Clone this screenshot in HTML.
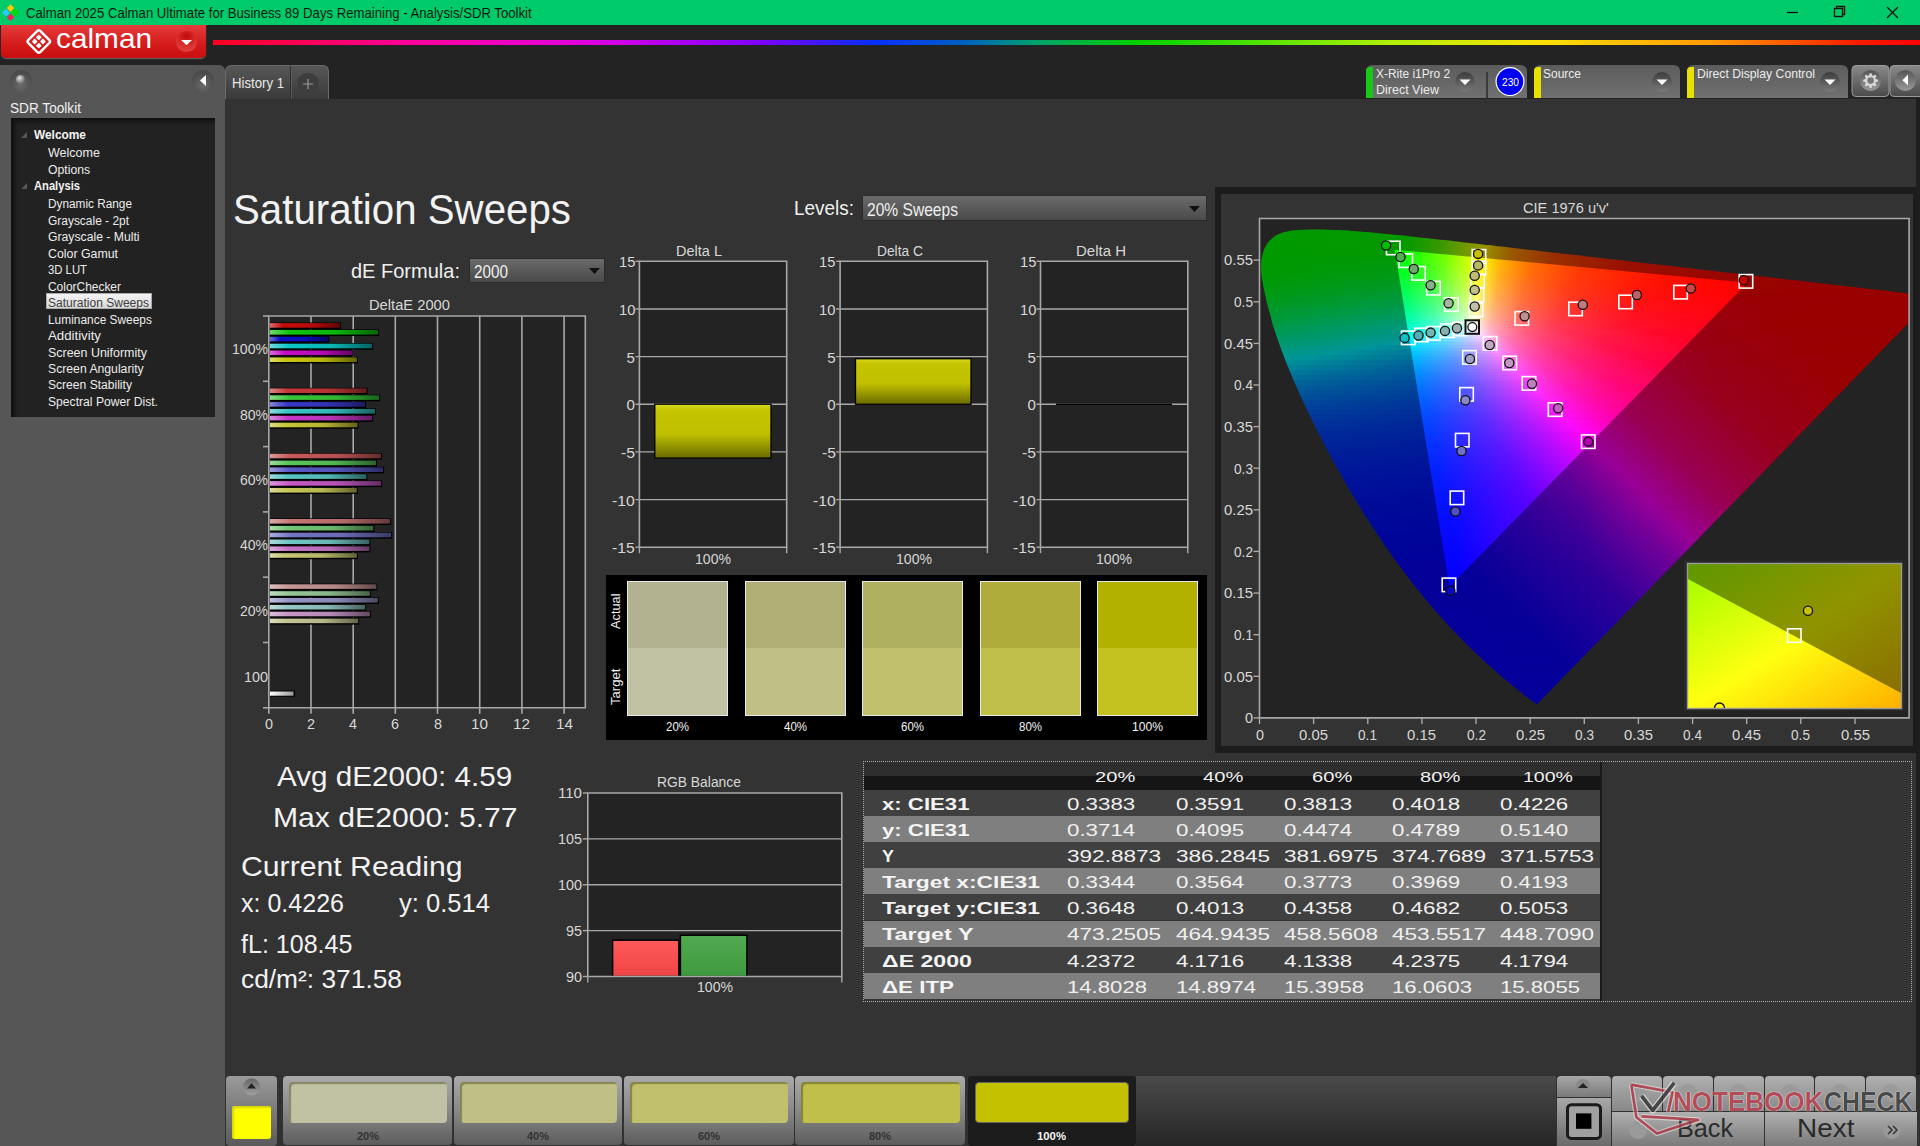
<!DOCTYPE html><html><head><meta charset="utf-8"><style>
*{margin:0;padding:0;box-sizing:border-box}
html,body{width:1920px;height:1146px;overflow:hidden;background:#333;font-family:"Liberation Sans",sans-serif}
.b{position:absolute}
.t{position:absolute;white-space:nowrap;line-height:1;transform-origin:0 0}
svg{position:absolute;left:0;top:0}
</style></head><body><div class="b" style="left:0.0px;top:0.0px;width:1920.0px;height:1146.0px;background:#333"></div>
<div class="b" style="left:0.0px;top:0.0px;width:1920.0px;height:25.0px;background:#00cb6a"></div>
<div class="b" style="left:0.0px;top:25.0px;width:1920.0px;height:74.0px;background:#232323"></div>
<div class="b" style="left:0.0px;top:65.0px;width:225.0px;height:1081.0px;background:#565656;border-top-right-radius:6px"></div>
<div class="b" style="left:225.0px;top:99.0px;width:1691.0px;height:976.0px;background:#333"></div>
<div class="b" style="left:1916.0px;top:99.0px;width:4.0px;height:1047.0px;background:#1e1e1e"></div>
<svg width="30" height="25" style="left:0;top:0"><g transform="translate(10.5,12.7) rotate(45)"><rect x="-6" y="-6" width="5.4" height="5.4" rx="1" fill="#ffc800"/><rect x="0.6" y="-6" width="5.4" height="5.4" rx="1" fill="#00dc00"/><rect x="-6" y="0.6" width="5.4" height="5.4" rx="1" fill="#30c8ff"/><rect x="0.6" y="0.6" width="5.4" height="5.4" rx="1" fill="#ff1a60"/></g></svg>
<div class="t" style="left:26.0px;top:6.4px;font-size:14.83px;transform:scaleX(0.887);color:#0a1a0f;">Calman 2025 Calman Ultimate for Business 89 Days Remaining  - Analysis/SDR Toolkit</div>
<svg width="160" height="25" style="left:1760px;top:0"><g stroke="#111" stroke-width="1.3" fill="none"><line x1="27" y1="12.5" x2="38" y2="12.5"/><rect x="74.5" y="8.5" width="8" height="8"/><path d="M76.5 8.5V6.5h8v8h-2"/><path d="M127 7l11 11M138 7l-11 11"/></g></svg>
<div class="b" style="left:1.0px;top:25.0px;width:205.0px;height:32.5px;background:linear-gradient(#e43c3c,#d41a1a 60%,#c80e0e);border-radius:0 0 5px 5px;box-shadow:0 1px 1px #666"></div>
<svg width="210" height="36" style="left:0;top:24px"><g transform="translate(38.8,17.5) rotate(45)" fill="none" stroke="#fff" stroke-width="2.4"><rect x="-8.5" y="-8.5" width="17" height="17" rx="2"/></g><g transform="translate(38.8,17.5) rotate(45)" fill="#fff"><rect x="-5" y="-5" width="4.2" height="4.2" rx="0.8"/><rect x="0.8" y="-5" width="4.2" height="4.2" rx="0.8"/><rect x="-5" y="0.8" width="4.2" height="4.2" rx="0.8"/><rect x="0.8" y="0.8" width="4.2" height="4.2" rx="0.8"/></g><defs><radialGradient id="lg1" cx="0.5" cy="0.25" r="0.75"><stop offset="0" stop-color="#c40a0a"/><stop offset="1" stop-color="#e24444"/></radialGradient></defs><circle cx="186.5" cy="17.5" r="10.5" fill="url(#lg1)"/><path d="M181 15.9h11l-5.5 5.4z" fill="#fff"/></svg>
<div class="t" style="left:56.3px;top:25.1px;font-size:27.50px;transform:scaleX(1.083);color:#ffffff;">calman</div>
<div class="b" style="left:213.0px;top:40.0px;width:1707.0px;height:5.0px;background:linear-gradient(90deg,#ff0020 0%,#ff00a0 12%,#e000e0 22%,#8000ff 32%,#0030ff 39%,#0060c0 44%,#00a070 48%,#00d000 54%,#40e000 60%,#b0f000 69%,#ffe000 78%,#ff9800 88%,#ff2000 96%,#ff0000 100%)"></div>
<div class="b" style="left:225.0px;top:65.0px;width:104.0px;height:34.0px;background:linear-gradient(#575757,#3a3a3a);border:1px solid #6a6a6a;border-bottom:none;border-radius:6px 6px 0 0"></div>
<div class="b" style="left:290.0px;top:66.0px;width:1.0px;height:33.0px;background:#2e2e2e"></div>
<div class="b" style="left:291.0px;top:66.0px;width:1.0px;height:33.0px;background:#5a5a5a"></div>
<div class="t" style="left:232.0px;top:77.0px;font-size:13.95px;transform:scaleX(0.945);color:#e8e8e8;">History 1</div>
<svg width="30" height="30" style="left:294px;top:68px"><circle cx="14" cy="16" r="11" fill="#3e3e3e"/><path d="M14 11v10M9 16h10" stroke="#9a9a9a" stroke-width="1.2"/></svg>
<div class="b" style="left:1366.0px;top:65.0px;width:161.0px;height:33.0px;background:linear-gradient(#5c5c5c,#707070);border-radius:6px 6px 0 0"></div>
<div class="b" style="left:1366.0px;top:67.0px;width:7.0px;height:31.0px;background:#18c818;border-radius:4px 0 0 0"></div>
<div class="b" style="left:1486.0px;top:72.0px;width:2.0px;height:26.0px;background:#3a3a3a"></div>
<div class="b" style="left:1534.0px;top:65.0px;width:146.0px;height:33.0px;background:linear-gradient(#5c5c5c,#707070);border-radius:6px 6px 0 0"></div>
<div class="b" style="left:1534.0px;top:67.0px;width:7.0px;height:31.0px;background:#e8e000;border-radius:4px 0 0 0"></div>
<div class="b" style="left:1687.0px;top:65.0px;width:161.0px;height:33.0px;background:linear-gradient(#5c5c5c,#707070);border-radius:6px 6px 0 0"></div>
<div class="b" style="left:1687.0px;top:67.0px;width:7.0px;height:31.0px;background:#e8e000;border-radius:4px 0 0 0"></div>
<div class="t" style="left:1376.0px;top:68.7px;font-size:11.92px;color:#ececec;">X-Rite i1Pro 2</div>
<div class="t" style="left:1376.0px;top:85.0px;font-size:11.92px;transform:scaleX(1.049);color:#ececec;">Direct View</div>
<div class="t" style="left:1543.0px;top:68.7px;font-size:11.92px;transform:scaleX(1.006);color:#ececec;">Source</div>
<div class="t" style="left:1697.0px;top:68.7px;font-size:11.92px;transform:scaleX(1.024);color:#ececec;">Direct Display Control</div>
<svg width="560" height="40" style="left:1360px;top:60px"><defs><linearGradient id="ddg" x1="0" y1="0" x2="0" y2="1"><stop offset="0" stop-color="#3c3c3c"/><stop offset="1" stop-color="#7a7a7a"/></linearGradient><linearGradient id="gbg" x1="0" y1="0" x2="0" y2="1"><stop offset="0" stop-color="#8a8a8a"/><stop offset="1" stop-color="#4a4a4a"/></linearGradient></defs><circle cx="105.0" cy="22.0" r="10.0" fill="url(#ddg)"/><path d="M99.5 19.5h11l-5.5 5.5z" fill="#fff"/><circle cx="150" cy="21.6" r="14.5" fill="#fff"/><circle cx="150" cy="21.6" r="13.3" fill="#0000f0"/><circle cx="302.0" cy="22.0" r="10.0" fill="url(#ddg)"/><path d="M296.5 19.5h11l-5.5 5.5z" fill="#fff"/><circle cx="470.0" cy="22.0" r="10.0" fill="url(#ddg)"/><path d="M464.5 19.5h11l-5.5 5.5z" fill="#fff"/><rect x="492" y="5.5" width="37" height="31" rx="4" fill="url(#gbg)" stroke="#9a9a9a"/><defs><linearGradient id="gcg" x1="0" y1="0" x2="0" y2="1"><stop offset="0" stop-color="#555"/><stop offset="1" stop-color="#9a9a9a"/></linearGradient></defs><circle cx="510.6" cy="20.6" r="10.5" fill="url(#gcg)"/><g transform="translate(510.6,20.6)"><path d="M-1.60 -5.16 L-0.90 -7.45 L0.90 -7.45 L1.60 -5.16 L2.52 -4.78 L4.63 -5.90 L5.90 -4.63 L4.78 -2.52 L5.16 -1.60 L7.45 -0.90 L7.45 0.90 L5.16 1.60 L4.78 2.52 L5.90 4.63 L4.63 5.90 L2.52 4.78 L1.60 5.16 L0.90 7.45 L-0.90 7.45 L-1.60 5.16 L-2.52 4.78 L-4.63 5.90 L-5.90 4.63 L-4.78 2.52 L-5.16 1.60 L-7.45 0.90 L-7.45 -0.90 L-5.16 -1.60 L-4.78 -2.52 L-5.90 -4.63 L-4.63 -5.90 L-2.52 -4.78Z" fill="#d8d8d8"/><circle r="3.3" fill="#777"/></g><rect x="530" y="5.5" width="40" height="31" rx="4" fill="url(#gbg)" stroke="#9a9a9a"/><circle cx="545.4" cy="20.6" r="10.5" fill="url(#gcg)"/><path d="M542.4 20.3L548 14.5V25.4z" fill="#fff"/></svg>
<div class="t" style="left:1501.5px;top:76.0px;font-size:11.63px;transform:scaleX(0.876);color:#ffffff;">230</div>
<svg width="225" height="40" style="left:0;top:63px"><defs><radialGradient id="sbg" cx="0.5" cy="0.7" r="0.6"><stop offset="0" stop-color="#6a6a6a"/><stop offset="1" stop-color="#4a4a4a"/></radialGradient><radialGradient id="sball" cx="0.4" cy="0.35" r="0.6"><stop offset="0" stop-color="#e0e0e0"/><stop offset="1" stop-color="#707070"/></radialGradient></defs><circle cx="21" cy="18" r="11" fill="url(#sbg)"/><circle cx="20.5" cy="16.5" r="4.5" fill="url(#sball)"/><circle cx="203" cy="18" r="11" fill="url(#sbg)"/><path d="M200 17.5l6-5.5v11z" fill="#fff"/></svg>
<div class="t" style="left:10.0px;top:100.3px;font-size:15.12px;transform:scaleX(0.902);color:#f0f0f0;">SDR Toolkit</div>
<div class="b" style="left:11.0px;top:118.0px;width:204.0px;height:298.6px;background:#222;box-shadow:inset 3px 3px 4px #0e0e0e"></div>
<svg width="8" height="8" style="left:20px;top:131px"><path d="M7 1v6h-6z" fill="#555"/></svg>
<div class="t" style="left:34.0px;top:128.8px;font-size:12.21px;transform:scaleX(0.974);color:#f4f4f4;font-weight:bold;">Welcome</div>
<div class="t" style="left:48.0px;top:146.8px;font-size:12.21px;transform:scaleX(1.026);color:#ececec;">Welcome</div>
<div class="t" style="left:48.0px;top:163.8px;font-size:12.21px;color:#ececec;">Options</div>
<svg width="8" height="8" style="left:20px;top:182px"><path d="M7 1v6h-6z" fill="#555"/></svg>
<div class="t" style="left:34.0px;top:179.8px;font-size:12.21px;transform:scaleX(0.916);color:#f4f4f4;font-weight:bold;">Analysis</div>
<div class="t" style="left:48.0px;top:197.8px;font-size:12.21px;transform:scaleX(0.967);color:#ececec;">Dynamic Range</div>
<div class="t" style="left:48.0px;top:214.8px;font-size:12.21px;transform:scaleX(0.979);color:#ececec;">Grayscale - 2pt</div>
<div class="t" style="left:48.0px;top:230.8px;font-size:12.21px;color:#ececec;">Grayscale - Multi</div>
<div class="t" style="left:48.0px;top:247.8px;font-size:12.21px;transform:scaleX(1.012);color:#ececec;">Color Gamut</div>
<div class="t" style="left:48.0px;top:263.8px;font-size:12.21px;transform:scaleX(0.927);color:#ececec;">3D LUT</div>
<div class="t" style="left:48.0px;top:280.8px;font-size:12.21px;transform:scaleX(0.978);color:#ececec;">ColorChecker</div>
<div class="b" style="left:46.0px;top:293.0px;width:106.0px;height:16.0px;background:linear-gradient(#f4f4f4,#d8d8d8);border:1px solid #aaa"></div>
<div class="t" style="left:48.0px;top:296.8px;font-size:12.21px;transform:scaleX(0.986);color:#404040;">Saturation Sweeps</div>
<div class="t" style="left:48.0px;top:313.8px;font-size:12.21px;transform:scaleX(0.976);color:#ececec;">Luminance Sweeps</div>
<div class="t" style="left:48.0px;top:329.8px;font-size:12.21px;transform:scaleX(1.085);color:#ececec;">Additivity</div>
<div class="t" style="left:48.0px;top:346.8px;font-size:12.21px;transform:scaleX(1.020);color:#ececec;">Screen Uniformity</div>
<div class="t" style="left:48.0px;top:362.8px;font-size:12.21px;color:#ececec;">Screen Angularity</div>
<div class="t" style="left:48.0px;top:378.8px;font-size:12.21px;transform:scaleX(0.990);color:#ececec;">Screen Stability</div>
<div class="t" style="left:48.0px;top:395.8px;font-size:12.21px;transform:scaleX(0.995);color:#ececec;">Spectral Power Dist.</div>
<div class="t" style="left:233.0px;top:188.4px;font-size:43.02px;transform:scaleX(0.936);color:#f2f2f2;">Saturation Sweeps</div>
<div class="t" style="left:351.0px;top:260.8px;font-size:20.93px;transform:scaleX(0.956);color:#f0f0f0;">dE Formula:</div>
<div class="b" style="left:469.0px;top:258.0px;width:136.0px;height:25.0px;background:linear-gradient(#6a6a6a,#4a4a4a);border:1px solid #2a2a2a"></div>
<div class="t" style="left:474.0px;top:263.2px;font-size:18.17px;transform:scaleX(0.841);color:#f0f0f0;">2000</div>
<svg width="14" height="10" style="left:588px;top:266px"><path d="M1 2h11l-5.5 6z" fill="#111"/></svg>
<div class="t" style="left:793.7px;top:197.9px;font-size:20.93px;transform:scaleX(0.905);color:#f0f0f0;">Levels:</div>
<div class="b" style="left:862.0px;top:195.0px;width:345.0px;height:26.0px;background:linear-gradient(#6a6a6a,#4a4a4a);border:1px solid #2a2a2a"></div>
<div class="t" style="left:867.0px;top:201.2px;font-size:18.17px;transform:scaleX(0.858);color:#f0f0f0;">20% Sweeps</div>
<svg width="14" height="10" style="left:1188px;top:204px"><path d="M1 2h11l-5.5 6z" fill="#111"/></svg>
<svg width="400" height="460" style="left:220px;top:300px"><g transform="translate(-220,-300)"><defs><linearGradient id="bg0"><stop offset="0" stop-color="#dc6d6d"/><stop offset="0.18" stop-color="#c60c0c"/><stop offset="0.6" stop-color="#b60b0b"/><stop offset="1" stop-color="#630606"/></linearGradient><linearGradient id="bg1"><stop offset="0" stop-color="#6ddc6d"/><stop offset="0.18" stop-color="#0cc60c"/><stop offset="0.6" stop-color="#0bb60b"/><stop offset="1" stop-color="#066306"/></linearGradient><linearGradient id="bg2"><stop offset="0" stop-color="#6d6ddc"/><stop offset="0.18" stop-color="#0c0cc6"/><stop offset="0.6" stop-color="#0b0bb6"/><stop offset="1" stop-color="#060663"/></linearGradient><linearGradient id="bg3"><stop offset="0" stop-color="#6ddcdc"/><stop offset="0.18" stop-color="#0cc6c6"/><stop offset="0.6" stop-color="#0bb6b6"/><stop offset="1" stop-color="#066363"/></linearGradient><linearGradient id="bg4"><stop offset="0" stop-color="#dc6ddc"/><stop offset="0.18" stop-color="#c60cc6"/><stop offset="0.6" stop-color="#b60bb6"/><stop offset="1" stop-color="#630663"/></linearGradient><linearGradient id="bg5"><stop offset="0" stop-color="#dcdc6d"/><stop offset="0.18" stop-color="#c6c60c"/><stop offset="0.6" stop-color="#b6b60b"/><stop offset="1" stop-color="#636306"/></linearGradient><linearGradient id="bg6"><stop offset="0" stop-color="#dc8787"/><stop offset="0.18" stop-color="#c63737"/><stop offset="0.6" stop-color="#b63333"/><stop offset="1" stop-color="#631b1b"/></linearGradient><linearGradient id="bg7"><stop offset="0" stop-color="#87dc87"/><stop offset="0.18" stop-color="#37c637"/><stop offset="0.6" stop-color="#33b633"/><stop offset="1" stop-color="#1b631b"/></linearGradient><linearGradient id="bg8"><stop offset="0" stop-color="#8787dc"/><stop offset="0.18" stop-color="#3737c6"/><stop offset="0.6" stop-color="#3333b6"/><stop offset="1" stop-color="#1b1b63"/></linearGradient><linearGradient id="bg9"><stop offset="0" stop-color="#87dcdc"/><stop offset="0.18" stop-color="#37c6c6"/><stop offset="0.6" stop-color="#33b6b6"/><stop offset="1" stop-color="#1b6363"/></linearGradient><linearGradient id="bg10"><stop offset="0" stop-color="#dc87dc"/><stop offset="0.18" stop-color="#c637c6"/><stop offset="0.6" stop-color="#b633b6"/><stop offset="1" stop-color="#631b63"/></linearGradient><linearGradient id="bg11"><stop offset="0" stop-color="#dcdc87"/><stop offset="0.18" stop-color="#c6c637"/><stop offset="0.6" stop-color="#b6b633"/><stop offset="1" stop-color="#63631b"/></linearGradient><linearGradient id="bg12"><stop offset="0" stop-color="#dc9b9b"/><stop offset="0.18" stop-color="#c65959"/><stop offset="0.6" stop-color="#b65252"/><stop offset="1" stop-color="#632c2c"/></linearGradient><linearGradient id="bg13"><stop offset="0" stop-color="#9bdc9b"/><stop offset="0.18" stop-color="#59c659"/><stop offset="0.6" stop-color="#52b652"/><stop offset="1" stop-color="#2c632c"/></linearGradient><linearGradient id="bg14"><stop offset="0" stop-color="#9b9bdc"/><stop offset="0.18" stop-color="#5959c6"/><stop offset="0.6" stop-color="#5252b6"/><stop offset="1" stop-color="#2c2c63"/></linearGradient><linearGradient id="bg15"><stop offset="0" stop-color="#9bdcdc"/><stop offset="0.18" stop-color="#59c6c6"/><stop offset="0.6" stop-color="#52b6b6"/><stop offset="1" stop-color="#2c6363"/></linearGradient><linearGradient id="bg16"><stop offset="0" stop-color="#dc9bdc"/><stop offset="0.18" stop-color="#c659c6"/><stop offset="0.6" stop-color="#b652b6"/><stop offset="1" stop-color="#632c63"/></linearGradient><linearGradient id="bg17"><stop offset="0" stop-color="#dcdc9b"/><stop offset="0.18" stop-color="#c6c659"/><stop offset="0.6" stop-color="#b6b652"/><stop offset="1" stop-color="#63632c"/></linearGradient><linearGradient id="bg18"><stop offset="0" stop-color="#dcabab"/><stop offset="0.18" stop-color="#c67373"/><stop offset="0.6" stop-color="#b66a6a"/><stop offset="1" stop-color="#633939"/></linearGradient><linearGradient id="bg19"><stop offset="0" stop-color="#abdcab"/><stop offset="0.18" stop-color="#73c673"/><stop offset="0.6" stop-color="#6ab66a"/><stop offset="1" stop-color="#396339"/></linearGradient><linearGradient id="bg20"><stop offset="0" stop-color="#ababdc"/><stop offset="0.18" stop-color="#7373c6"/><stop offset="0.6" stop-color="#6a6ab6"/><stop offset="1" stop-color="#393963"/></linearGradient><linearGradient id="bg21"><stop offset="0" stop-color="#abdcdc"/><stop offset="0.18" stop-color="#73c6c6"/><stop offset="0.6" stop-color="#6ab6b6"/><stop offset="1" stop-color="#396363"/></linearGradient><linearGradient id="bg22"><stop offset="0" stop-color="#dcabdc"/><stop offset="0.18" stop-color="#c673c6"/><stop offset="0.6" stop-color="#b66ab6"/><stop offset="1" stop-color="#633963"/></linearGradient><linearGradient id="bg23"><stop offset="0" stop-color="#dcdcab"/><stop offset="0.18" stop-color="#c6c673"/><stop offset="0.6" stop-color="#b6b66a"/><stop offset="1" stop-color="#636339"/></linearGradient><linearGradient id="bg24"><stop offset="0" stop-color="#dcbfbf"/><stop offset="0.18" stop-color="#c69595"/><stop offset="0.6" stop-color="#b68989"/><stop offset="1" stop-color="#634a4a"/></linearGradient><linearGradient id="bg25"><stop offset="0" stop-color="#bfdcbf"/><stop offset="0.18" stop-color="#95c695"/><stop offset="0.6" stop-color="#89b689"/><stop offset="1" stop-color="#4a634a"/></linearGradient><linearGradient id="bg26"><stop offset="0" stop-color="#bfbfdc"/><stop offset="0.18" stop-color="#9595c6"/><stop offset="0.6" stop-color="#8989b6"/><stop offset="1" stop-color="#4a4a63"/></linearGradient><linearGradient id="bg27"><stop offset="0" stop-color="#bfdcdc"/><stop offset="0.18" stop-color="#95c6c6"/><stop offset="0.6" stop-color="#89b6b6"/><stop offset="1" stop-color="#4a6363"/></linearGradient><linearGradient id="bg28"><stop offset="0" stop-color="#dcbfdc"/><stop offset="0.18" stop-color="#c695c6"/><stop offset="0.6" stop-color="#b689b6"/><stop offset="1" stop-color="#634a63"/></linearGradient><linearGradient id="bg29"><stop offset="0" stop-color="#dcdcbf"/><stop offset="0.18" stop-color="#c6c695"/><stop offset="0.6" stop-color="#b6b689"/><stop offset="1" stop-color="#63634a"/></linearGradient><linearGradient id="bgw"><stop offset="0" stop-color="#fff"/><stop offset="1" stop-color="#999"/></linearGradient></defs><rect x="268.8" y="316.0" width="316.5" height="391.8" fill="#232323"/><line x1="311.0" y1="316.0" x2="311.0" y2="707.8" stroke="#a8a8a8" stroke-width="1.6"/><line x1="353.2" y1="316.0" x2="353.2" y2="707.8" stroke="#a8a8a8" stroke-width="1.6"/><line x1="395.3" y1="316.0" x2="395.3" y2="707.8" stroke="#a8a8a8" stroke-width="1.6"/><line x1="437.5" y1="316.0" x2="437.5" y2="707.8" stroke="#a8a8a8" stroke-width="1.6"/><line x1="479.7" y1="316.0" x2="479.7" y2="707.8" stroke="#a8a8a8" stroke-width="1.6"/><line x1="521.9" y1="316.0" x2="521.9" y2="707.8" stroke="#a8a8a8" stroke-width="1.6"/><line x1="564.1" y1="316.0" x2="564.1" y2="707.8" stroke="#a8a8a8" stroke-width="1.6"/><rect x="268.8" y="322.5" width="72.1" height="6.6" fill="#000"/><rect x="269.8" y="323.1" width="70.1" height="4.6" fill="url(#bg0)"/><rect x="268.8" y="329.4" width="110.3" height="6.6" fill="#000"/><rect x="269.8" y="330.0" width="108.3" height="4.6" fill="url(#bg1)"/><rect x="268.8" y="336.2" width="60.6" height="6.6" fill="#000"/><rect x="269.8" y="336.8" width="58.6" height="4.6" fill="url(#bg2)"/><rect x="268.8" y="343.1" width="104.3" height="6.6" fill="#000"/><rect x="269.8" y="343.7" width="102.3" height="4.6" fill="url(#bg3)"/><rect x="268.8" y="349.9" width="85.0" height="6.6" fill="#000"/><rect x="269.8" y="350.5" width="83.0" height="4.6" fill="url(#bg4)"/><rect x="268.8" y="356.8" width="89.1" height="6.6" fill="#000"/><rect x="269.8" y="357.4" width="87.1" height="4.6" fill="url(#bg5)"/><rect x="268.8" y="387.8" width="98.8" height="6.6" fill="#000"/><rect x="269.8" y="388.4" width="96.8" height="4.6" fill="url(#bg6)"/><rect x="268.8" y="394.7" width="111.4" height="6.6" fill="#000"/><rect x="269.8" y="395.3" width="109.4" height="4.6" fill="url(#bg7)"/><rect x="268.8" y="401.5" width="97.3" height="6.6" fill="#000"/><rect x="269.8" y="402.1" width="95.3" height="4.6" fill="url(#bg8)"/><rect x="268.8" y="408.4" width="107.2" height="6.6" fill="#000"/><rect x="269.8" y="409.0" width="105.2" height="4.6" fill="url(#bg9)"/><rect x="268.8" y="415.2" width="104.3" height="6.6" fill="#000"/><rect x="269.8" y="415.8" width="102.3" height="4.6" fill="url(#bg10)"/><rect x="268.8" y="422.1" width="89.7" height="6.6" fill="#000"/><rect x="269.8" y="422.7" width="87.7" height="4.6" fill="url(#bg11)"/><rect x="268.8" y="453.1" width="113.3" height="6.6" fill="#000"/><rect x="269.8" y="453.7" width="111.3" height="4.6" fill="url(#bg12)"/><rect x="268.8" y="460.0" width="108.3" height="6.6" fill="#000"/><rect x="269.8" y="460.6" width="106.3" height="4.6" fill="url(#bg13)"/><rect x="268.8" y="466.8" width="115.3" height="6.6" fill="#000"/><rect x="269.8" y="467.4" width="113.3" height="4.6" fill="url(#bg14)"/><rect x="268.8" y="473.7" width="98.5" height="6.6" fill="#000"/><rect x="269.8" y="474.3" width="96.5" height="4.6" fill="url(#bg15)"/><rect x="268.8" y="480.5" width="113.3" height="6.6" fill="#000"/><rect x="269.8" y="481.1" width="111.3" height="4.6" fill="url(#bg16)"/><rect x="268.8" y="487.4" width="89.0" height="6.6" fill="#000"/><rect x="269.8" y="488.0" width="87.0" height="4.6" fill="url(#bg17)"/><rect x="268.8" y="518.4" width="122.3" height="6.6" fill="#000"/><rect x="269.8" y="519.0" width="120.3" height="4.6" fill="url(#bg18)"/><rect x="268.8" y="525.2" width="105.5" height="6.6" fill="#000"/><rect x="269.8" y="525.9" width="103.5" height="4.6" fill="url(#bg19)"/><rect x="268.8" y="532.1" width="123.4" height="6.6" fill="#000"/><rect x="269.8" y="532.7" width="121.4" height="4.6" fill="url(#bg20)"/><rect x="268.8" y="538.9" width="101.6" height="6.6" fill="#000"/><rect x="269.8" y="539.5" width="99.6" height="4.6" fill="url(#bg21)"/><rect x="268.8" y="545.8" width="101.6" height="6.6" fill="#000"/><rect x="269.8" y="546.4" width="99.6" height="4.6" fill="url(#bg22)"/><rect x="268.8" y="552.6" width="89.0" height="6.6" fill="#000"/><rect x="269.8" y="553.2" width="87.0" height="4.6" fill="url(#bg23)"/><rect x="268.8" y="583.7" width="108.6" height="6.6" fill="#000"/><rect x="269.8" y="584.3" width="106.6" height="4.6" fill="url(#bg24)"/><rect x="268.8" y="590.6" width="102.1" height="6.6" fill="#000"/><rect x="269.8" y="591.2" width="100.1" height="4.6" fill="url(#bg25)"/><rect x="268.8" y="597.4" width="110.0" height="6.6" fill="#000"/><rect x="269.8" y="598.0" width="108.0" height="4.6" fill="url(#bg26)"/><rect x="268.8" y="604.2" width="97.4" height="6.6" fill="#000"/><rect x="269.8" y="604.9" width="95.4" height="4.6" fill="url(#bg27)"/><rect x="268.8" y="611.1" width="102.1" height="6.6" fill="#000"/><rect x="269.8" y="611.7" width="100.1" height="4.6" fill="url(#bg28)"/><rect x="268.8" y="618.0" width="90.4" height="6.6" fill="#000"/><rect x="269.8" y="618.6" width="88.4" height="4.6" fill="url(#bg29)"/><rect x="268.8" y="690.5" width="26.2" height="6.2" fill="#000"/><rect x="269.8" y="691.5" width="23.7" height="4.2" fill="url(#bgw)"/><path d="M268.8 316.0H585.3V707.8H268.8z" fill="none" stroke="#a8a8a8" stroke-width="1.6"/><line x1="263" y1="316.0" x2="268.8" y2="316.0" stroke="#a8a8a8" stroke-width="1.6"/><line x1="263" y1="381.3" x2="268.8" y2="381.3" stroke="#a8a8a8" stroke-width="1.6"/><line x1="263" y1="446.6" x2="268.8" y2="446.6" stroke="#a8a8a8" stroke-width="1.6"/><line x1="263" y1="511.9" x2="268.8" y2="511.9" stroke="#a8a8a8" stroke-width="1.6"/><line x1="263" y1="577.2" x2="268.8" y2="577.2" stroke="#a8a8a8" stroke-width="1.6"/><line x1="263" y1="642.5" x2="268.8" y2="642.5" stroke="#a8a8a8" stroke-width="1.6"/><line x1="263" y1="707.8" x2="268.8" y2="707.8" stroke="#a8a8a8" stroke-width="1.6"/><line x1="268.8" y1="707.8" x2="268.8" y2="713.8" stroke="#a8a8a8" stroke-width="1.6"/><line x1="311.0" y1="707.8" x2="311.0" y2="713.8" stroke="#a8a8a8" stroke-width="1.6"/><line x1="353.2" y1="707.8" x2="353.2" y2="713.8" stroke="#a8a8a8" stroke-width="1.6"/><line x1="395.3" y1="707.8" x2="395.3" y2="713.8" stroke="#a8a8a8" stroke-width="1.6"/><line x1="437.5" y1="707.8" x2="437.5" y2="713.8" stroke="#a8a8a8" stroke-width="1.6"/><line x1="479.7" y1="707.8" x2="479.7" y2="713.8" stroke="#a8a8a8" stroke-width="1.6"/><line x1="521.9" y1="707.8" x2="521.9" y2="713.8" stroke="#a8a8a8" stroke-width="1.6"/><line x1="564.1" y1="707.8" x2="564.1" y2="713.8" stroke="#a8a8a8" stroke-width="1.6"/></g></svg>
<div class="t" style="left:368.5px;top:299.0px;font-size:13.95px;transform:scaleX(1.055);color:#d8d8d8;">DeltaE 2000</div>
<div class="t" style="left:232.0px;top:342.4px;font-size:14.83px;transform:scaleX(0.949);color:#d8d8d8;">100%</div>
<div class="t" style="left:240.0px;top:407.7px;font-size:14.83px;transform:scaleX(0.944);color:#d8d8d8;">80%</div>
<div class="t" style="left:240.0px;top:473.0px;font-size:14.83px;transform:scaleX(0.944);color:#d8d8d8;">60%</div>
<div class="t" style="left:240.0px;top:538.3px;font-size:14.83px;transform:scaleX(0.944);color:#d8d8d8;">40%</div>
<div class="t" style="left:240.0px;top:603.6px;font-size:14.83px;transform:scaleX(0.944);color:#d8d8d8;">20%</div>
<div class="t" style="left:244.0px;top:669.5px;font-size:14.83px;transform:scaleX(0.970);color:#d8d8d8;">100</div>
<div class="t" style="left:264.8px;top:717.4px;font-size:14.83px;transform:scaleX(0.970);color:#d8d8d8;">0</div>
<div class="t" style="left:307.0px;top:717.4px;font-size:14.83px;transform:scaleX(0.970);color:#d8d8d8;">2</div>
<div class="t" style="left:349.2px;top:717.4px;font-size:14.83px;transform:scaleX(0.970);color:#d8d8d8;">4</div>
<div class="t" style="left:391.3px;top:717.4px;font-size:14.83px;transform:scaleX(0.970);color:#d8d8d8;">6</div>
<div class="t" style="left:433.5px;top:717.4px;font-size:14.83px;transform:scaleX(0.970);color:#d8d8d8;">8</div>
<div class="t" style="left:471.2px;top:717.4px;font-size:14.83px;transform:scaleX(1.031);color:#d8d8d8;">10</div>
<div class="t" style="left:513.4px;top:717.4px;font-size:14.83px;transform:scaleX(1.031);color:#d8d8d8;">12</div>
<div class="t" style="left:555.6px;top:717.4px;font-size:14.83px;transform:scaleX(1.031);color:#d8d8d8;">14</div>
<svg width="600" height="330" style="left:600px;top:240px"><g transform="translate(-600,-240)"><defs><linearGradient id="yb" x1="0" y1="0" x2="0" y2="1"><stop offset="0" stop-color="#d8d820"/><stop offset="0.12" stop-color="#c4c400"/><stop offset="0.55" stop-color="#c0c000"/><stop offset="1" stop-color="#6a6a00"/></linearGradient></defs><rect x="639.4" y="261.3" width="147.3" height="285.9" fill="#232323"/><line x1="635.4" y1="309.0" x2="786.7" y2="309.0" stroke="#a8a8a8" stroke-width="1.4"/><line x1="635.4" y1="356.6" x2="786.7" y2="356.6" stroke="#a8a8a8" stroke-width="1.4"/><line x1="635.4" y1="404.2" x2="786.7" y2="404.2" stroke="#a8a8a8" stroke-width="1.4"/><line x1="635.4" y1="451.9" x2="786.7" y2="451.9" stroke="#a8a8a8" stroke-width="1.4"/><line x1="635.4" y1="499.6" x2="786.7" y2="499.6" stroke="#a8a8a8" stroke-width="1.4"/><path d="M639.4 261.3H786.7V547.2H639.4z" fill="none" stroke="#a8a8a8" stroke-width="1.6"/><line x1="635.4" y1="261.3" x2="639.4" y2="261.3" stroke="#a8a8a8" stroke-width="1.4"/><line x1="635.4" y1="547.2" x2="639.4" y2="547.2" stroke="#a8a8a8" stroke-width="1.4"/><line x1="639.4" y1="547.2" x2="639.4" y2="553.2" stroke="#a8a8a8" stroke-width="1.4"/><line x1="786.7" y1="547.2" x2="786.7" y2="553.2" stroke="#a8a8a8" stroke-width="1.4"/><rect x="840.1" y="261.3" width="147.3" height="285.9" fill="#232323"/><line x1="836.1" y1="309.0" x2="987.4" y2="309.0" stroke="#a8a8a8" stroke-width="1.4"/><line x1="836.1" y1="356.6" x2="987.4" y2="356.6" stroke="#a8a8a8" stroke-width="1.4"/><line x1="836.1" y1="404.2" x2="987.4" y2="404.2" stroke="#a8a8a8" stroke-width="1.4"/><line x1="836.1" y1="451.9" x2="987.4" y2="451.9" stroke="#a8a8a8" stroke-width="1.4"/><line x1="836.1" y1="499.6" x2="987.4" y2="499.6" stroke="#a8a8a8" stroke-width="1.4"/><path d="M840.1 261.3H987.4V547.2H840.1z" fill="none" stroke="#a8a8a8" stroke-width="1.6"/><line x1="836.1" y1="261.3" x2="840.1" y2="261.3" stroke="#a8a8a8" stroke-width="1.4"/><line x1="836.1" y1="547.2" x2="840.1" y2="547.2" stroke="#a8a8a8" stroke-width="1.4"/><line x1="840.1" y1="547.2" x2="840.1" y2="553.2" stroke="#a8a8a8" stroke-width="1.4"/><line x1="987.4" y1="547.2" x2="987.4" y2="553.2" stroke="#a8a8a8" stroke-width="1.4"/><rect x="1040.5" y="261.3" width="147.3" height="285.9" fill="#232323"/><line x1="1036.5" y1="309.0" x2="1187.8" y2="309.0" stroke="#a8a8a8" stroke-width="1.4"/><line x1="1036.5" y1="356.6" x2="1187.8" y2="356.6" stroke="#a8a8a8" stroke-width="1.4"/><line x1="1036.5" y1="404.2" x2="1187.8" y2="404.2" stroke="#a8a8a8" stroke-width="1.4"/><line x1="1036.5" y1="451.9" x2="1187.8" y2="451.9" stroke="#a8a8a8" stroke-width="1.4"/><line x1="1036.5" y1="499.6" x2="1187.8" y2="499.6" stroke="#a8a8a8" stroke-width="1.4"/><path d="M1040.5 261.3H1187.8V547.2H1040.5z" fill="none" stroke="#a8a8a8" stroke-width="1.6"/><line x1="1036.5" y1="261.3" x2="1040.5" y2="261.3" stroke="#a8a8a8" stroke-width="1.4"/><line x1="1036.5" y1="547.2" x2="1040.5" y2="547.2" stroke="#a8a8a8" stroke-width="1.4"/><line x1="1040.5" y1="547.2" x2="1040.5" y2="553.2" stroke="#a8a8a8" stroke-width="1.4"/><line x1="1187.8" y1="547.2" x2="1187.8" y2="553.2" stroke="#a8a8a8" stroke-width="1.4"/><rect x="654.8" y="404.2" width="116.2" height="53.9" fill="url(#yb)" stroke="#000" stroke-width="1.3"/><rect x="855.5" y="358.7" width="115.5" height="45.6" fill="url(#yb)" stroke="#000" stroke-width="1.3"/><line x1="1056" y1="404.2" x2="1172" y2="404.2" stroke="#000" stroke-width="1.5"/></g></svg>
<div class="t" style="left:676.4px;top:244.8px;font-size:13.95px;transform:scaleX(1.041);color:#d8d8d8;">Delta L</div>
<div class="t" style="left:618.5px;top:254.4px;font-size:15.12px;transform:scaleX(0.975);color:#d8d8d8;">15</div>
<div class="t" style="left:618.5px;top:302.1px;font-size:15.12px;transform:scaleX(0.975);color:#d8d8d8;">10</div>
<div class="t" style="left:626.5px;top:349.7px;font-size:15.12px;color:#d8d8d8;">5</div>
<div class="t" style="left:626.5px;top:397.4px;font-size:15.12px;color:#d8d8d8;">0</div>
<div class="t" style="left:620.9px;top:445.0px;font-size:15.12px;transform:scaleX(1.042);color:#d8d8d8;">-5</div>
<div class="t" style="left:612.2px;top:492.7px;font-size:15.12px;transform:scaleX(1.039);color:#d8d8d8;">-10</div>
<div class="t" style="left:612.2px;top:540.3px;font-size:15.12px;transform:scaleX(1.039);color:#d8d8d8;">-15</div>
<div class="t" style="left:694.9px;top:552.8px;font-size:13.95px;transform:scaleX(1.009);color:#d8d8d8;">100%</div>
<div class="t" style="left:877.1px;top:244.8px;font-size:13.95px;transform:scaleX(0.989);color:#d8d8d8;">Delta C</div>
<div class="t" style="left:819.2px;top:254.4px;font-size:15.12px;transform:scaleX(0.975);color:#d8d8d8;">15</div>
<div class="t" style="left:819.2px;top:302.1px;font-size:15.12px;transform:scaleX(0.975);color:#d8d8d8;">10</div>
<div class="t" style="left:827.2px;top:349.7px;font-size:15.12px;color:#d8d8d8;">5</div>
<div class="t" style="left:827.2px;top:397.4px;font-size:15.12px;color:#d8d8d8;">0</div>
<div class="t" style="left:821.6px;top:445.0px;font-size:15.12px;transform:scaleX(1.042);color:#d8d8d8;">-5</div>
<div class="t" style="left:812.9px;top:492.7px;font-size:15.12px;transform:scaleX(1.039);color:#d8d8d8;">-10</div>
<div class="t" style="left:812.9px;top:540.3px;font-size:15.12px;transform:scaleX(1.039);color:#d8d8d8;">-15</div>
<div class="t" style="left:895.6px;top:552.8px;font-size:13.95px;transform:scaleX(1.009);color:#d8d8d8;">100%</div>
<div class="t" style="left:1075.5px;top:244.8px;font-size:13.95px;transform:scaleX(1.075);color:#d8d8d8;">Delta H</div>
<div class="t" style="left:1019.6px;top:254.4px;font-size:15.12px;transform:scaleX(0.975);color:#d8d8d8;">15</div>
<div class="t" style="left:1019.6px;top:302.1px;font-size:15.12px;transform:scaleX(0.975);color:#d8d8d8;">10</div>
<div class="t" style="left:1027.6px;top:349.7px;font-size:15.12px;color:#d8d8d8;">5</div>
<div class="t" style="left:1027.6px;top:397.4px;font-size:15.12px;color:#d8d8d8;">0</div>
<div class="t" style="left:1022.0px;top:445.0px;font-size:15.12px;transform:scaleX(1.042);color:#d8d8d8;">-5</div>
<div class="t" style="left:1013.3px;top:492.7px;font-size:15.12px;transform:scaleX(1.039);color:#d8d8d8;">-10</div>
<div class="t" style="left:1013.3px;top:540.3px;font-size:15.12px;transform:scaleX(1.039);color:#d8d8d8;">-15</div>
<div class="t" style="left:1096.0px;top:552.8px;font-size:13.95px;transform:scaleX(1.009);color:#d8d8d8;">100%</div>
<div class="b" style="left:606.4px;top:574.6px;width:600.6px;height:165.0px;background:#000"></div>
<div class="b" style="left:627.2px;top:581.0px;width:101.0px;height:134.5px;background:linear-gradient(#b3b290 0,#b3b290 50%,#c1c1a3 50%,#c1c1a3 100%);border:1px solid #e8e8e8"></div>
<div class="t" style="left:666.2px;top:721.0px;font-size:12.50px;transform:scaleX(0.919);color:#f4f4f4;">20%</div>
<div class="b" style="left:745.0px;top:581.0px;width:101.0px;height:134.5px;background:linear-gradient(#b0ae74 0,#b0ae74 50%,#c0bf85 50%,#c0bf85 100%);border:1px solid #e8e8e8"></div>
<div class="t" style="left:784.0px;top:721.0px;font-size:12.50px;transform:scaleX(0.919);color:#f4f4f4;">40%</div>
<div class="b" style="left:862.0px;top:581.0px;width:101.0px;height:134.5px;background:linear-gradient(#b0b15e 0,#b0b15e 50%,#c1c06c 50%,#c1c06c 100%);border:1px solid #e8e8e8"></div>
<div class="t" style="left:901.0px;top:721.0px;font-size:12.50px;transform:scaleX(0.919);color:#f4f4f4;">60%</div>
<div class="b" style="left:979.6px;top:581.0px;width:101.0px;height:134.5px;background:linear-gradient(#afac3c 0,#afac3c 50%,#c0bf4a 50%,#c0bf4a 100%);border:1px solid #e8e8e8"></div>
<div class="t" style="left:1018.6px;top:721.0px;font-size:12.50px;transform:scaleX(0.919);color:#f4f4f4;">80%</div>
<div class="b" style="left:1097.0px;top:581.0px;width:101.0px;height:134.5px;background:linear-gradient(#b3b100 0,#b3b100 50%,#c4c21e 50%,#c4c21e 100%);border:1px solid #e8e8e8"></div>
<div class="t" style="left:1132.0px;top:721.0px;font-size:12.50px;transform:scaleX(0.970);color:#f4f4f4;">100%</div>
<div class="t" style="left:609.4px;top:628.9px;font-size:13.08px;color:#f0f0f0;transform:rotate(-90deg) scaleX(0.976)">Actual</div>
<div class="t" style="left:609.4px;top:705.1px;font-size:13.08px;color:#f0f0f0;transform:rotate(-90deg) scaleX(0.999)">Target</div>
<div class="b" style="left:1215.0px;top:187.0px;width:702.0px;height:566.0px;background:#1c1c1c"></div>
<div class="b" style="left:1221.0px;top:194.0px;width:692.0px;height:552.0px;background:#333"></div>
<div class="b" style="left:1259.5px;top:218.5px;width:649.6px;height:499.4px;background:#232323"></div>
<svg width="1920" height="1146" style="left:0;top:0"><defs><clipPath id="cl"><path d="M1537.0 704.3 L1533.4 702.0 L1525.6 696.0 L1518.0 690.0 L1510.6 684.0 L1503.4 678.0 L1496.4 672.0 L1489.7 666.0 L1483.1 660.0 L1476.7 654.0 L1470.5 648.0 L1464.4 642.0 L1458.5 636.0 L1452.8 630.0 L1447.2 624.0 L1441.7 618.0 L1436.4 612.0 L1431.2 606.0 L1426.1 600.0 L1421.2 594.0 L1416.4 588.0 L1411.6 582.0 L1407.0 576.0 L1402.5 570.0 L1398.0 564.0 L1393.7 558.0 L1389.4 552.0 L1385.3 546.0 L1381.2 540.0 L1377.1 534.0 L1373.2 528.0 L1369.3 522.0 L1365.5 516.0 L1361.7 510.0 L1358.0 504.0 L1354.4 498.0 L1350.8 492.0 L1347.3 486.0 L1343.8 480.0 L1340.4 474.0 L1337.1 468.0 L1333.7 462.0 L1330.5 456.0 L1327.3 450.0 L1324.1 444.0 L1321.0 438.0 L1317.9 432.0 L1314.9 426.0 L1311.9 420.0 L1309.0 414.0 L1306.1 408.0 L1303.3 402.0 L1300.6 396.0 L1297.9 390.0 L1295.2 384.0 L1292.6 378.0 L1290.1 372.0 L1287.7 366.0 L1285.3 360.0 L1283.0 354.0 L1280.7 348.0 L1278.6 342.0 L1276.5 336.0 L1274.5 330.0 L1272.5 324.0 L1270.8 316.7 L1269.4 312.0 L1268.2 307.4 L1267.0 303.0 L1266.0 298.8 L1265.1 294.8 L1264.3 290.9 L1263.5 287.2 L1262.9 283.7 L1262.3 280.3 L1261.8 277.2 L1261.5 274.2 L1261.2 271.3 L1261.1 268.5 L1261.1 265.8 L1261.1 263.3 L1261.3 260.8 L1261.7 258.5 L1262.1 256.3 L1262.6 254.3 L1263.2 252.3 L1263.8 250.4 L1264.5 248.6 L1265.3 246.9 L1266.2 245.3 L1267.1 243.8 L1268.1 242.4 L1269.2 241.1 L1270.4 239.9 L1271.6 238.8 L1272.8 237.7 L1274.1 236.7 L1275.4 235.8 L1276.8 235.1 L1278.3 234.3 L1279.8 233.7 L1281.4 233.1 L1282.9 232.6 L1284.5 232.1 L1286.2 231.7 L1287.8 231.3 L1289.5 231.0 L1291.3 230.8 L1293.1 230.6 L1294.9 230.4 L1296.7 230.2 L1298.5 230.1 L1300.3 229.9 L1302.2 229.8 L1304.1 229.7 L1306.0 229.7 L1307.9 229.6 L1309.8 229.6 L1311.8 229.6 L1313.7 229.5 L1315.6 229.5 L1317.5 229.5 L1319.4 229.5 L1321.4 229.6 L1323.3 229.6 L1325.2 229.6 L1327.2 229.7 L1329.2 229.7 L1331.1 229.8 L1333.1 229.9 L1335.1 230.0 L1337.1 230.0 L1339.1 230.1 L1341.1 230.3 L1343.2 230.4 L1345.3 230.5 L1347.4 230.6 L1349.5 230.8 L1351.6 230.9 L1353.8 231.1 L1356.0 231.2 L1358.2 231.4 L1360.4 231.6 L1362.6 231.7 L1364.9 231.9 L1367.2 232.1 L1369.5 232.3 L1371.9 232.5 L1374.2 232.8 L1376.6 233.0 L1379.1 233.2 L1381.5 233.4 L1384.0 233.7 L1386.5 233.9 L1389.1 234.2 L1391.6 234.4 L1394.2 234.7 L1396.9 235.0 L1399.5 235.3 L1402.3 235.5 L1405.0 235.8 L1407.8 236.1 L1410.6 236.4 L1413.5 236.7 L1416.4 237.0 L1419.3 237.4 L1422.3 237.7 L1425.3 238.0 L1428.3 238.3 L1431.4 238.7 L1434.5 239.0 L1437.7 239.4 L1440.8 239.7 L1444.1 240.1 L1447.4 240.5 L1450.7 240.8 L1454.1 241.2 L1457.5 241.6 L1460.9 242.0 L1464.4 242.4 L1468.0 242.8 L1471.6 243.2 L1475.2 243.6 L1478.9 244.0 L1482.6 244.4 L1486.3 244.9 L1490.1 245.3 L1494.0 245.7 L1497.9 246.2 L1501.8 246.6 L1505.8 247.1 L1509.8 247.6 L1513.9 248.0 L1518.0 248.5 L1522.1 249.0 L1526.3 249.5 L1530.6 250.0 L1534.8 250.4 L1539.2 250.9 L1543.5 251.4 L1547.9 252.0 L1552.4 252.5 L1556.9 253.0 L1561.4 253.5 L1566.0 254.0 L1570.6 254.6 L1575.3 255.1 L1579.9 255.6 L1584.6 256.2 L1589.4 256.7 L1594.2 257.3 L1599.0 257.8 L1603.8 258.4 L1608.7 258.9 L1613.6 259.5 L1618.4 260.0 L1623.3 260.6 L1628.3 261.2 L1633.3 261.7 L1638.2 262.3 L1643.2 262.9 L1648.2 263.5 L1653.1 264.0 L1658.0 264.6 L1662.6 265.1 L1666.9 265.6 L1671.0 266.1 L1675.2 266.6 L1679.6 267.1 L1684.5 267.7 L1690.0 268.3 L1696.3 269.0 L1703.8 269.9 L1712.2 270.8 L1721.3 271.9 L1730.8 273.0 L1740.5 274.1 L1750.0 275.1 L1759.1 276.2 L1767.5 277.1 L1775.3 278.0 L1782.8 278.9 L1790.1 279.8 L1797.1 280.6 L1803.9 281.3 L1810.5 282.1 L1816.7 282.8 L1822.8 283.5 L1828.5 284.2 L1834.0 284.8 L1839.1 285.4 L1844.1 286.0 L1848.8 286.5 L1853.3 287.0 L1857.7 287.5 L1862.0 288.0 L1866.2 288.5 L1870.2 289.0 L1874.0 289.4 L1877.7 289.8 L1881.2 290.2 L1884.5 290.6 L1887.7 291.0 L1890.8 291.3 L1893.5 291.7 L1896.0 291.9 L1898.3 292.2 L1900.5 292.4 L1902.6 292.7 L1904.7 292.9 L1907.1 293.2 L1909.7 293.5 L1912.6 293.8 L1916.0 294.2 L1919.6 294.6 L1923.2 295.1 L1926.7 295.5 L1929.9 295.8 L1932.5 296.1 L1934.4 296.3Z"/></clipPath><clipPath id="ct"><path d="M1747.5 282.7 L1394.8 249.7 L1449.4 586.5Z"/></clipPath><clipPath id="cf"><rect x="1259.5" y="218.5" width="649.6" height="499.4"/></clipPath><linearGradient id="o0" gradientUnits="userSpaceOnUse" x1="1259.5" x2="1909.1" y1="0" y2="0"><stop offset="0.000" stop-color="#009900"/><stop offset="0.222" stop-color="#049900"/><stop offset="0.277" stop-color="#329900"/><stop offset="0.333" stop-color="#839900"/><stop offset="0.345" stop-color="#999800"/><stop offset="0.382" stop-color="#996200"/><stop offset="0.443" stop-color="#993400"/><stop offset="0.560" stop-color="#991100"/><stop offset="0.800" stop-color="#990000"/><stop offset="0.998" stop-color="#990000"/></linearGradient><linearGradient id="o1" gradientUnits="userSpaceOnUse" x1="1259.5" x2="1909.1" y1="0" y2="0"><stop offset="0.000" stop-color="#009900"/><stop offset="0.222" stop-color="#049900"/><stop offset="0.277" stop-color="#339900"/><stop offset="0.333" stop-color="#849900"/><stop offset="0.345" stop-color="#999600"/><stop offset="0.388" stop-color="#995b00"/><stop offset="0.456" stop-color="#992e00"/><stop offset="0.591" stop-color="#990c00"/><stop offset="0.856" stop-color="#990000"/><stop offset="0.998" stop-color="#990000"/></linearGradient><linearGradient id="o2" gradientUnits="userSpaceOnUse" x1="1259.5" x2="1909.1" y1="0" y2="0"><stop offset="0.000" stop-color="#009900"/><stop offset="0.222" stop-color="#059900"/><stop offset="0.277" stop-color="#349900"/><stop offset="0.333" stop-color="#859900"/><stop offset="0.345" stop-color="#999500"/><stop offset="0.388" stop-color="#995a00"/><stop offset="0.456" stop-color="#992e00"/><stop offset="0.591" stop-color="#990c00"/><stop offset="0.856" stop-color="#990000"/><stop offset="0.998" stop-color="#990000"/></linearGradient><linearGradient id="o3" gradientUnits="userSpaceOnUse" x1="1259.5" x2="1909.1" y1="0" y2="0"><stop offset="0.000" stop-color="#009900"/><stop offset="0.222" stop-color="#059900"/><stop offset="0.277" stop-color="#359900"/><stop offset="0.333" stop-color="#879900"/><stop offset="0.345" stop-color="#999400"/><stop offset="0.388" stop-color="#995900"/><stop offset="0.462" stop-color="#992b00"/><stop offset="0.603" stop-color="#990a00"/><stop offset="0.887" stop-color="#990000"/><stop offset="0.998" stop-color="#990000"/></linearGradient><linearGradient id="o4" gradientUnits="userSpaceOnUse" x1="1259.5" x2="1909.1" y1="0" y2="0"><stop offset="0.000" stop-color="#009900"/><stop offset="0.222" stop-color="#059900"/><stop offset="0.277" stop-color="#369900"/><stop offset="0.333" stop-color="#889900"/><stop offset="0.345" stop-color="#999200"/><stop offset="0.388" stop-color="#995900"/><stop offset="0.462" stop-color="#992a00"/><stop offset="0.603" stop-color="#990a00"/><stop offset="0.893" stop-color="#990000"/><stop offset="0.998" stop-color="#990000"/></linearGradient><linearGradient id="o5" gradientUnits="userSpaceOnUse" x1="1259.5" x2="1909.1" y1="0" y2="0"><stop offset="0.000" stop-color="#009900"/><stop offset="0.216" stop-color="#039900"/><stop offset="0.271" stop-color="#2f9900"/><stop offset="0.326" stop-color="#7e9900"/><stop offset="0.339" stop-color="#959900"/><stop offset="0.388" stop-color="#995800"/><stop offset="0.462" stop-color="#992a00"/><stop offset="0.603" stop-color="#990a00"/><stop offset="0.893" stop-color="#990000"/><stop offset="0.998" stop-color="#990000"/></linearGradient><linearGradient id="o6" gradientUnits="userSpaceOnUse" x1="1259.5" x2="1909.1" y1="0" y2="0"><stop offset="0.000" stop-color="#009900"/><stop offset="0.216" stop-color="#009905"/><stop offset="0.283" stop-color="#3f9900"/><stop offset="0.339" stop-color="#969900"/><stop offset="0.382" stop-color="#995d00"/><stop offset="0.450" stop-color="#992f00"/><stop offset="0.579" stop-color="#990d00"/><stop offset="0.837" stop-color="#990000"/><stop offset="0.998" stop-color="#990000"/></linearGradient><linearGradient id="o7" gradientUnits="userSpaceOnUse" x1="1259.5" x2="1909.1" y1="0" y2="0"><stop offset="0.000" stop-color="#009900"/><stop offset="0.228" stop-color="#00990a"/><stop offset="0.234" stop-color="#0f9900"/><stop offset="0.289" stop-color="#489900"/><stop offset="0.339" stop-color="#989900"/><stop offset="0.382" stop-color="#995d00"/><stop offset="0.450" stop-color="#992f00"/><stop offset="0.579" stop-color="#990d00"/><stop offset="0.837" stop-color="#990000"/><stop offset="0.998" stop-color="#990000"/></linearGradient><linearGradient id="o8" gradientUnits="userSpaceOnUse" x1="1259.5" x2="1909.1" y1="0" y2="0"><stop offset="0.000" stop-color="#009900"/><stop offset="0.234" stop-color="#009910"/><stop offset="0.240" stop-color="#149900"/><stop offset="0.296" stop-color="#519900"/><stop offset="0.339" stop-color="#999900"/><stop offset="0.376" stop-color="#996200"/><stop offset="0.437" stop-color="#993400"/><stop offset="0.554" stop-color="#991100"/><stop offset="0.794" stop-color="#990000"/><stop offset="0.998" stop-color="#990000"/></linearGradient><linearGradient id="o9" gradientUnits="userSpaceOnUse" x1="1259.5" x2="1909.1" y1="0" y2="0"><stop offset="0.000" stop-color="#009900"/><stop offset="0.240" stop-color="#009916"/><stop offset="0.246" stop-color="#1a9900"/><stop offset="0.302" stop-color="#5b9900"/><stop offset="0.339" stop-color="#999700"/><stop offset="0.376" stop-color="#996200"/><stop offset="0.437" stop-color="#993400"/><stop offset="0.554" stop-color="#991100"/><stop offset="0.794" stop-color="#990000"/><stop offset="0.998" stop-color="#990000"/></linearGradient><linearGradient id="o10" gradientUnits="userSpaceOnUse" x1="1259.5" x2="1909.1" y1="0" y2="0"><stop offset="0.000" stop-color="#009903"/><stop offset="0.252" stop-color="#00991e"/><stop offset="0.259" stop-color="#269900"/><stop offset="0.314" stop-color="#6f9900"/><stop offset="0.339" stop-color="#999600"/><stop offset="0.382" stop-color="#995a00"/><stop offset="0.450" stop-color="#992e00"/><stop offset="0.585" stop-color="#990c00"/><stop offset="0.850" stop-color="#990000"/><stop offset="0.998" stop-color="#990000"/></linearGradient><linearGradient id="o11" gradientUnits="userSpaceOnUse" x1="1259.5" x2="1909.1" y1="0" y2="0"><stop offset="0.000" stop-color="#009907"/><stop offset="0.259" stop-color="#009926"/><stop offset="0.265" stop-color="#2d9900"/><stop offset="0.320" stop-color="#7b9900"/><stop offset="0.339" stop-color="#999500"/><stop offset="0.382" stop-color="#995a00"/><stop offset="0.450" stop-color="#992d00"/><stop offset="0.585" stop-color="#990c00"/><stop offset="0.850" stop-color="#990000"/><stop offset="0.998" stop-color="#990000"/></linearGradient><linearGradient id="o12" gradientUnits="userSpaceOnUse" x1="1259.5" x2="1909.1" y1="0" y2="0"><stop offset="0.000" stop-color="#00990b"/><stop offset="0.265" stop-color="#00992f"/><stop offset="0.271" stop-color="#359900"/><stop offset="0.326" stop-color="#879900"/><stop offset="0.339" stop-color="#999300"/><stop offset="0.382" stop-color="#995900"/><stop offset="0.456" stop-color="#992a00"/><stop offset="0.597" stop-color="#990a00"/><stop offset="0.862" stop-color="#990000"/><stop offset="0.998" stop-color="#990000"/></linearGradient><linearGradient id="o13" gradientUnits="userSpaceOnUse" x1="1259.5" x2="1909.1" y1="0" y2="0"><stop offset="0.000" stop-color="#009910"/><stop offset="0.277" stop-color="#009939"/><stop offset="0.283" stop-color="#459900"/><stop offset="0.333" stop-color="#949900"/><stop offset="0.382" stop-color="#995800"/><stop offset="0.456" stop-color="#992a00"/><stop offset="0.597" stop-color="#990a00"/><stop offset="0.825" stop-color="#990000"/><stop offset="0.998" stop-color="#990000"/></linearGradient><linearGradient id="o14" gradientUnits="userSpaceOnUse" x1="1259.5" x2="1909.1" y1="0" y2="0"><stop offset="0.000" stop-color="#009916"/><stop offset="0.283" stop-color="#009944"/><stop offset="0.289" stop-color="#4e9900"/><stop offset="0.333" stop-color="#969900"/><stop offset="0.382" stop-color="#995800"/><stop offset="0.456" stop-color="#992a00"/><stop offset="0.597" stop-color="#990a00"/><stop offset="0.683" stop-color="#990300"/><stop offset="0.702" stop-color="#990005"/><stop offset="0.998" stop-color="#990000"/></linearGradient><linearGradient id="o15" gradientUnits="userSpaceOnUse" x1="1259.5" x2="1909.1" y1="0" y2="0"><stop offset="0.000" stop-color="#00991c"/><stop offset="0.289" stop-color="#00994f"/><stop offset="0.296" stop-color="#589900"/><stop offset="0.333" stop-color="#979900"/><stop offset="0.376" stop-color="#995d00"/><stop offset="0.443" stop-color="#992f00"/><stop offset="0.573" stop-color="#990d00"/><stop offset="0.665" stop-color="#990400"/><stop offset="0.671" stop-color="#99000a"/><stop offset="0.893" stop-color="#990000"/><stop offset="0.998" stop-color="#990000"/></linearGradient><linearGradient id="o16" gradientUnits="userSpaceOnUse" x1="1259.5" x2="1909.1" y1="0" y2="0"><stop offset="0.000" stop-color="#009923"/><stop offset="0.302" stop-color="#00995c"/><stop offset="0.308" stop-color="#6c9900"/><stop offset="0.333" stop-color="#999900"/><stop offset="0.376" stop-color="#995c00"/><stop offset="0.443" stop-color="#992f00"/><stop offset="0.573" stop-color="#990d00"/><stop offset="0.647" stop-color="#990500"/><stop offset="0.653" stop-color="#99000d"/><stop offset="0.862" stop-color="#990000"/><stop offset="0.998" stop-color="#990000"/></linearGradient><linearGradient id="o17" gradientUnits="userSpaceOnUse" x1="1259.5" x2="1909.1" y1="0" y2="0"><stop offset="0.000" stop-color="#00992a"/><stop offset="0.308" stop-color="#009969"/><stop offset="0.314" stop-color="#789900"/><stop offset="0.333" stop-color="#999800"/><stop offset="0.369" stop-color="#996200"/><stop offset="0.431" stop-color="#993400"/><stop offset="0.548" stop-color="#991100"/><stop offset="0.622" stop-color="#990700"/><stop offset="0.628" stop-color="#990013"/><stop offset="0.837" stop-color="#990000"/><stop offset="0.998" stop-color="#990000"/></linearGradient><linearGradient id="o18" gradientUnits="userSpaceOnUse" x1="1259.5" x2="1909.1" y1="0" y2="0"><stop offset="0.000" stop-color="#009932"/><stop offset="0.314" stop-color="#009977"/><stop offset="0.320" stop-color="#849900"/><stop offset="0.333" stop-color="#999700"/><stop offset="0.369" stop-color="#996100"/><stop offset="0.437" stop-color="#993100"/><stop offset="0.567" stop-color="#990e00"/><stop offset="0.603" stop-color="#990900"/><stop offset="0.610" stop-color="#990017"/><stop offset="0.825" stop-color="#990000"/><stop offset="0.998" stop-color="#990000"/></linearGradient><linearGradient id="o19" gradientUnits="userSpaceOnUse" x1="1259.5" x2="1909.1" y1="0" y2="0"><stop offset="0.000" stop-color="#00993b"/><stop offset="0.326" stop-color="#009987"/><stop offset="0.333" stop-color="#999500"/><stop offset="0.376" stop-color="#995a00"/><stop offset="0.443" stop-color="#992e00"/><stop offset="0.579" stop-color="#990c00"/><stop offset="0.585" stop-color="#99001e"/><stop offset="0.813" stop-color="#990000"/><stop offset="0.998" stop-color="#990000"/></linearGradient><linearGradient id="o20" gradientUnits="userSpaceOnUse" x1="1259.5" x2="1909.1" y1="0" y2="0"><stop offset="0.000" stop-color="#009944"/><stop offset="0.333" stop-color="#009997"/><stop offset="0.339" stop-color="#998900"/><stop offset="0.382" stop-color="#995400"/><stop offset="0.456" stop-color="#992800"/><stop offset="0.560" stop-color="#990e00"/><stop offset="0.567" stop-color="#990025"/><stop offset="0.788" stop-color="#990002"/><stop offset="0.998" stop-color="#990000"/></linearGradient><linearGradient id="o21" gradientUnits="userSpaceOnUse" x1="1259.5" x2="1909.1" y1="0" y2="0"><stop offset="0.000" stop-color="#00994e"/><stop offset="0.308" stop-color="#009499"/><stop offset="0.339" stop-color="#008b99"/><stop offset="0.345" stop-color="#997e00"/><stop offset="0.394" stop-color="#994900"/><stop offset="0.480" stop-color="#992000"/><stop offset="0.536" stop-color="#991200"/><stop offset="0.542" stop-color="#99002e"/><stop offset="0.751" stop-color="#990006"/><stop offset="0.998" stop-color="#990000"/></linearGradient><linearGradient id="o22" gradientUnits="userSpaceOnUse" x1="1259.5" x2="1909.1" y1="0" y2="0"><stop offset="0.000" stop-color="#009958"/><stop offset="0.259" stop-color="#009499"/><stop offset="0.351" stop-color="#007c99"/><stop offset="0.357" stop-color="#996c00"/><stop offset="0.413" stop-color="#993c00"/><stop offset="0.517" stop-color="#991600"/><stop offset="0.523" stop-color="#990036"/><stop offset="0.720" stop-color="#99000a"/><stop offset="0.936" stop-color="#990000"/><stop offset="0.998" stop-color="#990000"/></linearGradient><linearGradient id="o23" gradientUnits="userSpaceOnUse" x1="1259.5" x2="1909.1" y1="0" y2="0"><stop offset="0.000" stop-color="#009963"/><stop offset="0.209" stop-color="#009599"/><stop offset="0.357" stop-color="#007099"/><stop offset="0.363" stop-color="#996400"/><stop offset="0.425" stop-color="#993500"/><stop offset="0.499" stop-color="#991a00"/><stop offset="0.505" stop-color="#99003f"/><stop offset="0.690" stop-color="#990010"/><stop offset="0.899" stop-color="#990000"/><stop offset="0.998" stop-color="#990000"/></linearGradient><linearGradient id="o24" gradientUnits="userSpaceOnUse" x1="1259.5" x2="1909.1" y1="0" y2="0"><stop offset="0.000" stop-color="#00996f"/><stop offset="0.166" stop-color="#009399"/><stop offset="0.363" stop-color="#006699"/><stop offset="0.369" stop-color="#995d00"/><stop offset="0.437" stop-color="#992f00"/><stop offset="0.474" stop-color="#992100"/><stop offset="0.480" stop-color="#99004d"/><stop offset="0.647" stop-color="#990019"/><stop offset="0.868" stop-color="#990000"/><stop offset="0.998" stop-color="#990000"/></linearGradient><linearGradient id="o25" gradientUnits="userSpaceOnUse" x1="1259.5" x2="1909.1" y1="0" y2="0"><stop offset="0.000" stop-color="#00997c"/><stop offset="0.117" stop-color="#009499"/><stop offset="0.376" stop-color="#005b99"/><stop offset="0.382" stop-color="#995100"/><stop offset="0.456" stop-color="#992700"/><stop offset="0.462" stop-color="#990059"/><stop offset="0.616" stop-color="#990022"/><stop offset="0.837" stop-color="#990001"/><stop offset="0.998" stop-color="#990000"/></linearGradient><linearGradient id="o26" gradientUnits="userSpaceOnUse" x1="1259.5" x2="1909.1" y1="0" y2="0"><stop offset="0.000" stop-color="#009989"/><stop offset="0.074" stop-color="#009399"/><stop offset="0.351" stop-color="#005899"/><stop offset="0.382" stop-color="#005399"/><stop offset="0.388" stop-color="#994b00"/><stop offset="0.431" stop-color="#993100"/><stop offset="0.437" stop-color="#99006b"/><stop offset="0.573" stop-color="#990030"/><stop offset="0.776" stop-color="#990007"/><stop offset="0.998" stop-color="#990000"/></linearGradient><linearGradient id="o27" gradientUnits="userSpaceOnUse" x1="1259.5" x2="1909.1" y1="0" y2="0"><stop offset="0.000" stop-color="#009997"/><stop offset="0.296" stop-color="#005999"/><stop offset="0.388" stop-color="#004c99"/><stop offset="0.394" stop-color="#994600"/><stop offset="0.413" stop-color="#993a00"/><stop offset="0.419" stop-color="#99007c"/><stop offset="0.542" stop-color="#99003d"/><stop offset="0.727" stop-color="#99000f"/><stop offset="0.936" stop-color="#990000"/><stop offset="0.998" stop-color="#990000"/></linearGradient><linearGradient id="o28" gradientUnits="userSpaceOnUse" x1="1259.5" x2="1909.1" y1="0" y2="0"><stop offset="0.000" stop-color="#008d99"/><stop offset="0.289" stop-color="#005399"/><stop offset="0.394" stop-color="#004699"/><stop offset="0.400" stop-color="#990090"/><stop offset="0.511" stop-color="#99004d"/><stop offset="0.677" stop-color="#99001a"/><stop offset="0.899" stop-color="#990000"/><stop offset="0.998" stop-color="#990000"/></linearGradient><linearGradient id="o29" gradientUnits="userSpaceOnUse" x1="1259.5" x2="1909.1" y1="0" y2="0"><stop offset="0.000" stop-color="#008099"/><stop offset="0.320" stop-color="#004999"/><stop offset="0.394" stop-color="#004099"/><stop offset="0.400" stop-color="#990096"/><stop offset="0.505" stop-color="#990054"/><stop offset="0.665" stop-color="#99001e"/><stop offset="0.893" stop-color="#990000"/><stop offset="0.998" stop-color="#990000"/></linearGradient><linearGradient id="o30" gradientUnits="userSpaceOnUse" x1="1259.5" x2="1909.1" y1="0" y2="0"><stop offset="0.000" stop-color="#007599"/><stop offset="0.351" stop-color="#004099"/><stop offset="0.394" stop-color="#003c99"/><stop offset="0.400" stop-color="#950099"/><stop offset="0.530" stop-color="#99004c"/><stop offset="0.696" stop-color="#990019"/><stop offset="0.917" stop-color="#990000"/><stop offset="0.998" stop-color="#990000"/></linearGradient><linearGradient id="o31" gradientUnits="userSpaceOnUse" x1="1259.5" x2="1909.1" y1="0" y2="0"><stop offset="0.000" stop-color="#006b99"/><stop offset="0.382" stop-color="#003899"/><stop offset="0.388" stop-color="#003899"/><stop offset="0.394" stop-color="#8a0099"/><stop offset="0.419" stop-color="#990094"/><stop offset="0.523" stop-color="#990052"/><stop offset="0.683" stop-color="#99001d"/><stop offset="0.905" stop-color="#990000"/><stop offset="0.998" stop-color="#990000"/></linearGradient><linearGradient id="o32" gradientUnits="userSpaceOnUse" x1="1259.5" x2="1909.1" y1="0" y2="0"><stop offset="0.000" stop-color="#006399"/><stop offset="0.388" stop-color="#003499"/><stop offset="0.394" stop-color="#840099"/><stop offset="0.425" stop-color="#990095"/><stop offset="0.530" stop-color="#990053"/><stop offset="0.690" stop-color="#99001e"/><stop offset="0.911" stop-color="#990000"/><stop offset="0.998" stop-color="#990000"/></linearGradient><linearGradient id="o33" gradientUnits="userSpaceOnUse" x1="1259.5" x2="1909.1" y1="0" y2="0"><stop offset="0.000" stop-color="#005b99"/><stop offset="0.382" stop-color="#003099"/><stop offset="0.388" stop-color="#7a0099"/><stop offset="0.431" stop-color="#990097"/><stop offset="0.536" stop-color="#990054"/><stop offset="0.696" stop-color="#99001e"/><stop offset="0.924" stop-color="#990000"/><stop offset="0.998" stop-color="#990000"/></linearGradient><linearGradient id="o34" gradientUnits="userSpaceOnUse" x1="1259.5" x2="1909.1" y1="0" y2="0"><stop offset="0.000" stop-color="#005499"/><stop offset="0.382" stop-color="#002d99"/><stop offset="0.388" stop-color="#750099"/><stop offset="0.443" stop-color="#990093"/><stop offset="0.554" stop-color="#99004f"/><stop offset="0.714" stop-color="#99001c"/><stop offset="0.936" stop-color="#990000"/><stop offset="0.998" stop-color="#990000"/></linearGradient><linearGradient id="o35" gradientUnits="userSpaceOnUse" x1="1259.5" x2="1909.1" y1="0" y2="0"><stop offset="0.000" stop-color="#004d99"/><stop offset="0.382" stop-color="#002a99"/><stop offset="0.388" stop-color="#6f0099"/><stop offset="0.450" stop-color="#990094"/><stop offset="0.554" stop-color="#990053"/><stop offset="0.714" stop-color="#99001d"/><stop offset="0.936" stop-color="#990000"/><stop offset="0.998" stop-color="#990000"/></linearGradient><linearGradient id="o36" gradientUnits="userSpaceOnUse" x1="1259.5" x2="1909.1" y1="0" y2="0"><stop offset="0.000" stop-color="#004799"/><stop offset="0.376" stop-color="#002799"/><stop offset="0.382" stop-color="#670099"/><stop offset="0.456" stop-color="#990096"/><stop offset="0.560" stop-color="#990053"/><stop offset="0.720" stop-color="#99001e"/><stop offset="0.942" stop-color="#990000"/><stop offset="0.998" stop-color="#990000"/></linearGradient><linearGradient id="o37" gradientUnits="userSpaceOnUse" x1="1259.5" x2="1909.1" y1="0" y2="0"><stop offset="0.000" stop-color="#004299"/><stop offset="0.376" stop-color="#002499"/><stop offset="0.382" stop-color="#620099"/><stop offset="0.462" stop-color="#990097"/><stop offset="0.567" stop-color="#990054"/><stop offset="0.720" stop-color="#990020"/><stop offset="0.948" stop-color="#990000"/><stop offset="0.998" stop-color="#990000"/></linearGradient><linearGradient id="o38" gradientUnits="userSpaceOnUse" x1="1259.5" x2="1909.1" y1="0" y2="0"><stop offset="0.000" stop-color="#003d99"/><stop offset="0.369" stop-color="#002299"/><stop offset="0.376" stop-color="#5a0099"/><stop offset="0.474" stop-color="#990094"/><stop offset="0.585" stop-color="#99004f"/><stop offset="0.745" stop-color="#99001c"/><stop offset="0.967" stop-color="#990000"/><stop offset="0.998" stop-color="#990000"/></linearGradient><linearGradient id="o39" gradientUnits="userSpaceOnUse" x1="1259.5" x2="1909.1" y1="0" y2="0"><stop offset="0.000" stop-color="#003899"/><stop offset="0.369" stop-color="#001f99"/><stop offset="0.376" stop-color="#560099"/><stop offset="0.480" stop-color="#990095"/><stop offset="0.585" stop-color="#990053"/><stop offset="0.745" stop-color="#99001e"/><stop offset="0.967" stop-color="#990000"/><stop offset="0.998" stop-color="#990000"/></linearGradient><linearGradient id="o40" gradientUnits="userSpaceOnUse" x1="1259.5" x2="1909.1" y1="0" y2="0"><stop offset="0.000" stop-color="#003499"/><stop offset="0.369" stop-color="#001d99"/><stop offset="0.376" stop-color="#520099"/><stop offset="0.486" stop-color="#990096"/><stop offset="0.591" stop-color="#990054"/><stop offset="0.751" stop-color="#99001e"/><stop offset="0.979" stop-color="#990000"/><stop offset="0.998" stop-color="#990000"/></linearGradient><linearGradient id="o41" gradientUnits="userSpaceOnUse" x1="1259.5" x2="1909.1" y1="0" y2="0"><stop offset="0.000" stop-color="#003099"/><stop offset="0.363" stop-color="#001b99"/><stop offset="0.369" stop-color="#4b0099"/><stop offset="0.480" stop-color="#900099"/><stop offset="0.505" stop-color="#99008e"/><stop offset="0.616" stop-color="#99004c"/><stop offset="0.782" stop-color="#990019"/><stop offset="0.998" stop-color="#990000"/></linearGradient><linearGradient id="o42" gradientUnits="userSpaceOnUse" x1="1259.5" x2="1909.1" y1="0" y2="0"><stop offset="0.000" stop-color="#002d99"/><stop offset="0.363" stop-color="#001999"/><stop offset="0.369" stop-color="#480099"/><stop offset="0.480" stop-color="#8a0099"/><stop offset="0.505" stop-color="#990094"/><stop offset="0.610" stop-color="#990052"/><stop offset="0.770" stop-color="#99001d"/><stop offset="0.991" stop-color="#990000"/><stop offset="0.998" stop-color="#990000"/></linearGradient><linearGradient id="o43" gradientUnits="userSpaceOnUse" x1="1259.5" x2="1909.1" y1="0" y2="0"><stop offset="0.000" stop-color="#002a99"/><stop offset="0.357" stop-color="#001899"/><stop offset="0.363" stop-color="#420099"/><stop offset="0.480" stop-color="#840099"/><stop offset="0.511" stop-color="#990095"/><stop offset="0.616" stop-color="#990053"/><stop offset="0.776" stop-color="#99001e"/><stop offset="0.998" stop-color="#990000"/></linearGradient><linearGradient id="o44" gradientUnits="userSpaceOnUse" x1="1259.5" x2="1909.1" y1="0" y2="0"><stop offset="0.000" stop-color="#002799"/><stop offset="0.357" stop-color="#001699"/><stop offset="0.363" stop-color="#3f0099"/><stop offset="0.480" stop-color="#7e0099"/><stop offset="0.517" stop-color="#990097"/><stop offset="0.622" stop-color="#990054"/><stop offset="0.782" stop-color="#99001e"/><stop offset="0.998" stop-color="#990000"/></linearGradient><linearGradient id="o45" gradientUnits="userSpaceOnUse" x1="1259.5" x2="1909.1" y1="0" y2="0"><stop offset="0.000" stop-color="#002499"/><stop offset="0.357" stop-color="#001499"/><stop offset="0.363" stop-color="#3b0099"/><stop offset="0.486" stop-color="#7d0099"/><stop offset="0.530" stop-color="#990093"/><stop offset="0.640" stop-color="#99004f"/><stop offset="0.800" stop-color="#99001c"/><stop offset="0.998" stop-color="#990001"/></linearGradient><linearGradient id="o46" gradientUnits="userSpaceOnUse" x1="1259.5" x2="1909.1" y1="0" y2="0"><stop offset="0.000" stop-color="#002199"/><stop offset="0.351" stop-color="#001399"/><stop offset="0.357" stop-color="#360099"/><stop offset="0.486" stop-color="#770099"/><stop offset="0.536" stop-color="#990095"/><stop offset="0.640" stop-color="#990053"/><stop offset="0.800" stop-color="#99001d"/><stop offset="0.998" stop-color="#990001"/></linearGradient><linearGradient id="o47" gradientUnits="userSpaceOnUse" x1="1259.5" x2="1909.1" y1="0" y2="0"><stop offset="0.000" stop-color="#001f99"/><stop offset="0.351" stop-color="#001199"/><stop offset="0.357" stop-color="#330099"/><stop offset="0.486" stop-color="#720099"/><stop offset="0.542" stop-color="#990096"/><stop offset="0.647" stop-color="#990053"/><stop offset="0.807" stop-color="#99001e"/><stop offset="0.998" stop-color="#990002"/></linearGradient><linearGradient id="o48" gradientUnits="userSpaceOnUse" x1="1259.5" x2="1909.1" y1="0" y2="0"><stop offset="0.000" stop-color="#001d99"/><stop offset="0.345" stop-color="#001099"/><stop offset="0.351" stop-color="#2e0099"/><stop offset="0.486" stop-color="#6d0099"/><stop offset="0.548" stop-color="#990097"/><stop offset="0.653" stop-color="#990054"/><stop offset="0.807" stop-color="#990020"/><stop offset="0.998" stop-color="#990003"/></linearGradient><linearGradient id="o49" gradientUnits="userSpaceOnUse" x1="1259.5" x2="1909.1" y1="0" y2="0"><stop offset="0.000" stop-color="#001a99"/><stop offset="0.345" stop-color="#000f99"/><stop offset="0.351" stop-color="#2c0099"/><stop offset="0.486" stop-color="#680099"/><stop offset="0.560" stop-color="#990094"/><stop offset="0.671" stop-color="#99004f"/><stop offset="0.831" stop-color="#99001c"/><stop offset="0.998" stop-color="#990003"/></linearGradient><linearGradient id="o50" gradientUnits="userSpaceOnUse" x1="1259.5" x2="1909.1" y1="0" y2="0"><stop offset="0.000" stop-color="#001899"/><stop offset="0.345" stop-color="#000d99"/><stop offset="0.351" stop-color="#290099"/><stop offset="0.486" stop-color="#640099"/><stop offset="0.567" stop-color="#990095"/><stop offset="0.671" stop-color="#990053"/><stop offset="0.831" stop-color="#99001e"/><stop offset="0.998" stop-color="#990004"/></linearGradient><linearGradient id="o51" gradientUnits="userSpaceOnUse" x1="1259.5" x2="1909.1" y1="0" y2="0"><stop offset="0.000" stop-color="#001799"/><stop offset="0.339" stop-color="#000c99"/><stop offset="0.345" stop-color="#250099"/><stop offset="0.486" stop-color="#5f0099"/><stop offset="0.573" stop-color="#990096"/><stop offset="0.677" stop-color="#990054"/><stop offset="0.837" stop-color="#99001e"/><stop offset="0.998" stop-color="#990005"/></linearGradient><linearGradient id="o52" gradientUnits="userSpaceOnUse" x1="1259.5" x2="1909.1" y1="0" y2="0"><stop offset="0.000" stop-color="#001599"/><stop offset="0.339" stop-color="#000b99"/><stop offset="0.345" stop-color="#230099"/><stop offset="0.486" stop-color="#5b0099"/><stop offset="0.579" stop-color="#990098"/><stop offset="0.683" stop-color="#990054"/><stop offset="0.837" stop-color="#990020"/><stop offset="0.998" stop-color="#990006"/></linearGradient><linearGradient id="o53" gradientUnits="userSpaceOnUse" x1="1259.5" x2="1909.1" y1="0" y2="0"><stop offset="0.000" stop-color="#001399"/><stop offset="0.333" stop-color="#000a99"/><stop offset="0.339" stop-color="#1f0099"/><stop offset="0.486" stop-color="#570099"/><stop offset="0.591" stop-color="#990094"/><stop offset="0.696" stop-color="#990052"/><stop offset="0.856" stop-color="#99001d"/><stop offset="0.998" stop-color="#990006"/></linearGradient><linearGradient id="o54" gradientUnits="userSpaceOnUse" x1="1259.5" x2="1909.1" y1="0" y2="0"><stop offset="0.000" stop-color="#001299"/><stop offset="0.333" stop-color="#000999"/><stop offset="0.339" stop-color="#1d0099"/><stop offset="0.493" stop-color="#560099"/><stop offset="0.597" stop-color="#990096"/><stop offset="0.702" stop-color="#990053"/><stop offset="0.862" stop-color="#99001e"/><stop offset="0.998" stop-color="#990007"/></linearGradient><linearGradient id="o55" gradientUnits="userSpaceOnUse" x1="1259.5" x2="1909.1" y1="0" y2="0"><stop offset="0.000" stop-color="#001099"/><stop offset="0.333" stop-color="#000899"/><stop offset="0.339" stop-color="#1b0099"/><stop offset="0.493" stop-color="#520099"/><stop offset="0.603" stop-color="#990097"/><stop offset="0.708" stop-color="#990054"/><stop offset="0.868" stop-color="#99001e"/><stop offset="0.998" stop-color="#990008"/></linearGradient><linearGradient id="o56" gradientUnits="userSpaceOnUse" x1="1259.5" x2="1909.1" y1="0" y2="0"><stop offset="0.000" stop-color="#000f99"/><stop offset="0.326" stop-color="#000899"/><stop offset="0.333" stop-color="#180099"/><stop offset="0.493" stop-color="#4e0099"/><stop offset="0.603" stop-color="#940099"/><stop offset="0.733" stop-color="#99004c"/><stop offset="0.899" stop-color="#990019"/><stop offset="0.998" stop-color="#990009"/></linearGradient><linearGradient id="o57" gradientUnits="userSpaceOnUse" x1="1259.5" x2="1909.1" y1="0" y2="0"><stop offset="0.000" stop-color="#000e99"/><stop offset="0.326" stop-color="#000799"/><stop offset="0.333" stop-color="#160099"/><stop offset="0.493" stop-color="#4a0099"/><stop offset="0.603" stop-color="#8e0099"/><stop offset="0.628" stop-color="#990090"/><stop offset="0.739" stop-color="#99004d"/><stop offset="0.905" stop-color="#99001a"/><stop offset="0.998" stop-color="#99000a"/></linearGradient><linearGradient id="o58" gradientUnits="userSpaceOnUse" x1="1259.5" x2="1909.1" y1="0" y2="0"><stop offset="0.000" stop-color="#000d99"/><stop offset="0.320" stop-color="#000699"/><stop offset="0.326" stop-color="#130099"/><stop offset="0.493" stop-color="#470099"/><stop offset="0.610" stop-color="#8d0099"/><stop offset="0.634" stop-color="#990091"/><stop offset="0.745" stop-color="#99004e"/><stop offset="0.911" stop-color="#99001a"/><stop offset="0.998" stop-color="#99000b"/></linearGradient><linearGradient id="o59" gradientUnits="userSpaceOnUse" x1="1259.5" x2="1909.1" y1="0" y2="0"><stop offset="0.000" stop-color="#000b99"/><stop offset="0.320" stop-color="#000599"/><stop offset="0.326" stop-color="#110099"/><stop offset="0.493" stop-color="#430099"/><stop offset="0.610" stop-color="#870099"/><stop offset="0.640" stop-color="#990092"/><stop offset="0.751" stop-color="#99004e"/><stop offset="0.917" stop-color="#99001a"/><stop offset="0.998" stop-color="#99000c"/></linearGradient><linearGradient id="o60" gradientUnits="userSpaceOnUse" x1="1259.5" x2="1909.1" y1="0" y2="0"><stop offset="0.000" stop-color="#000a99"/><stop offset="0.320" stop-color="#000599"/><stop offset="0.326" stop-color="#100099"/><stop offset="0.493" stop-color="#400099"/><stop offset="0.610" stop-color="#810099"/><stop offset="0.647" stop-color="#990094"/><stop offset="0.757" stop-color="#99004f"/><stop offset="0.917" stop-color="#99001c"/><stop offset="0.998" stop-color="#99000d"/></linearGradient><linearGradient id="o61" gradientUnits="userSpaceOnUse" x1="1259.5" x2="1909.1" y1="0" y2="0"><stop offset="0.000" stop-color="#000999"/><stop offset="0.314" stop-color="#000499"/><stop offset="0.320" stop-color="#0d0099"/><stop offset="0.493" stop-color="#3d0099"/><stop offset="0.616" stop-color="#800099"/><stop offset="0.653" stop-color="#990095"/><stop offset="0.757" stop-color="#990053"/><stop offset="0.917" stop-color="#99001e"/><stop offset="0.998" stop-color="#99000f"/></linearGradient><linearGradient id="o62" gradientUnits="userSpaceOnUse" x1="1259.5" x2="1909.1" y1="0" y2="0"><stop offset="0.000" stop-color="#000899"/><stop offset="0.314" stop-color="#000499"/><stop offset="0.320" stop-color="#0c0099"/><stop offset="0.499" stop-color="#3c0099"/><stop offset="0.622" stop-color="#7e0099"/><stop offset="0.659" stop-color="#990097"/><stop offset="0.764" stop-color="#990054"/><stop offset="0.924" stop-color="#99001e"/><stop offset="0.998" stop-color="#990010"/></linearGradient><linearGradient id="o63" gradientUnits="userSpaceOnUse" x1="1259.5" x2="1909.1" y1="0" y2="0"><stop offset="0.000" stop-color="#000899"/><stop offset="0.308" stop-color="#000399"/><stop offset="0.320" stop-color="#0b0099"/><stop offset="0.499" stop-color="#390099"/><stop offset="0.622" stop-color="#790099"/><stop offset="0.671" stop-color="#990093"/><stop offset="0.782" stop-color="#99004f"/><stop offset="0.942" stop-color="#99001c"/><stop offset="0.998" stop-color="#990011"/></linearGradient><linearGradient id="o64" gradientUnits="userSpaceOnUse" x1="1259.5" x2="1909.1" y1="0" y2="0"><stop offset="0.000" stop-color="#000799"/><stop offset="0.308" stop-color="#000399"/><stop offset="0.320" stop-color="#0a0099"/><stop offset="0.499" stop-color="#360099"/><stop offset="0.628" stop-color="#780099"/><stop offset="0.677" stop-color="#990094"/><stop offset="0.782" stop-color="#990052"/><stop offset="0.942" stop-color="#99001d"/><stop offset="0.998" stop-color="#990012"/></linearGradient><linearGradient id="o65" gradientUnits="userSpaceOnUse" x1="1259.5" x2="1909.1" y1="0" y2="0"><stop offset="0.000" stop-color="#000699"/><stop offset="0.308" stop-color="#000299"/><stop offset="0.333" stop-color="#0a0099"/><stop offset="0.511" stop-color="#380099"/><stop offset="0.634" stop-color="#770099"/><stop offset="0.683" stop-color="#990096"/><stop offset="0.788" stop-color="#990053"/><stop offset="0.948" stop-color="#99001e"/><stop offset="0.998" stop-color="#990014"/></linearGradient><linearGradient id="o66" gradientUnits="userSpaceOnUse" x1="1259.5" x2="1909.1" y1="0" y2="0"><stop offset="0.000" stop-color="#000599"/><stop offset="0.302" stop-color="#000299"/><stop offset="0.517" stop-color="#370099"/><stop offset="0.640" stop-color="#750099"/><stop offset="0.690" stop-color="#990097"/><stop offset="0.794" stop-color="#990054"/><stop offset="0.954" stop-color="#99001e"/><stop offset="0.998" stop-color="#990015"/></linearGradient><linearGradient id="o67" gradientUnits="userSpaceOnUse" x1="1259.5" x2="1909.1" y1="0" y2="0"><stop offset="0.000" stop-color="#000599"/><stop offset="0.308" stop-color="#050099"/><stop offset="0.499" stop-color="#2e0099"/><stop offset="0.634" stop-color="#6c0099"/><stop offset="0.702" stop-color="#990093"/><stop offset="0.813" stop-color="#99004f"/><stop offset="0.973" stop-color="#99001c"/><stop offset="0.998" stop-color="#990017"/></linearGradient><linearGradient id="o68" gradientUnits="userSpaceOnUse" x1="1259.5" x2="1909.1" y1="0" y2="0"><stop offset="0.000" stop-color="#000499"/><stop offset="0.320" stop-color="#050099"/><stop offset="0.511" stop-color="#2f0099"/><stop offset="0.640" stop-color="#6b0099"/><stop offset="0.708" stop-color="#990095"/><stop offset="0.813" stop-color="#990053"/><stop offset="0.973" stop-color="#99001e"/><stop offset="0.998" stop-color="#990018"/></linearGradient><linearGradient id="o69" gradientUnits="userSpaceOnUse" x1="1259.5" x2="1909.1" y1="0" y2="0"><stop offset="0.000" stop-color="#000399"/><stop offset="0.326" stop-color="#050099"/><stop offset="0.517" stop-color="#2f0099"/><stop offset="0.653" stop-color="#6e0099"/><stop offset="0.714" stop-color="#990096"/><stop offset="0.819" stop-color="#990053"/><stop offset="0.979" stop-color="#99001e"/><stop offset="0.998" stop-color="#99001a"/></linearGradient><linearGradient id="o70" gradientUnits="userSpaceOnUse" x1="1259.5" x2="1909.1" y1="0" y2="0"><stop offset="0.000" stop-color="#000399"/><stop offset="0.339" stop-color="#050099"/><stop offset="0.523" stop-color="#2e0099"/><stop offset="0.659" stop-color="#6d0099"/><stop offset="0.720" stop-color="#990098"/><stop offset="0.825" stop-color="#990054"/><stop offset="0.979" stop-color="#990020"/><stop offset="0.998" stop-color="#99001c"/></linearGradient><linearGradient id="o71" gradientUnits="userSpaceOnUse" x1="1259.5" x2="1909.1" y1="0" y2="0"><stop offset="0.000" stop-color="#000299"/><stop offset="0.345" stop-color="#050099"/><stop offset="0.536" stop-color="#300099"/><stop offset="0.665" stop-color="#6c0099"/><stop offset="0.733" stop-color="#990094"/><stop offset="0.844" stop-color="#99004f"/><stop offset="0.998" stop-color="#99001d"/></linearGradient><linearGradient id="o72" gradientUnits="userSpaceOnUse" x1="1259.5" x2="1909.1" y1="0" y2="0"><stop offset="0.000" stop-color="#000299"/><stop offset="0.357" stop-color="#060099"/><stop offset="0.542" stop-color="#2f0099"/><stop offset="0.671" stop-color="#6b0099"/><stop offset="0.739" stop-color="#990095"/><stop offset="0.844" stop-color="#990053"/><stop offset="0.998" stop-color="#99001f"/></linearGradient><linearGradient id="o73" gradientUnits="userSpaceOnUse" x1="1259.5" x2="1909.1" y1="0" y2="0"><stop offset="0.000" stop-color="#000199"/><stop offset="0.363" stop-color="#060099"/><stop offset="0.548" stop-color="#2f0099"/><stop offset="0.683" stop-color="#6e0099"/><stop offset="0.745" stop-color="#990097"/><stop offset="0.850" stop-color="#990054"/><stop offset="0.998" stop-color="#990021"/></linearGradient><linearGradient id="o74" gradientUnits="userSpaceOnUse" x1="1259.5" x2="1909.1" y1="0" y2="0"><stop offset="0.000" stop-color="#000199"/><stop offset="0.369" stop-color="#050099"/><stop offset="0.554" stop-color="#2e0099"/><stop offset="0.690" stop-color="#6d0099"/><stop offset="0.757" stop-color="#990093"/><stop offset="0.868" stop-color="#99004f"/><stop offset="0.998" stop-color="#990023"/></linearGradient><linearGradient id="o75" gradientUnits="userSpaceOnUse" x1="1259.5" x2="1909.1" y1="0" y2="0"><stop offset="0.000" stop-color="#000199"/><stop offset="0.382" stop-color="#060099"/><stop offset="0.567" stop-color="#300099"/><stop offset="0.696" stop-color="#6c0099"/><stop offset="0.764" stop-color="#990094"/><stop offset="0.868" stop-color="#990052"/><stop offset="0.998" stop-color="#990025"/></linearGradient><linearGradient id="o76" gradientUnits="userSpaceOnUse" x1="1259.5" x2="1909.1" y1="0" y2="0"><stop offset="0.000" stop-color="#000099"/><stop offset="0.388" stop-color="#060099"/><stop offset="0.573" stop-color="#2f0099"/><stop offset="0.708" stop-color="#6e0099"/><stop offset="0.770" stop-color="#990096"/><stop offset="0.874" stop-color="#990053"/><stop offset="0.998" stop-color="#990027"/></linearGradient><linearGradient id="o77" gradientUnits="userSpaceOnUse" x1="1259.5" x2="1909.1" y1="0" y2="0"><stop offset="0.000" stop-color="#000099"/><stop offset="0.394" stop-color="#060099"/><stop offset="0.579" stop-color="#2f0099"/><stop offset="0.714" stop-color="#6d0099"/><stop offset="0.776" stop-color="#990097"/><stop offset="0.881" stop-color="#990054"/><stop offset="0.998" stop-color="#990029"/></linearGradient><linearGradient id="o78" gradientUnits="userSpaceOnUse" x1="1259.5" x2="1909.1" y1="0" y2="0"><stop offset="0.000" stop-color="#000099"/><stop offset="0.400" stop-color="#050099"/><stop offset="0.585" stop-color="#2e0099"/><stop offset="0.720" stop-color="#6c0099"/><stop offset="0.788" stop-color="#990093"/><stop offset="0.899" stop-color="#99004f"/><stop offset="0.998" stop-color="#99002b"/></linearGradient><linearGradient id="o79" gradientUnits="userSpaceOnUse" x1="1259.5" x2="1909.1" y1="0" y2="0"><stop offset="0.000" stop-color="#000099"/><stop offset="0.413" stop-color="#060099"/><stop offset="0.597" stop-color="#2f0099"/><stop offset="0.727" stop-color="#6b0099"/><stop offset="0.794" stop-color="#990095"/><stop offset="0.899" stop-color="#990053"/><stop offset="0.998" stop-color="#99002d"/></linearGradient><linearGradient id="o80" gradientUnits="userSpaceOnUse" x1="1259.5" x2="1909.1" y1="0" y2="0"><stop offset="0.000" stop-color="#000099"/><stop offset="0.419" stop-color="#060099"/><stop offset="0.603" stop-color="#2f0099"/><stop offset="0.739" stop-color="#6e0099"/><stop offset="0.800" stop-color="#990096"/><stop offset="0.905" stop-color="#990054"/><stop offset="0.998" stop-color="#990030"/></linearGradient><linearGradient id="o81" gradientUnits="userSpaceOnUse" x1="1259.5" x2="1909.1" y1="0" y2="0"><stop offset="0.000" stop-color="#000099"/><stop offset="0.425" stop-color="#050099"/><stop offset="0.610" stop-color="#2e0099"/><stop offset="0.745" stop-color="#6d0099"/><stop offset="0.807" stop-color="#990098"/><stop offset="0.911" stop-color="#990054"/><stop offset="0.998" stop-color="#990032"/></linearGradient><linearGradient id="o82" gradientUnits="userSpaceOnUse" x1="1259.5" x2="1909.1" y1="0" y2="0"><stop offset="0.000" stop-color="#000099"/><stop offset="0.431" stop-color="#050099"/><stop offset="0.622" stop-color="#300099"/><stop offset="0.751" stop-color="#6c0099"/><stop offset="0.819" stop-color="#990094"/><stop offset="0.930" stop-color="#99004f"/><stop offset="0.998" stop-color="#990035"/></linearGradient><linearGradient id="o83" gradientUnits="userSpaceOnUse" x1="1259.5" x2="1909.1" y1="0" y2="0"><stop offset="0.000" stop-color="#000099"/><stop offset="0.443" stop-color="#060099"/><stop offset="0.628" stop-color="#2f0099"/><stop offset="0.757" stop-color="#6b0099"/><stop offset="0.825" stop-color="#990095"/><stop offset="0.930" stop-color="#990053"/><stop offset="0.998" stop-color="#990038"/></linearGradient><linearGradient id="o84" gradientUnits="userSpaceOnUse" x1="1259.5" x2="1909.1" y1="0" y2="0"><stop offset="0.000" stop-color="#000099"/><stop offset="0.450" stop-color="#060099"/><stop offset="0.634" stop-color="#2f0099"/><stop offset="0.770" stop-color="#6e0099"/><stop offset="0.831" stop-color="#990097"/><stop offset="0.936" stop-color="#990054"/><stop offset="0.998" stop-color="#99003a"/></linearGradient><linearGradient id="o85" gradientUnits="userSpaceOnUse" x1="1259.5" x2="1909.1" y1="0" y2="0"><stop offset="0.000" stop-color="#000099"/><stop offset="0.456" stop-color="#050099"/><stop offset="0.640" stop-color="#2e0099"/><stop offset="0.776" stop-color="#6d0099"/><stop offset="0.844" stop-color="#990093"/><stop offset="0.954" stop-color="#99004f"/><stop offset="0.998" stop-color="#99003d"/></linearGradient><linearGradient id="o86" gradientUnits="userSpaceOnUse" x1="1259.5" x2="1909.1" y1="0" y2="0"><stop offset="0.000" stop-color="#000099"/><stop offset="0.462" stop-color="#050099"/><stop offset="0.653" stop-color="#300099"/><stop offset="0.782" stop-color="#6c0099"/><stop offset="0.850" stop-color="#990094"/><stop offset="0.954" stop-color="#990052"/><stop offset="0.998" stop-color="#990040"/></linearGradient><linearGradient id="o87" gradientUnits="userSpaceOnUse" x1="1259.5" x2="1909.1" y1="0" y2="0"><stop offset="0.000" stop-color="#000099"/><stop offset="0.468" stop-color="#050099"/><stop offset="0.659" stop-color="#2f0099"/><stop offset="0.794" stop-color="#6e0099"/><stop offset="0.856" stop-color="#990096"/><stop offset="0.961" stop-color="#990053"/><stop offset="0.998" stop-color="#990043"/></linearGradient><linearGradient id="o88" gradientUnits="userSpaceOnUse" x1="1259.5" x2="1909.1" y1="0" y2="0"><stop offset="0.000" stop-color="#000099"/><stop offset="0.480" stop-color="#060099"/><stop offset="0.665" stop-color="#2e0099"/><stop offset="0.800" stop-color="#6d0099"/><stop offset="0.862" stop-color="#990097"/><stop offset="0.967" stop-color="#990054"/><stop offset="0.998" stop-color="#990046"/></linearGradient><linearGradient id="o89" gradientUnits="userSpaceOnUse" x1="1259.5" x2="1909.1" y1="0" y2="0"><stop offset="0.000" stop-color="#000099"/><stop offset="0.486" stop-color="#050099"/><stop offset="0.671" stop-color="#2e0099"/><stop offset="0.807" stop-color="#6c0099"/><stop offset="0.874" stop-color="#990093"/><stop offset="0.985" stop-color="#99004f"/><stop offset="0.998" stop-color="#99004a"/></linearGradient><linearGradient id="o90" gradientUnits="userSpaceOnUse" x1="1259.5" x2="1909.1" y1="0" y2="0"><stop offset="0.000" stop-color="#000099"/><stop offset="0.493" stop-color="#050099"/><stop offset="0.683" stop-color="#2f0099"/><stop offset="0.813" stop-color="#6b0099"/><stop offset="0.881" stop-color="#990095"/><stop offset="0.985" stop-color="#990053"/><stop offset="0.998" stop-color="#99004d"/></linearGradient><linearGradient id="o91" gradientUnits="userSpaceOnUse" x1="1259.5" x2="1909.1" y1="0" y2="0"><stop offset="0.000" stop-color="#000099"/><stop offset="0.505" stop-color="#060099"/><stop offset="0.690" stop-color="#2f0099"/><stop offset="0.825" stop-color="#6e0099"/><stop offset="0.887" stop-color="#990096"/><stop offset="0.991" stop-color="#990054"/><stop offset="0.998" stop-color="#990051"/></linearGradient><linearGradient id="o92" gradientUnits="userSpaceOnUse" x1="1259.5" x2="1909.1" y1="0" y2="0"><stop offset="0.000" stop-color="#000099"/><stop offset="0.511" stop-color="#050099"/><stop offset="0.696" stop-color="#2e0099"/><stop offset="0.831" stop-color="#6d0099"/><stop offset="0.893" stop-color="#990098"/><stop offset="0.998" stop-color="#990054"/></linearGradient><linearGradient id="o93" gradientUnits="userSpaceOnUse" x1="1259.5" x2="1909.1" y1="0" y2="0"><stop offset="0.000" stop-color="#000099"/><stop offset="0.517" stop-color="#050099"/><stop offset="0.708" stop-color="#300099"/><stop offset="0.837" stop-color="#6c0099"/><stop offset="0.905" stop-color="#990094"/><stop offset="0.998" stop-color="#990058"/></linearGradient><linearGradient id="o94" gradientUnits="userSpaceOnUse" x1="1259.5" x2="1909.1" y1="0" y2="0"><stop offset="0.000" stop-color="#000099"/><stop offset="0.523" stop-color="#050099"/><stop offset="0.714" stop-color="#2f0099"/><stop offset="0.844" stop-color="#6b0099"/><stop offset="0.911" stop-color="#990095"/><stop offset="0.998" stop-color="#99005c"/></linearGradient><linearGradient id="o95" gradientUnits="userSpaceOnUse" x1="1259.5" x2="1909.1" y1="0" y2="0"><stop offset="0.000" stop-color="#000099"/><stop offset="0.536" stop-color="#060099"/><stop offset="0.720" stop-color="#2f0099"/><stop offset="0.856" stop-color="#6e0099"/><stop offset="0.917" stop-color="#990097"/><stop offset="0.998" stop-color="#990060"/></linearGradient><linearGradient id="o96" gradientUnits="userSpaceOnUse" x1="1259.5" x2="1909.1" y1="0" y2="0"><stop offset="0.000" stop-color="#000099"/><stop offset="0.542" stop-color="#050099"/><stop offset="0.727" stop-color="#2e0099"/><stop offset="0.862" stop-color="#6d0099"/><stop offset="0.930" stop-color="#990093"/><stop offset="0.998" stop-color="#990065"/></linearGradient><linearGradient id="o97" gradientUnits="userSpaceOnUse" x1="1259.5" x2="1909.1" y1="0" y2="0"><stop offset="0.000" stop-color="#000099"/><stop offset="0.548" stop-color="#050099"/><stop offset="0.739" stop-color="#300099"/><stop offset="0.868" stop-color="#6c0099"/><stop offset="0.936" stop-color="#990094"/><stop offset="0.998" stop-color="#990069"/></linearGradient><linearGradient id="i0" gradientUnits="userSpaceOnUse" x1="1393.8" x2="1748.5" y1="0" y2="0"><stop offset="0.000" stop-color="#00ff00"/><stop offset="0.073" stop-color="#2eff00"/><stop offset="0.169" stop-color="#92ff00"/><stop offset="0.248" stop-color="#fffb00"/><stop offset="0.310" stop-color="#ffaf00"/><stop offset="0.400" stop-color="#ff6f00"/><stop offset="0.547" stop-color="#ff3900"/><stop offset="0.806" stop-color="#ff1000"/><stop offset="0.998" stop-color="#ff0300"/></linearGradient><linearGradient id="i1" gradientUnits="userSpaceOnUse" x1="1393.8" x2="1748.5" y1="0" y2="0"><stop offset="0.000" stop-color="#00ff04"/><stop offset="0.068" stop-color="#29ff01"/><stop offset="0.164" stop-color="#8bff00"/><stop offset="0.248" stop-color="#fffa00"/><stop offset="0.310" stop-color="#ffad00"/><stop offset="0.400" stop-color="#ff6e00"/><stop offset="0.547" stop-color="#ff3800"/><stop offset="0.806" stop-color="#ff1000"/><stop offset="0.998" stop-color="#ff0300"/></linearGradient><linearGradient id="i2" gradientUnits="userSpaceOnUse" x1="1393.8" x2="1748.5" y1="0" y2="0"><stop offset="0.000" stop-color="#00ff08"/><stop offset="0.062" stop-color="#23ff06"/><stop offset="0.158" stop-color="#84ff01"/><stop offset="0.243" stop-color="#fcff00"/><stop offset="0.310" stop-color="#ffac00"/><stop offset="0.400" stop-color="#ff6c00"/><stop offset="0.547" stop-color="#ff3700"/><stop offset="0.806" stop-color="#ff0f00"/><stop offset="0.998" stop-color="#ff0200"/></linearGradient><linearGradient id="i3" gradientUnits="userSpaceOnUse" x1="1393.8" x2="1748.5" y1="0" y2="0"><stop offset="0.000" stop-color="#00ff0d"/><stop offset="0.056" stop-color="#1eff0a"/><stop offset="0.152" stop-color="#7dff06"/><stop offset="0.237" stop-color="#f4ff02"/><stop offset="0.248" stop-color="#fff702"/><stop offset="0.310" stop-color="#ffab00"/><stop offset="0.400" stop-color="#ff6b00"/><stop offset="0.547" stop-color="#ff3600"/><stop offset="0.806" stop-color="#ff0f00"/><stop offset="0.998" stop-color="#ff0200"/></linearGradient><linearGradient id="i4" gradientUnits="userSpaceOnUse" x1="1393.8" x2="1748.5" y1="0" y2="0"><stop offset="0.000" stop-color="#00ff12"/><stop offset="0.051" stop-color="#19ff10"/><stop offset="0.141" stop-color="#70ff0c"/><stop offset="0.226" stop-color="#e3ff08"/><stop offset="0.243" stop-color="#ffff07"/><stop offset="0.299" stop-color="#ffb503"/><stop offset="0.383" stop-color="#ff7300"/><stop offset="0.519" stop-color="#ff3d00"/><stop offset="0.756" stop-color="#ff1300"/><stop offset="0.998" stop-color="#ff0200"/></linearGradient><linearGradient id="i5" gradientUnits="userSpaceOnUse" x1="1393.8" x2="1748.5" y1="0" y2="0"><stop offset="0.000" stop-color="#00ff17"/><stop offset="0.045" stop-color="#14ff16"/><stop offset="0.135" stop-color="#69ff12"/><stop offset="0.220" stop-color="#dbff0e"/><stop offset="0.243" stop-color="#fffe0d"/><stop offset="0.299" stop-color="#ffb307"/><stop offset="0.383" stop-color="#ff7202"/><stop offset="0.519" stop-color="#ff3c00"/><stop offset="0.756" stop-color="#ff1200"/><stop offset="0.998" stop-color="#ff0200"/></linearGradient><linearGradient id="i6" gradientUnits="userSpaceOnUse" x1="1393.8" x2="1748.5" y1="0" y2="0"><stop offset="0.000" stop-color="#00ff1d"/><stop offset="0.039" stop-color="#10ff1c"/><stop offset="0.130" stop-color="#62ff19"/><stop offset="0.214" stop-color="#d3ff15"/><stop offset="0.243" stop-color="#fffd14"/><stop offset="0.299" stop-color="#ffb20c"/><stop offset="0.383" stop-color="#ff7106"/><stop offset="0.519" stop-color="#ff3b01"/><stop offset="0.756" stop-color="#ff1200"/><stop offset="0.998" stop-color="#ff0100"/></linearGradient><linearGradient id="i7" gradientUnits="userSpaceOnUse" x1="1393.8" x2="1748.5" y1="0" y2="0"><stop offset="0.000" stop-color="#00ff23"/><stop offset="0.039" stop-color="#0fff22"/><stop offset="0.130" stop-color="#62ff20"/><stop offset="0.214" stop-color="#d4ff1d"/><stop offset="0.243" stop-color="#fffb1b"/><stop offset="0.299" stop-color="#ffb111"/><stop offset="0.383" stop-color="#ff7009"/><stop offset="0.519" stop-color="#ff3a03"/><stop offset="0.756" stop-color="#ff1100"/><stop offset="0.998" stop-color="#ff0100"/></linearGradient><linearGradient id="i8" gradientUnits="userSpaceOnUse" x1="1393.8" x2="1748.5" y1="0" y2="0"><stop offset="0.000" stop-color="#00ff29"/><stop offset="0.034" stop-color="#0aff29"/><stop offset="0.118" stop-color="#55ff27"/><stop offset="0.203" stop-color="#c3ff25"/><stop offset="0.243" stop-color="#fffa23"/><stop offset="0.299" stop-color="#ffaf17"/><stop offset="0.383" stop-color="#ff6e0d"/><stop offset="0.519" stop-color="#ff3905"/><stop offset="0.756" stop-color="#ff1100"/><stop offset="0.998" stop-color="#ff0100"/></linearGradient><linearGradient id="i9" gradientUnits="userSpaceOnUse" x1="1393.8" x2="1748.5" y1="0" y2="0"><stop offset="0.000" stop-color="#00ff30"/><stop offset="0.034" stop-color="#0aff2f"/><stop offset="0.118" stop-color="#55ff2e"/><stop offset="0.203" stop-color="#c4ff2d"/><stop offset="0.237" stop-color="#fcff2c"/><stop offset="0.299" stop-color="#ffae1d"/><stop offset="0.383" stop-color="#ff6d11"/><stop offset="0.519" stop-color="#ff3808"/><stop offset="0.761" stop-color="#ff1001"/><stop offset="0.998" stop-color="#ff0000"/></linearGradient><linearGradient id="i10" gradientUnits="userSpaceOnUse" x1="1393.8" x2="1748.5" y1="0" y2="0"><stop offset="0.000" stop-color="#00ff37"/><stop offset="0.034" stop-color="#09ff37"/><stop offset="0.118" stop-color="#54ff36"/><stop offset="0.203" stop-color="#c5ff35"/><stop offset="0.237" stop-color="#fdff35"/><stop offset="0.299" stop-color="#ffac23"/><stop offset="0.383" stop-color="#ff6c16"/><stop offset="0.519" stop-color="#ff370b"/><stop offset="0.761" stop-color="#ff0f02"/><stop offset="0.998" stop-color="#ff0000"/></linearGradient><linearGradient id="i11" gradientUnits="userSpaceOnUse" x1="1393.8" x2="1748.5" y1="0" y2="0"><stop offset="0.000" stop-color="#00ff3e"/><stop offset="0.034" stop-color="#08ff3e"/><stop offset="0.118" stop-color="#54ff3e"/><stop offset="0.203" stop-color="#c5ff3e"/><stop offset="0.237" stop-color="#ffff3e"/><stop offset="0.293" stop-color="#ffb12b"/><stop offset="0.372" stop-color="#ff711c"/><stop offset="0.502" stop-color="#ff3b0f"/><stop offset="0.728" stop-color="#ff1205"/><stop offset="0.998" stop-color="#ff0000"/></linearGradient><linearGradient id="i12" gradientUnits="userSpaceOnUse" x1="1393.8" x2="1748.5" y1="0" y2="0"><stop offset="0.000" stop-color="#00ff45"/><stop offset="0.034" stop-color="#07ff46"/><stop offset="0.113" stop-color="#4dff46"/><stop offset="0.197" stop-color="#bdff47"/><stop offset="0.237" stop-color="#fffe48"/><stop offset="0.288" stop-color="#ffb634"/><stop offset="0.367" stop-color="#ff7322"/><stop offset="0.491" stop-color="#ff3d13"/><stop offset="0.711" stop-color="#ff1307"/><stop offset="0.998" stop-color="#ff0001"/></linearGradient><linearGradient id="i13" gradientUnits="userSpaceOnUse" x1="1393.8" x2="1748.5" y1="0" y2="0"><stop offset="0.000" stop-color="#00ff4d"/><stop offset="0.034" stop-color="#07ff4d"/><stop offset="0.113" stop-color="#4dff4f"/><stop offset="0.197" stop-color="#beff51"/><stop offset="0.237" stop-color="#fffd51"/><stop offset="0.288" stop-color="#ffb43b"/><stop offset="0.367" stop-color="#ff7227"/><stop offset="0.491" stop-color="#ff3c16"/><stop offset="0.711" stop-color="#ff1309"/><stop offset="0.998" stop-color="#ff0002"/></linearGradient><linearGradient id="i14" gradientUnits="userSpaceOnUse" x1="1393.8" x2="1748.5" y1="0" y2="0"><stop offset="0.000" stop-color="#00ff55"/><stop offset="0.034" stop-color="#06ff56"/><stop offset="0.113" stop-color="#4cff58"/><stop offset="0.192" stop-color="#b6ff5b"/><stop offset="0.237" stop-color="#fffb5b"/><stop offset="0.288" stop-color="#ffb343"/><stop offset="0.367" stop-color="#ff712c"/><stop offset="0.491" stop-color="#ff3b1a"/><stop offset="0.711" stop-color="#ff120b"/><stop offset="0.998" stop-color="#ff0003"/></linearGradient><linearGradient id="i15" gradientUnits="userSpaceOnUse" x1="1393.8" x2="1748.5" y1="0" y2="0"><stop offset="0.000" stop-color="#00ff5d"/><stop offset="0.039" stop-color="#09ff5e"/><stop offset="0.118" stop-color="#52ff62"/><stop offset="0.197" stop-color="#bfff66"/><stop offset="0.237" stop-color="#fffa66"/><stop offset="0.288" stop-color="#ffb14b"/><stop offset="0.367" stop-color="#ff6f32"/><stop offset="0.491" stop-color="#ff3a1d"/><stop offset="0.711" stop-color="#ff110d"/><stop offset="0.998" stop-color="#ff0004"/></linearGradient><linearGradient id="i16" gradientUnits="userSpaceOnUse" x1="1393.8" x2="1748.5" y1="0" y2="0"><stop offset="0.000" stop-color="#00ff65"/><stop offset="0.039" stop-color="#08ff67"/><stop offset="0.118" stop-color="#52ff6b"/><stop offset="0.197" stop-color="#c0ff71"/><stop offset="0.231" stop-color="#fbff73"/><stop offset="0.293" stop-color="#ffa950"/><stop offset="0.372" stop-color="#ff6b36"/><stop offset="0.502" stop-color="#ff3620"/><stop offset="0.733" stop-color="#ff0e0e"/><stop offset="0.998" stop-color="#ff0006"/></linearGradient><linearGradient id="i17" gradientUnits="userSpaceOnUse" x1="1393.8" x2="1748.5" y1="0" y2="0"><stop offset="0.000" stop-color="#00ff6e"/><stop offset="0.039" stop-color="#07ff70"/><stop offset="0.118" stop-color="#51ff76"/><stop offset="0.197" stop-color="#c1ff7c"/><stop offset="0.231" stop-color="#fdff7f"/><stop offset="0.288" stop-color="#ffae5b"/><stop offset="0.367" stop-color="#ff6d3d"/><stop offset="0.491" stop-color="#ff3825"/><stop offset="0.711" stop-color="#ff1012"/><stop offset="0.998" stop-color="#ff0007"/></linearGradient><linearGradient id="i18" gradientUnits="userSpaceOnUse" x1="1393.8" x2="1748.5" y1="0" y2="0"><stop offset="0.000" stop-color="#00ff77"/><stop offset="0.039" stop-color="#06ff7a"/><stop offset="0.113" stop-color="#4aff7f"/><stop offset="0.192" stop-color="#b8ff87"/><stop offset="0.231" stop-color="#feff8b"/><stop offset="0.282" stop-color="#ffb366"/><stop offset="0.355" stop-color="#ff7347"/><stop offset="0.474" stop-color="#ff3c2b"/><stop offset="0.682" stop-color="#ff1316"/><stop offset="0.998" stop-color="#ff0008"/></linearGradient><linearGradient id="i19" gradientUnits="userSpaceOnUse" x1="1393.8" x2="1748.5" y1="0" y2="0"><stop offset="0.000" stop-color="#00ff80"/><stop offset="0.039" stop-color="#05ff83"/><stop offset="0.113" stop-color="#4aff8a"/><stop offset="0.192" stop-color="#b9ff93"/><stop offset="0.231" stop-color="#fffe98"/><stop offset="0.282" stop-color="#ffb16f"/><stop offset="0.355" stop-color="#ff714d"/><stop offset="0.474" stop-color="#ff3b30"/><stop offset="0.682" stop-color="#ff1218"/><stop offset="0.998" stop-color="#ff000a"/></linearGradient><linearGradient id="i20" gradientUnits="userSpaceOnUse" x1="1393.8" x2="1748.5" y1="0" y2="0"><stop offset="0.000" stop-color="#00ff8a"/><stop offset="0.039" stop-color="#05ff8e"/><stop offset="0.113" stop-color="#49ff95"/><stop offset="0.186" stop-color="#b0ff9f"/><stop offset="0.231" stop-color="#fffca4"/><stop offset="0.282" stop-color="#ffb078"/><stop offset="0.355" stop-color="#ff7054"/><stop offset="0.474" stop-color="#ff3a34"/><stop offset="0.682" stop-color="#ff111b"/><stop offset="0.993" stop-color="#ff000c"/><stop offset="0.998" stop-color="#ff000b"/></linearGradient><linearGradient id="i21" gradientUnits="userSpaceOnUse" x1="1393.8" x2="1748.5" y1="0" y2="0"><stop offset="0.000" stop-color="#00ff94"/><stop offset="0.045" stop-color="#07ff98"/><stop offset="0.118" stop-color="#4fffa2"/><stop offset="0.192" stop-color="#baffad"/><stop offset="0.231" stop-color="#fffbb1"/><stop offset="0.282" stop-color="#ffae82"/><stop offset="0.355" stop-color="#ff6e5a"/><stop offset="0.474" stop-color="#ff3938"/><stop offset="0.682" stop-color="#ff111d"/><stop offset="0.993" stop-color="#ff000d"/><stop offset="0.998" stop-color="#ff000d"/></linearGradient><linearGradient id="i22" gradientUnits="userSpaceOnUse" x1="1393.8" x2="1748.5" y1="0" y2="0"><stop offset="0.000" stop-color="#00ff9e"/><stop offset="0.045" stop-color="#07ffa3"/><stop offset="0.118" stop-color="#4fffae"/><stop offset="0.192" stop-color="#bbffba"/><stop offset="0.231" stop-color="#fff9be"/><stop offset="0.282" stop-color="#ffad8b"/><stop offset="0.355" stop-color="#ff6d61"/><stop offset="0.474" stop-color="#ff383d"/><stop offset="0.682" stop-color="#ff1020"/><stop offset="0.987" stop-color="#ff000f"/><stop offset="0.998" stop-color="#ff000e"/></linearGradient><linearGradient id="i23" gradientUnits="userSpaceOnUse" x1="1393.8" x2="1748.5" y1="0" y2="0"><stop offset="0.000" stop-color="#00ffa8"/><stop offset="0.045" stop-color="#06ffae"/><stop offset="0.118" stop-color="#4effba"/><stop offset="0.192" stop-color="#bbffc8"/><stop offset="0.226" stop-color="#fbffd0"/><stop offset="0.282" stop-color="#ffab95"/><stop offset="0.355" stop-color="#ff6b68"/><stop offset="0.474" stop-color="#ff3742"/><stop offset="0.682" stop-color="#ff0f23"/><stop offset="0.987" stop-color="#ff0010"/><stop offset="0.998" stop-color="#ff0010"/></linearGradient><linearGradient id="i24" gradientUnits="userSpaceOnUse" x1="1393.8" x2="1748.5" y1="0" y2="0"><stop offset="0.000" stop-color="#00ffb3"/><stop offset="0.045" stop-color="#05ffba"/><stop offset="0.113" stop-color="#47ffc6"/><stop offset="0.186" stop-color="#b2ffd5"/><stop offset="0.226" stop-color="#fdffdf"/><stop offset="0.276" stop-color="#ffb0a4"/><stop offset="0.344" stop-color="#ff7275"/><stop offset="0.457" stop-color="#ff3b4a"/><stop offset="0.654" stop-color="#ff1229"/><stop offset="0.953" stop-color="#ff0014"/><stop offset="0.998" stop-color="#ff0012"/></linearGradient><linearGradient id="i25" gradientUnits="userSpaceOnUse" x1="1393.8" x2="1748.5" y1="0" y2="0"><stop offset="0.000" stop-color="#00ffbe"/><stop offset="0.045" stop-color="#04ffc6"/><stop offset="0.113" stop-color="#46ffd3"/><stop offset="0.186" stop-color="#b3ffe4"/><stop offset="0.226" stop-color="#feffef"/><stop offset="0.271" stop-color="#ffb5b5"/><stop offset="0.338" stop-color="#ff7480"/><stop offset="0.446" stop-color="#ff3e53"/><stop offset="0.632" stop-color="#ff142e"/><stop offset="0.931" stop-color="#ff0016"/><stop offset="0.998" stop-color="#ff0013"/></linearGradient><linearGradient id="i26" gradientUnits="userSpaceOnUse" x1="1393.8" x2="1748.5" y1="0" y2="0"><stop offset="0.000" stop-color="#00ffc9"/><stop offset="0.045" stop-color="#03ffd2"/><stop offset="0.113" stop-color="#45ffe0"/><stop offset="0.186" stop-color="#b3fff3"/><stop offset="0.226" stop-color="#fffeff"/><stop offset="0.271" stop-color="#ffb4c0"/><stop offset="0.338" stop-color="#ff7388"/><stop offset="0.446" stop-color="#ff3d58"/><stop offset="0.632" stop-color="#ff1332"/><stop offset="0.925" stop-color="#ff0019"/><stop offset="0.998" stop-color="#ff0015"/></linearGradient><linearGradient id="i27" gradientUnits="userSpaceOnUse" x1="1393.8" x2="1748.5" y1="0" y2="0"><stop offset="0.000" stop-color="#00ffd5"/><stop offset="0.051" stop-color="#06ffdf"/><stop offset="0.118" stop-color="#4cfff0"/><stop offset="0.192" stop-color="#baf9ff"/><stop offset="0.237" stop-color="#ffe6fa"/><stop offset="0.288" stop-color="#ff9eb9"/><stop offset="0.367" stop-color="#ff5f7f"/><stop offset="0.491" stop-color="#ff2e50"/><stop offset="0.722" stop-color="#ff092a"/><stop offset="0.998" stop-color="#ff0017"/></linearGradient><linearGradient id="i28" gradientUnits="userSpaceOnUse" x1="1393.8" x2="1748.5" y1="0" y2="0"><stop offset="0.000" stop-color="#00ffe1"/><stop offset="0.051" stop-color="#05ffec"/><stop offset="0.118" stop-color="#4bfffe"/><stop offset="0.226" stop-color="#e3e0ff"/><stop offset="0.243" stop-color="#ffdaff"/><stop offset="0.293" stop-color="#ff96be"/><stop offset="0.372" stop-color="#ff5a83"/><stop offset="0.502" stop-color="#ff2a52"/><stop offset="0.739" stop-color="#ff072b"/><stop offset="0.998" stop-color="#ff0018"/></linearGradient><linearGradient id="i29" gradientUnits="userSpaceOnUse" x1="1393.8" x2="1748.5" y1="0" y2="0"><stop offset="0.000" stop-color="#00ffed"/><stop offset="0.051" stop-color="#04fffa"/><stop offset="0.135" stop-color="#5bedff"/><stop offset="0.243" stop-color="#f1cdff"/><stop offset="0.259" stop-color="#ffbef2"/><stop offset="0.321" stop-color="#ff7bad"/><stop offset="0.417" stop-color="#ff4474"/><stop offset="0.581" stop-color="#ff1944"/><stop offset="0.863" stop-color="#ff0023"/><stop offset="0.998" stop-color="#ff001a"/></linearGradient><linearGradient id="i30" gradientUnits="userSpaceOnUse" x1="1393.8" x2="1748.5" y1="0" y2="0"><stop offset="0.000" stop-color="#00fffa"/><stop offset="0.051" stop-color="#03f7ff"/><stop offset="0.135" stop-color="#56e0ff"/><stop offset="0.248" stop-color="#eebfff"/><stop offset="0.259" stop-color="#ffbcff"/><stop offset="0.321" stop-color="#ff79b7"/><stop offset="0.412" stop-color="#ff457c"/><stop offset="0.570" stop-color="#ff1a4a"/><stop offset="0.852" stop-color="#ff0026"/><stop offset="0.998" stop-color="#ff001c"/></linearGradient><linearGradient id="i31" gradientUnits="userSpaceOnUse" x1="1393.8" x2="1748.5" y1="0" y2="0"><stop offset="0.000" stop-color="#00f7ff"/><stop offset="0.056" stop-color="#06e9ff"/><stop offset="0.147" stop-color="#5ed1ff"/><stop offset="0.271" stop-color="#ffabfb"/><stop offset="0.333" stop-color="#ff6fb6"/><stop offset="0.429" stop-color="#ff3d7b"/><stop offset="0.592" stop-color="#ff154a"/><stop offset="0.868" stop-color="#ff0026"/><stop offset="0.998" stop-color="#ff001e"/></linearGradient><linearGradient id="i32" gradientUnits="userSpaceOnUse" x1="1393.8" x2="1748.5" y1="0" y2="0"><stop offset="0.000" stop-color="#00ebff"/><stop offset="0.056" stop-color="#05ddff"/><stop offset="0.147" stop-color="#58c5ff"/><stop offset="0.265" stop-color="#eea5ff"/><stop offset="0.276" stop-color="#ffa2ff"/><stop offset="0.338" stop-color="#ff69ba"/><stop offset="0.434" stop-color="#ff397e"/><stop offset="0.598" stop-color="#ff134c"/><stop offset="0.868" stop-color="#ff0029"/><stop offset="0.998" stop-color="#ff0020"/></linearGradient><linearGradient id="i33" gradientUnits="userSpaceOnUse" x1="1393.8" x2="1748.5" y1="0" y2="0"><stop offset="0.000" stop-color="#00e0ff"/><stop offset="0.056" stop-color="#04d2ff"/><stop offset="0.147" stop-color="#54bbff"/><stop offset="0.271" stop-color="#eb9aff"/><stop offset="0.288" stop-color="#ff94fc"/><stop offset="0.355" stop-color="#ff5db5"/><stop offset="0.457" stop-color="#ff317b"/><stop offset="0.632" stop-color="#ff0e49"/><stop offset="0.902" stop-color="#ff0028"/><stop offset="0.998" stop-color="#ff0021"/></linearGradient><linearGradient id="i34" gradientUnits="userSpaceOnUse" x1="1393.8" x2="1748.5" y1="0" y2="0"><stop offset="0.000" stop-color="#00d5ff"/><stop offset="0.062" stop-color="#06c7ff"/><stop offset="0.164" stop-color="#61adff"/><stop offset="0.293" stop-color="#ff8cff"/><stop offset="0.361" stop-color="#ff58b9"/><stop offset="0.462" stop-color="#ff2e7e"/><stop offset="0.637" stop-color="#ff0d4c"/><stop offset="0.902" stop-color="#ff002a"/><stop offset="0.998" stop-color="#ff0023"/></linearGradient><linearGradient id="i35" gradientUnits="userSpaceOnUse" x1="1393.8" x2="1748.5" y1="0" y2="0"><stop offset="0.000" stop-color="#00ccff"/><stop offset="0.062" stop-color="#05bdff"/><stop offset="0.164" stop-color="#5ca5ff"/><stop offset="0.293" stop-color="#f384ff"/><stop offset="0.310" stop-color="#ff7af5"/><stop offset="0.383" stop-color="#ff4bb0"/><stop offset="0.496" stop-color="#ff2476"/><stop offset="0.694" stop-color="#ff0645"/><stop offset="0.998" stop-color="#ff0025"/></linearGradient><linearGradient id="i36" gradientUnits="userSpaceOnUse" x1="1393.8" x2="1748.5" y1="0" y2="0"><stop offset="0.000" stop-color="#00c2ff"/><stop offset="0.062" stop-color="#04b4ff"/><stop offset="0.164" stop-color="#579cff"/><stop offset="0.299" stop-color="#f07bff"/><stop offset="0.316" stop-color="#ff74f8"/><stop offset="0.389" stop-color="#ff46b4"/><stop offset="0.502" stop-color="#ff2179"/><stop offset="0.694" stop-color="#ff0649"/><stop offset="0.998" stop-color="#ff0027"/></linearGradient><linearGradient id="i37" gradientUnits="userSpaceOnUse" x1="1393.8" x2="1748.5" y1="0" y2="0"><stop offset="0.000" stop-color="#00baff"/><stop offset="0.062" stop-color="#04acff"/><stop offset="0.164" stop-color="#5395ff"/><stop offset="0.305" stop-color="#ed73ff"/><stop offset="0.327" stop-color="#ff69f5"/><stop offset="0.406" stop-color="#ff3eaf"/><stop offset="0.530" stop-color="#ff1a74"/><stop offset="0.739" stop-color="#ff0244"/><stop offset="0.998" stop-color="#ff0029"/></linearGradient><linearGradient id="i38" gradientUnits="userSpaceOnUse" x1="1393.8" x2="1748.5" y1="0" y2="0"><stop offset="0.000" stop-color="#00b2ff"/><stop offset="0.068" stop-color="#06a3ff"/><stop offset="0.175" stop-color="#5a8bff"/><stop offset="0.316" stop-color="#f16aff"/><stop offset="0.333" stop-color="#ff63f9"/><stop offset="0.412" stop-color="#ff3ab3"/><stop offset="0.536" stop-color="#ff1877"/><stop offset="0.744" stop-color="#ff0147"/><stop offset="0.998" stop-color="#ff002b"/></linearGradient><linearGradient id="i39" gradientUnits="userSpaceOnUse" x1="1393.8" x2="1748.5" y1="0" y2="0"><stop offset="0.000" stop-color="#00aaff"/><stop offset="0.068" stop-color="#059cff"/><stop offset="0.180" stop-color="#5b83ff"/><stop offset="0.327" stop-color="#f462ff"/><stop offset="0.344" stop-color="#ff5af6"/><stop offset="0.423" stop-color="#ff35b2"/><stop offset="0.547" stop-color="#ff1678"/><stop offset="0.761" stop-color="#ff0047"/><stop offset="0.998" stop-color="#ff002d"/></linearGradient><linearGradient id="i40" gradientUnits="userSpaceOnUse" x1="1393.8" x2="1748.5" y1="0" y2="0"><stop offset="0.000" stop-color="#00a3ff"/><stop offset="0.068" stop-color="#0495ff"/><stop offset="0.180" stop-color="#577dff"/><stop offset="0.333" stop-color="#f15bff"/><stop offset="0.350" stop-color="#ff55f9"/><stop offset="0.429" stop-color="#ff31b6"/><stop offset="0.553" stop-color="#ff147b"/><stop offset="0.767" stop-color="#ff0049"/><stop offset="0.998" stop-color="#ff002f"/></linearGradient><linearGradient id="i41" gradientUnits="userSpaceOnUse" x1="1393.8" x2="1748.5" y1="0" y2="0"><stop offset="0.000" stop-color="#009cff"/><stop offset="0.073" stop-color="#068dff"/><stop offset="0.192" stop-color="#5d74ff"/><stop offset="0.344" stop-color="#f554ff"/><stop offset="0.361" stop-color="#ff4df6"/><stop offset="0.446" stop-color="#ff2bb2"/><stop offset="0.581" stop-color="#ff0f76"/><stop offset="0.812" stop-color="#ff0045"/><stop offset="0.998" stop-color="#ff0031"/></linearGradient><linearGradient id="i42" gradientUnits="userSpaceOnUse" x1="1393.8" x2="1748.5" y1="0" y2="0"><stop offset="0.000" stop-color="#0095ff"/><stop offset="0.073" stop-color="#0587ff"/><stop offset="0.192" stop-color="#596fff"/><stop offset="0.350" stop-color="#f24eff"/><stop offset="0.367" stop-color="#ff49fa"/><stop offset="0.451" stop-color="#ff28b5"/><stop offset="0.587" stop-color="#ff0d78"/><stop offset="0.812" stop-color="#ff0048"/><stop offset="0.998" stop-color="#ff0033"/></linearGradient><linearGradient id="i43" gradientUnits="userSpaceOnUse" x1="1393.8" x2="1748.5" y1="0" y2="0"><stop offset="0.000" stop-color="#008fff"/><stop offset="0.073" stop-color="#0481ff"/><stop offset="0.197" stop-color="#5a69ff"/><stop offset="0.361" stop-color="#f547ff"/><stop offset="0.383" stop-color="#ff3ff1"/><stop offset="0.474" stop-color="#ff21ae"/><stop offset="0.615" stop-color="#ff0974"/><stop offset="0.857" stop-color="#ff0044"/><stop offset="0.998" stop-color="#ff0035"/></linearGradient><linearGradient id="i44" gradientUnits="userSpaceOnUse" x1="1393.8" x2="1748.5" y1="0" y2="0"><stop offset="0.000" stop-color="#008aff"/><stop offset="0.079" stop-color="#067bff"/><stop offset="0.209" stop-color="#5f61ff"/><stop offset="0.383" stop-color="#ff3dfa"/><stop offset="0.474" stop-color="#ff1fb4"/><stop offset="0.615" stop-color="#ff0878"/><stop offset="0.852" stop-color="#ff0048"/><stop offset="0.998" stop-color="#ff0037"/></linearGradient><linearGradient id="i45" gradientUnits="userSpaceOnUse" x1="1393.8" x2="1748.5" y1="0" y2="0"><stop offset="0.000" stop-color="#0084ff"/><stop offset="0.079" stop-color="#0575ff"/><stop offset="0.209" stop-color="#5b5dff"/><stop offset="0.378" stop-color="#f53cff"/><stop offset="0.400" stop-color="#ff35f2"/><stop offset="0.496" stop-color="#ff19ad"/><stop offset="0.649" stop-color="#ff0473"/><stop offset="0.908" stop-color="#ff0043"/><stop offset="0.998" stop-color="#ff0039"/></linearGradient><linearGradient id="i46" gradientUnits="userSpaceOnUse" x1="1393.8" x2="1748.5" y1="0" y2="0"><stop offset="0.000" stop-color="#007fff"/><stop offset="0.079" stop-color="#0571ff"/><stop offset="0.209" stop-color="#5859ff"/><stop offset="0.383" stop-color="#f338ff"/><stop offset="0.400" stop-color="#ff33fa"/><stop offset="0.496" stop-color="#ff18b3"/><stop offset="0.643" stop-color="#ff0478"/><stop offset="0.891" stop-color="#ff0048"/><stop offset="0.998" stop-color="#ff003b"/></linearGradient><linearGradient id="i47" gradientUnits="userSpaceOnUse" x1="1393.8" x2="1748.5" y1="0" y2="0"><stop offset="0.000" stop-color="#007aff"/><stop offset="0.079" stop-color="#046cff"/><stop offset="0.214" stop-color="#5953ff"/><stop offset="0.389" stop-color="#f033ff"/><stop offset="0.412" stop-color="#ff2ef8"/><stop offset="0.508" stop-color="#ff15b3"/><stop offset="0.660" stop-color="#ff0277"/><stop offset="0.919" stop-color="#ff0047"/><stop offset="0.998" stop-color="#ff003e"/></linearGradient><linearGradient id="i48" gradientUnits="userSpaceOnUse" x1="1393.8" x2="1748.5" y1="0" y2="0"><stop offset="0.000" stop-color="#0075ff"/><stop offset="0.085" stop-color="#0667ff"/><stop offset="0.226" stop-color="#5e4eff"/><stop offset="0.406" stop-color="#f92dff"/><stop offset="0.451" stop-color="#ff20de"/><stop offset="0.564" stop-color="#ff0b9d"/><stop offset="0.750" stop-color="#ff0065"/><stop offset="0.998" stop-color="#ff0040"/></linearGradient><linearGradient id="i49" gradientUnits="userSpaceOnUse" x1="1393.8" x2="1748.5" y1="0" y2="0"><stop offset="0.000" stop-color="#0071ff"/><stop offset="0.085" stop-color="#0562ff"/><stop offset="0.226" stop-color="#5b4aff"/><stop offset="0.412" stop-color="#f62aff"/><stop offset="0.434" stop-color="#ff24f3"/><stop offset="0.536" stop-color="#ff0eb0"/><stop offset="0.699" stop-color="#ff0074"/><stop offset="0.981" stop-color="#ff0044"/><stop offset="0.998" stop-color="#ff0042"/></linearGradient><linearGradient id="i50" gradientUnits="userSpaceOnUse" x1="1393.8" x2="1748.5" y1="0" y2="0"><stop offset="0.000" stop-color="#006cff"/><stop offset="0.085" stop-color="#045eff"/><stop offset="0.226" stop-color="#5747ff"/><stop offset="0.412" stop-color="#ee27ff"/><stop offset="0.434" stop-color="#ff23fb"/><stop offset="0.536" stop-color="#ff0db5"/><stop offset="0.694" stop-color="#ff0079"/><stop offset="0.964" stop-color="#ff0048"/><stop offset="0.998" stop-color="#ff0044"/></linearGradient><linearGradient id="i51" gradientUnits="userSpaceOnUse" x1="1393.8" x2="1748.5" y1="0" y2="0"><stop offset="0.000" stop-color="#0068ff"/><stop offset="0.090" stop-color="#065aff"/><stop offset="0.237" stop-color="#5c41ff"/><stop offset="0.429" stop-color="#f622ff"/><stop offset="0.451" stop-color="#ff1df4"/><stop offset="0.558" stop-color="#ff09af"/><stop offset="0.728" stop-color="#ff0074"/><stop offset="0.998" stop-color="#ff0046"/></linearGradient><linearGradient id="i52" gradientUnits="userSpaceOnUse" x1="1393.8" x2="1748.5" y1="0" y2="0"><stop offset="0.000" stop-color="#0064ff"/><stop offset="0.090" stop-color="#0556ff"/><stop offset="0.243" stop-color="#5d3dff"/><stop offset="0.440" stop-color="#f91eff"/><stop offset="0.496" stop-color="#ff12d9"/><stop offset="0.626" stop-color="#ff0297"/><stop offset="0.835" stop-color="#ff0061"/><stop offset="0.998" stop-color="#ff0049"/></linearGradient><linearGradient id="i53" gradientUnits="userSpaceOnUse" x1="1393.8" x2="1748.5" y1="0" y2="0"><stop offset="0.000" stop-color="#0061ff"/><stop offset="0.090" stop-color="#0553ff"/><stop offset="0.243" stop-color="#5a3bff"/><stop offset="0.446" stop-color="#f61bff"/><stop offset="0.468" stop-color="#ff16f4"/><stop offset="0.581" stop-color="#ff05af"/><stop offset="0.756" stop-color="#ff0074"/><stop offset="0.998" stop-color="#ff004b"/></linearGradient><linearGradient id="i54" gradientUnits="userSpaceOnUse" x1="1393.8" x2="1748.5" y1="0" y2="0"><stop offset="0.000" stop-color="#005dff"/><stop offset="0.096" stop-color="#064eff"/><stop offset="0.254" stop-color="#5e36ff"/><stop offset="0.457" stop-color="#f917ff"/><stop offset="0.519" stop-color="#ff0cd6"/><stop offset="0.654" stop-color="#ff0096"/><stop offset="0.874" stop-color="#ff005f"/><stop offset="0.998" stop-color="#ff004d"/></linearGradient><linearGradient id="i55" gradientUnits="userSpaceOnUse" x1="1393.8" x2="1748.5" y1="0" y2="0"><stop offset="0.000" stop-color="#005aff"/><stop offset="0.096" stop-color="#054bff"/><stop offset="0.254" stop-color="#5b33ff"/><stop offset="0.462" stop-color="#f715ff"/><stop offset="0.491" stop-color="#ff10f0"/><stop offset="0.609" stop-color="#ff01ac"/><stop offset="0.795" stop-color="#ff0072"/><stop offset="0.998" stop-color="#ff004f"/></linearGradient><linearGradient id="i56" gradientUnits="userSpaceOnUse" x1="1393.8" x2="1748.5" y1="0" y2="0"><stop offset="0.000" stop-color="#0056ff"/><stop offset="0.096" stop-color="#0548ff"/><stop offset="0.259" stop-color="#5c30ff"/><stop offset="0.474" stop-color="#f911ff"/><stop offset="0.547" stop-color="#ff06d1"/><stop offset="0.694" stop-color="#ff0091"/><stop offset="0.931" stop-color="#ff005b"/><stop offset="0.998" stop-color="#ff0052"/></linearGradient><linearGradient id="i57" gradientUnits="userSpaceOnUse" x1="1393.8" x2="1748.5" y1="0" y2="0"><stop offset="0.000" stop-color="#0053ff"/><stop offset="0.102" stop-color="#0645ff"/><stop offset="0.271" stop-color="#602cff"/><stop offset="0.491" stop-color="#ff0efe"/><stop offset="0.603" stop-color="#ff01b8"/><stop offset="0.778" stop-color="#ff007c"/><stop offset="0.998" stop-color="#ff0054"/></linearGradient><linearGradient id="i58" gradientUnits="userSpaceOnUse" x1="1393.8" x2="1748.5" y1="0" y2="0"><stop offset="0.000" stop-color="#0050ff"/><stop offset="0.102" stop-color="#0642ff"/><stop offset="0.271" stop-color="#5d2aff"/><stop offset="0.491" stop-color="#f90cff"/><stop offset="0.570" stop-color="#ff03cf"/><stop offset="0.722" stop-color="#ff008f"/><stop offset="0.970" stop-color="#ff005a"/><stop offset="0.998" stop-color="#ff0056"/></linearGradient><linearGradient id="i59" gradientUnits="userSpaceOnUse" x1="1393.8" x2="1748.5" y1="0" y2="0"><stop offset="0.000" stop-color="#004dff"/><stop offset="0.102" stop-color="#053fff"/><stop offset="0.271" stop-color="#5a28ff"/><stop offset="0.496" stop-color="#f70aff"/><stop offset="0.524" stop-color="#ff07f1"/><stop offset="0.649" stop-color="#ff00ae"/><stop offset="0.846" stop-color="#ff0073"/><stop offset="0.998" stop-color="#ff0059"/></linearGradient><linearGradient id="i60" gradientUnits="userSpaceOnUse" x1="1393.8" x2="1748.5" y1="0" y2="0"><stop offset="0.000" stop-color="#004aff"/><stop offset="0.102" stop-color="#053dff"/><stop offset="0.271" stop-color="#5826ff"/><stop offset="0.496" stop-color="#f109ff"/><stop offset="0.524" stop-color="#ff06f8"/><stop offset="0.649" stop-color="#ff00b2"/><stop offset="0.840" stop-color="#ff0077"/><stop offset="0.998" stop-color="#ff005b"/></linearGradient><linearGradient id="i61" gradientUnits="userSpaceOnUse" x1="1393.8" x2="1748.5" y1="0" y2="0"><stop offset="0.000" stop-color="#0048ff"/><stop offset="0.107" stop-color="#0639ff"/><stop offset="0.288" stop-color="#5f22ff"/><stop offset="0.530" stop-color="#ff04fa"/><stop offset="0.654" stop-color="#ff00b4"/><stop offset="0.846" stop-color="#ff0079"/><stop offset="0.998" stop-color="#ff005e"/></linearGradient><linearGradient id="i62" gradientUnits="userSpaceOnUse" x1="1393.8" x2="1748.5" y1="0" y2="0"><stop offset="0.000" stop-color="#0045ff"/><stop offset="0.107" stop-color="#0537ff"/><stop offset="0.288" stop-color="#5c20ff"/><stop offset="0.524" stop-color="#f904ff"/><stop offset="0.632" stop-color="#ff00c3"/><stop offset="0.812" stop-color="#ff0084"/><stop offset="0.998" stop-color="#ff0060"/></linearGradient><linearGradient id="i63" gradientUnits="userSpaceOnUse" x1="1393.8" x2="1748.5" y1="0" y2="0"><stop offset="0.000" stop-color="#0043ff"/><stop offset="0.107" stop-color="#0535ff"/><stop offset="0.288" stop-color="#5a1eff"/><stop offset="0.524" stop-color="#f303ff"/><stop offset="0.553" stop-color="#ff01f6"/><stop offset="0.682" stop-color="#ff00b2"/><stop offset="0.885" stop-color="#ff0077"/><stop offset="0.998" stop-color="#ff0062"/></linearGradient><linearGradient id="i64" gradientUnits="userSpaceOnUse" x1="1393.8" x2="1748.5" y1="0" y2="0"><stop offset="0.000" stop-color="#0040ff"/><stop offset="0.113" stop-color="#0632ff"/><stop offset="0.299" stop-color="#5e1bff"/><stop offset="0.541" stop-color="#fa01ff"/><stop offset="0.671" stop-color="#ff00bb"/><stop offset="0.868" stop-color="#ff007d"/><stop offset="0.998" stop-color="#ff0065"/></linearGradient><linearGradient id="i65" gradientUnits="userSpaceOnUse" x1="1393.8" x2="1748.5" y1="0" y2="0"><stop offset="0.000" stop-color="#003eff"/><stop offset="0.113" stop-color="#0530ff"/><stop offset="0.305" stop-color="#5e19ff"/><stop offset="0.564" stop-color="#ff00fa"/><stop offset="0.699" stop-color="#ff00b3"/><stop offset="0.908" stop-color="#ff0078"/><stop offset="0.998" stop-color="#ff0067"/></linearGradient><linearGradient id="i66" gradientUnits="userSpaceOnUse" x1="1393.8" x2="1748.5" y1="0" y2="0"><stop offset="0.000" stop-color="#003cff"/><stop offset="0.113" stop-color="#052eff"/><stop offset="0.305" stop-color="#5c17ff"/><stop offset="0.553" stop-color="#f600ff"/><stop offset="0.587" stop-color="#ff00f1"/><stop offset="0.728" stop-color="#ff00ad"/><stop offset="0.953" stop-color="#ff0072"/><stop offset="0.998" stop-color="#ff006a"/></linearGradient><linearGradient id="i67" gradientUnits="userSpaceOnUse" x1="1393.8" x2="1748.5" y1="0" y2="0"><stop offset="0.000" stop-color="#003aff"/><stop offset="0.118" stop-color="#062cff"/><stop offset="0.316" stop-color="#5f15ff"/><stop offset="0.581" stop-color="#ff00fb"/><stop offset="0.716" stop-color="#ff00b5"/><stop offset="0.931" stop-color="#ff0079"/><stop offset="0.998" stop-color="#ff006c"/></linearGradient><linearGradient id="i68" gradientUnits="userSpaceOnUse" x1="1393.8" x2="1748.5" y1="0" y2="0"><stop offset="0.000" stop-color="#0038ff"/><stop offset="0.118" stop-color="#062aff"/><stop offset="0.316" stop-color="#5d13ff"/><stop offset="0.575" stop-color="#fa00ff"/><stop offset="0.750" stop-color="#ff00ad"/><stop offset="0.981" stop-color="#ff0072"/><stop offset="0.998" stop-color="#ff006f"/></linearGradient><linearGradient id="i69" gradientUnits="userSpaceOnUse" x1="1393.8" x2="1748.5" y1="0" y2="0"><stop offset="0.000" stop-color="#0036ff"/><stop offset="0.118" stop-color="#0528ff"/><stop offset="0.316" stop-color="#5a12ff"/><stop offset="0.575" stop-color="#f400ff"/><stop offset="0.603" stop-color="#ff00f7"/><stop offset="0.750" stop-color="#ff00b0"/><stop offset="0.976" stop-color="#ff0076"/><stop offset="0.998" stop-color="#ff0071"/></linearGradient><linearGradient id="i70" gradientUnits="userSpaceOnUse" x1="1393.8" x2="1748.5" y1="0" y2="0"><stop offset="0.000" stop-color="#0034ff"/><stop offset="0.124" stop-color="#0626ff"/><stop offset="0.333" stop-color="#610fff"/><stop offset="0.587" stop-color="#f600ff"/><stop offset="0.620" stop-color="#ff00f2"/><stop offset="0.773" stop-color="#ff00ac"/><stop offset="0.998" stop-color="#ff0074"/></linearGradient><linearGradient id="i71" gradientUnits="userSpaceOnUse" x1="1393.8" x2="1748.5" y1="0" y2="0"><stop offset="0.000" stop-color="#0032ff"/><stop offset="0.124" stop-color="#0624ff"/><stop offset="0.333" stop-color="#5e0eff"/><stop offset="0.587" stop-color="#f100ff"/><stop offset="0.620" stop-color="#ff00f7"/><stop offset="0.767" stop-color="#ff00b2"/><stop offset="0.998" stop-color="#ff0077"/></linearGradient><linearGradient id="i72" gradientUnits="userSpaceOnUse" x1="1393.8" x2="1748.5" y1="0" y2="0"><stop offset="0.000" stop-color="#0030ff"/><stop offset="0.124" stop-color="#0523ff"/><stop offset="0.333" stop-color="#5c0dff"/><stop offset="0.581" stop-color="#e800ff"/><stop offset="0.626" stop-color="#ff00f9"/><stop offset="0.773" stop-color="#ff00b4"/><stop offset="0.998" stop-color="#ff0079"/></linearGradient><linearGradient id="i73" gradientUnits="userSpaceOnUse" x1="1393.8" x2="1748.5" y1="0" y2="0"><stop offset="0.000" stop-color="#002eff"/><stop offset="0.124" stop-color="#0521ff"/><stop offset="0.333" stop-color="#5a0cff"/><stop offset="0.587" stop-color="#e700ff"/><stop offset="0.632" stop-color="#ff00fb"/><stop offset="0.778" stop-color="#ff00b6"/><stop offset="0.998" stop-color="#ff007c"/></linearGradient><linearGradient id="i74" gradientUnits="userSpaceOnUse" x1="1393.8" x2="1748.5" y1="0" y2="0"><stop offset="0.000" stop-color="#002cff"/><stop offset="0.130" stop-color="#061fff"/><stop offset="0.344" stop-color="#5d0aff"/><stop offset="0.603" stop-color="#ec00ff"/><stop offset="0.643" stop-color="#ff00fa"/><stop offset="0.795" stop-color="#ff00b4"/><stop offset="0.998" stop-color="#ff007e"/></linearGradient><linearGradient id="i75" gradientUnits="userSpaceOnUse" x1="1393.8" x2="1748.5" y1="0" y2="0"><stop offset="0.000" stop-color="#002bff"/><stop offset="0.130" stop-color="#051eff"/><stop offset="0.350" stop-color="#5e09ff"/><stop offset="0.626" stop-color="#f500ff"/><stop offset="0.654" stop-color="#ff00f8"/><stop offset="0.812" stop-color="#ff00b1"/><stop offset="0.998" stop-color="#ff0081"/></linearGradient><linearGradient id="i76" gradientUnits="userSpaceOnUse" x1="1393.8" x2="1748.5" y1="0" y2="0"><stop offset="0.000" stop-color="#0029ff"/><stop offset="0.130" stop-color="#051cff"/><stop offset="0.350" stop-color="#5b08ff"/><stop offset="0.637" stop-color="#f700ff"/><stop offset="0.677" stop-color="#ff00f0"/><stop offset="0.840" stop-color="#ff00ac"/><stop offset="0.998" stop-color="#ff0084"/></linearGradient><linearGradient id="i77" gradientUnits="userSpaceOnUse" x1="1393.8" x2="1748.5" y1="0" y2="0"><stop offset="0.000" stop-color="#0028ff"/><stop offset="0.135" stop-color="#061aff"/><stop offset="0.361" stop-color="#5e06ff"/><stop offset="0.654" stop-color="#fc00ff"/><stop offset="0.835" stop-color="#ff00b1"/><stop offset="0.998" stop-color="#ff0086"/></linearGradient><linearGradient id="i78" gradientUnits="userSpaceOnUse" x1="1393.8" x2="1748.5" y1="0" y2="0"><stop offset="0.000" stop-color="#0026ff"/><stop offset="0.135" stop-color="#0619ff"/><stop offset="0.361" stop-color="#5c05ff"/><stop offset="0.660" stop-color="#fa00ff"/><stop offset="0.857" stop-color="#ff00ad"/><stop offset="0.998" stop-color="#ff0089"/></linearGradient><linearGradient id="i79" gradientUnits="userSpaceOnUse" x1="1393.8" x2="1748.5" y1="0" y2="0"><stop offset="0.000" stop-color="#0025ff"/><stop offset="0.135" stop-color="#0518ff"/><stop offset="0.367" stop-color="#5d04ff"/><stop offset="0.665" stop-color="#f800ff"/><stop offset="0.711" stop-color="#ff00ec"/><stop offset="0.885" stop-color="#ff00a8"/><stop offset="0.998" stop-color="#ff008c"/></linearGradient><linearGradient id="i80" gradientUnits="userSpaceOnUse" x1="1393.8" x2="1748.5" y1="0" y2="0"><stop offset="0.000" stop-color="#0023ff"/><stop offset="0.141" stop-color="#0616ff"/><stop offset="0.378" stop-color="#6003ff"/><stop offset="0.694" stop-color="#ff00fa"/><stop offset="0.857" stop-color="#ff00b4"/><stop offset="0.998" stop-color="#ff008e"/></linearGradient><linearGradient id="i81" gradientUnits="userSpaceOnUse" x1="1393.8" x2="1748.5" y1="0" y2="0"><stop offset="0.000" stop-color="#0022ff"/><stop offset="0.141" stop-color="#0615ff"/><stop offset="0.378" stop-color="#5e02ff"/><stop offset="0.688" stop-color="#fc00ff"/><stop offset="0.880" stop-color="#ff00b0"/><stop offset="0.998" stop-color="#ff0091"/></linearGradient><linearGradient id="i82" gradientUnits="userSpaceOnUse" x1="1393.8" x2="1748.5" y1="0" y2="0"><stop offset="0.000" stop-color="#0021ff"/><stop offset="0.141" stop-color="#0514ff"/><stop offset="0.378" stop-color="#5c01ff"/><stop offset="0.688" stop-color="#f700ff"/><stop offset="0.733" stop-color="#ff00ee"/><stop offset="0.914" stop-color="#ff00aa"/><stop offset="0.998" stop-color="#ff0094"/></linearGradient><linearGradient id="i83" gradientUnits="userSpaceOnUse" x1="1393.8" x2="1748.5" y1="0" y2="0"><stop offset="0.000" stop-color="#0020ff"/><stop offset="0.147" stop-color="#0613ff"/><stop offset="0.389" stop-color="#5f00ff"/><stop offset="0.705" stop-color="#fc00ff"/><stop offset="0.902" stop-color="#ff00b0"/><stop offset="0.998" stop-color="#ff0097"/></linearGradient><linearGradient id="i84" gradientUnits="userSpaceOnUse" x1="1393.8" x2="1748.5" y1="0" y2="0"><stop offset="0.000" stop-color="#001eff"/><stop offset="0.147" stop-color="#0612ff"/><stop offset="0.395" stop-color="#5f00ff"/><stop offset="0.728" stop-color="#ff00fa"/><stop offset="0.902" stop-color="#ff00b3"/><stop offset="0.998" stop-color="#ff009a"/></linearGradient><linearGradient id="i85" gradientUnits="userSpaceOnUse" x1="1393.8" x2="1748.5" y1="0" y2="0"><stop offset="0.000" stop-color="#001dff"/><stop offset="0.147" stop-color="#0611ff"/><stop offset="0.395" stop-color="#5d00ff"/><stop offset="0.716" stop-color="#f900ff"/><stop offset="0.773" stop-color="#ff00e8"/><stop offset="0.964" stop-color="#ff00a5"/><stop offset="0.998" stop-color="#ff009c"/></linearGradient><linearGradient id="i86" gradientUnits="userSpaceOnUse" x1="1393.8" x2="1748.5" y1="0" y2="0"><stop offset="0.000" stop-color="#001cff"/><stop offset="0.147" stop-color="#0510ff"/><stop offset="0.395" stop-color="#5b00ff"/><stop offset="0.722" stop-color="#f700ff"/><stop offset="0.767" stop-color="#ff00ef"/><stop offset="0.953" stop-color="#ff00ab"/><stop offset="0.998" stop-color="#ff009f"/></linearGradient><linearGradient id="i87" gradientUnits="userSpaceOnUse" x1="1393.8" x2="1748.5" y1="0" y2="0"><stop offset="0.000" stop-color="#001bff"/><stop offset="0.152" stop-color="#060eff"/><stop offset="0.406" stop-color="#5e00ff"/><stop offset="0.739" stop-color="#fc00ff"/><stop offset="0.942" stop-color="#ff00b1"/><stop offset="0.998" stop-color="#ff00a2"/></linearGradient><linearGradient id="i88" gradientUnits="userSpaceOnUse" x1="1393.8" x2="1748.5" y1="0" y2="0"><stop offset="0.000" stop-color="#001aff"/><stop offset="0.152" stop-color="#060eff"/><stop offset="0.412" stop-color="#5e00ff"/><stop offset="0.761" stop-color="#ff00fb"/><stop offset="0.942" stop-color="#ff00b4"/><stop offset="0.998" stop-color="#ff00a5"/></linearGradient><linearGradient id="i89" gradientUnits="userSpaceOnUse" x1="1393.8" x2="1748.5" y1="0" y2="0"><stop offset="0.000" stop-color="#0019ff"/><stop offset="0.152" stop-color="#050dff"/><stop offset="0.412" stop-color="#5c00ff"/><stop offset="0.750" stop-color="#f900ff"/><stop offset="0.823" stop-color="#ff00e2"/><stop offset="0.998" stop-color="#ff00a8"/></linearGradient><linearGradient id="i90" gradientUnits="userSpaceOnUse" x1="1393.8" x2="1748.5" y1="0" y2="0"><stop offset="0.000" stop-color="#0018ff"/><stop offset="0.158" stop-color="#060bff"/><stop offset="0.423" stop-color="#5f00ff"/><stop offset="0.778" stop-color="#ff00fb"/><stop offset="0.964" stop-color="#ff00b4"/><stop offset="0.998" stop-color="#ff00ab"/></linearGradient><linearGradient id="i91" gradientUnits="userSpaceOnUse" x1="1393.8" x2="1748.5" y1="0" y2="0"><stop offset="0.000" stop-color="#0017ff"/><stop offset="0.158" stop-color="#060bff"/><stop offset="0.423" stop-color="#5d00ff"/><stop offset="0.773" stop-color="#fc00ff"/><stop offset="0.987" stop-color="#ff00b1"/><stop offset="0.998" stop-color="#ff00ae"/></linearGradient><linearGradient id="i92" gradientUnits="userSpaceOnUse" x1="1393.8" x2="1748.5" y1="0" y2="0"><stop offset="0.000" stop-color="#0016ff"/><stop offset="0.158" stop-color="#050aff"/><stop offset="0.429" stop-color="#5e00ff"/><stop offset="0.778" stop-color="#fa00ff"/><stop offset="0.998" stop-color="#ff00b1"/></linearGradient><linearGradient id="i93" gradientUnits="userSpaceOnUse" x1="1393.8" x2="1748.5" y1="0" y2="0"><stop offset="0.000" stop-color="#0015ff"/><stop offset="0.164" stop-color="#0609ff"/><stop offset="0.440" stop-color="#6000ff"/><stop offset="0.801" stop-color="#ff00fc"/><stop offset="0.993" stop-color="#ff00b5"/><stop offset="0.998" stop-color="#ff00b4"/></linearGradient><linearGradient id="i94" gradientUnits="userSpaceOnUse" x1="1393.8" x2="1748.5" y1="0" y2="0"><stop offset="0.000" stop-color="#0014ff"/><stop offset="0.164" stop-color="#0608ff"/><stop offset="0.440" stop-color="#5f00ff"/><stop offset="0.812" stop-color="#ff00fb"/><stop offset="0.998" stop-color="#ff00b6"/></linearGradient><linearGradient id="i95" gradientUnits="userSpaceOnUse" x1="1393.8" x2="1748.5" y1="0" y2="0"><stop offset="0.000" stop-color="#0013ff"/><stop offset="0.164" stop-color="#0608ff"/><stop offset="0.440" stop-color="#5d00ff"/><stop offset="0.801" stop-color="#f900ff"/><stop offset="0.914" stop-color="#ff00d5"/><stop offset="0.998" stop-color="#ff00b9"/></linearGradient><linearGradient id="i96" gradientUnits="userSpaceOnUse" x1="1393.8" x2="1748.5" y1="0" y2="0"><stop offset="0.000" stop-color="#0012ff"/><stop offset="0.164" stop-color="#0507ff"/><stop offset="0.440" stop-color="#5b00ff"/><stop offset="0.806" stop-color="#f800ff"/><stop offset="0.857" stop-color="#ff00ef"/><stop offset="0.998" stop-color="#ff00bc"/></linearGradient><linearGradient id="i97" gradientUnits="userSpaceOnUse" x1="1393.8" x2="1748.5" y1="0" y2="0"><stop offset="0.000" stop-color="#0011ff"/><stop offset="0.169" stop-color="#0606ff"/><stop offset="0.457" stop-color="#6000ff"/><stop offset="0.840" stop-color="#ff00fa"/><stop offset="0.998" stop-color="#ff00bf"/></linearGradient><linearGradient id="i98" gradientUnits="userSpaceOnUse" x1="1393.8" x2="1748.5" y1="0" y2="0"><stop offset="0.000" stop-color="#0010ff"/><stop offset="0.169" stop-color="#0605ff"/><stop offset="0.457" stop-color="#5e00ff"/><stop offset="0.829" stop-color="#fb00ff"/><stop offset="0.998" stop-color="#ff00c3"/></linearGradient><linearGradient id="i99" gradientUnits="userSpaceOnUse" x1="1393.8" x2="1748.5" y1="0" y2="0"><stop offset="0.000" stop-color="#0010ff"/><stop offset="0.169" stop-color="#0505ff"/><stop offset="0.457" stop-color="#5c00ff"/><stop offset="0.835" stop-color="#f900ff"/><stop offset="0.970" stop-color="#ff00cf"/><stop offset="0.998" stop-color="#ff00c6"/></linearGradient><linearGradient id="i100" gradientUnits="userSpaceOnUse" x1="1393.8" x2="1748.5" y1="0" y2="0"><stop offset="0.000" stop-color="#000fff"/><stop offset="0.175" stop-color="#0604ff"/><stop offset="0.468" stop-color="#5f00ff"/><stop offset="0.863" stop-color="#ff00fc"/><stop offset="0.998" stop-color="#ff00c9"/></linearGradient><linearGradient id="i101" gradientUnits="userSpaceOnUse" x1="1393.8" x2="1748.5" y1="0" y2="0"><stop offset="0.000" stop-color="#000eff"/><stop offset="0.175" stop-color="#0603ff"/><stop offset="0.474" stop-color="#5f00ff"/><stop offset="0.857" stop-color="#fc00ff"/><stop offset="0.998" stop-color="#ff00cc"/></linearGradient><linearGradient id="i102" gradientUnits="userSpaceOnUse" x1="1393.8" x2="1748.5" y1="0" y2="0"><stop offset="0.000" stop-color="#000dff"/><stop offset="0.175" stop-color="#0503ff"/><stop offset="0.474" stop-color="#5d00ff"/><stop offset="0.863" stop-color="#fb00ff"/><stop offset="0.998" stop-color="#ff00cf"/></linearGradient><linearGradient id="i103" gradientUnits="userSpaceOnUse" x1="1393.8" x2="1748.5" y1="0" y2="0"><stop offset="0.000" stop-color="#000dff"/><stop offset="0.180" stop-color="#0602ff"/><stop offset="0.485" stop-color="#6000ff"/><stop offset="0.891" stop-color="#ff00fa"/><stop offset="0.998" stop-color="#ff00d2"/></linearGradient><linearGradient id="i104" gradientUnits="userSpaceOnUse" x1="1393.8" x2="1748.5" y1="0" y2="0"><stop offset="0.000" stop-color="#000cff"/><stop offset="0.180" stop-color="#0602ff"/><stop offset="0.485" stop-color="#5e00ff"/><stop offset="0.880" stop-color="#fb00ff"/><stop offset="0.998" stop-color="#ff00d5"/></linearGradient><linearGradient id="i105" gradientUnits="userSpaceOnUse" x1="1393.8" x2="1748.5" y1="0" y2="0"><stop offset="0.000" stop-color="#000bff"/><stop offset="0.180" stop-color="#0601ff"/><stop offset="0.485" stop-color="#5c00ff"/><stop offset="0.885" stop-color="#f900ff"/><stop offset="0.998" stop-color="#ff00d8"/></linearGradient><linearGradient id="i106" gradientUnits="userSpaceOnUse" x1="1393.8" x2="1748.5" y1="0" y2="0"><stop offset="0.000" stop-color="#000bff"/><stop offset="0.186" stop-color="#0601ff"/><stop offset="0.502" stop-color="#6100ff"/><stop offset="0.914" stop-color="#ff00fc"/><stop offset="0.998" stop-color="#ff00dc"/></linearGradient><linearGradient id="i107" gradientUnits="userSpaceOnUse" x1="1393.8" x2="1748.5" y1="0" y2="0"><stop offset="0.000" stop-color="#000aff"/><stop offset="0.186" stop-color="#0600ff"/><stop offset="0.502" stop-color="#5f00ff"/><stop offset="0.925" stop-color="#ff00fb"/><stop offset="0.998" stop-color="#ff00df"/></linearGradient><linearGradient id="i108" gradientUnits="userSpaceOnUse" x1="1393.8" x2="1748.5" y1="0" y2="0"><stop offset="0.000" stop-color="#000aff"/><stop offset="0.186" stop-color="#0600ff"/><stop offset="0.502" stop-color="#5e00ff"/><stop offset="0.914" stop-color="#fb00ff"/><stop offset="0.998" stop-color="#ff00e2"/></linearGradient><linearGradient id="i109" gradientUnits="userSpaceOnUse" x1="1393.8" x2="1748.5" y1="0" y2="0"><stop offset="0.000" stop-color="#0009ff"/><stop offset="0.186" stop-color="#0500ff"/><stop offset="0.502" stop-color="#5c00ff"/><stop offset="0.919" stop-color="#fa00ff"/><stop offset="0.998" stop-color="#ff00e5"/></linearGradient><linearGradient id="i110" gradientUnits="userSpaceOnUse" x1="1393.8" x2="1748.5" y1="0" y2="0"><stop offset="0.000" stop-color="#0008ff"/><stop offset="0.192" stop-color="#0600ff"/><stop offset="0.513" stop-color="#5e00ff"/><stop offset="0.947" stop-color="#ff00fc"/><stop offset="0.998" stop-color="#ff00e8"/></linearGradient><linearGradient id="i111" gradientUnits="userSpaceOnUse" x1="1393.8" x2="1748.5" y1="0" y2="0"><stop offset="0.000" stop-color="#0008ff"/><stop offset="0.192" stop-color="#0600ff"/><stop offset="0.519" stop-color="#5f00ff"/><stop offset="0.942" stop-color="#fc00ff"/><stop offset="0.998" stop-color="#ff00ec"/></linearGradient><linearGradient id="i112" gradientUnits="userSpaceOnUse" x1="1393.8" x2="1748.5" y1="0" y2="0"><stop offset="0.000" stop-color="#0007ff"/><stop offset="0.192" stop-color="#0500ff"/><stop offset="0.519" stop-color="#5d00ff"/><stop offset="0.947" stop-color="#fb00ff"/><stop offset="0.998" stop-color="#ff00ef"/></linearGradient></defs><g clip-path="url(#cf)"><g clip-path="url(#cl)"><rect x="1259.5" y="225.0" width="649.6" height="5.60" fill="url(#o0)"/><rect x="1259.5" y="230.0" width="649.6" height="5.60" fill="url(#o1)"/><rect x="1259.5" y="235.0" width="649.6" height="5.60" fill="url(#o2)"/><rect x="1259.5" y="240.0" width="649.6" height="5.60" fill="url(#o3)"/><rect x="1259.5" y="245.0" width="649.6" height="5.60" fill="url(#o4)"/><rect x="1259.5" y="250.0" width="649.6" height="5.60" fill="url(#o5)"/><rect x="1259.5" y="255.0" width="649.6" height="5.60" fill="url(#o6)"/><rect x="1259.5" y="260.0" width="649.6" height="5.60" fill="url(#o7)"/><rect x="1259.5" y="265.0" width="649.6" height="5.60" fill="url(#o8)"/><rect x="1259.5" y="270.0" width="649.6" height="5.60" fill="url(#o9)"/><rect x="1259.5" y="275.0" width="649.6" height="5.60" fill="url(#o10)"/><rect x="1259.5" y="280.0" width="649.6" height="5.60" fill="url(#o11)"/><rect x="1259.5" y="285.0" width="649.6" height="5.60" fill="url(#o12)"/><rect x="1259.5" y="290.0" width="649.6" height="5.60" fill="url(#o13)"/><rect x="1259.5" y="295.0" width="649.6" height="5.60" fill="url(#o14)"/><rect x="1259.5" y="300.0" width="649.6" height="5.60" fill="url(#o15)"/><rect x="1259.5" y="305.0" width="649.6" height="5.60" fill="url(#o16)"/><rect x="1259.5" y="310.0" width="649.6" height="5.60" fill="url(#o17)"/><rect x="1259.5" y="315.0" width="649.6" height="5.60" fill="url(#o18)"/><rect x="1259.5" y="320.0" width="649.6" height="5.60" fill="url(#o19)"/><rect x="1259.5" y="325.0" width="649.6" height="5.60" fill="url(#o20)"/><rect x="1259.5" y="330.0" width="649.6" height="5.60" fill="url(#o21)"/><rect x="1259.5" y="335.0" width="649.6" height="5.60" fill="url(#o22)"/><rect x="1259.5" y="340.0" width="649.6" height="5.60" fill="url(#o23)"/><rect x="1259.5" y="345.0" width="649.6" height="5.60" fill="url(#o24)"/><rect x="1259.5" y="350.0" width="649.6" height="5.60" fill="url(#o25)"/><rect x="1259.5" y="355.0" width="649.6" height="5.60" fill="url(#o26)"/><rect x="1259.5" y="360.0" width="649.6" height="5.60" fill="url(#o27)"/><rect x="1259.5" y="365.0" width="649.6" height="5.60" fill="url(#o28)"/><rect x="1259.5" y="370.0" width="649.6" height="5.60" fill="url(#o29)"/><rect x="1259.5" y="375.0" width="649.6" height="5.60" fill="url(#o30)"/><rect x="1259.5" y="380.0" width="649.6" height="5.60" fill="url(#o31)"/><rect x="1259.5" y="385.0" width="649.6" height="5.60" fill="url(#o32)"/><rect x="1259.5" y="390.0" width="649.6" height="5.60" fill="url(#o33)"/><rect x="1259.5" y="395.0" width="649.6" height="5.60" fill="url(#o34)"/><rect x="1259.5" y="400.0" width="649.6" height="5.60" fill="url(#o35)"/><rect x="1259.5" y="405.0" width="649.6" height="5.60" fill="url(#o36)"/><rect x="1259.5" y="410.0" width="649.6" height="5.60" fill="url(#o37)"/><rect x="1259.5" y="415.0" width="649.6" height="5.60" fill="url(#o38)"/><rect x="1259.5" y="420.0" width="649.6" height="5.60" fill="url(#o39)"/><rect x="1259.5" y="425.0" width="649.6" height="5.60" fill="url(#o40)"/><rect x="1259.5" y="430.0" width="649.6" height="5.60" fill="url(#o41)"/><rect x="1259.5" y="435.0" width="649.6" height="5.60" fill="url(#o42)"/><rect x="1259.5" y="440.0" width="649.6" height="5.60" fill="url(#o43)"/><rect x="1259.5" y="445.0" width="649.6" height="5.60" fill="url(#o44)"/><rect x="1259.5" y="450.0" width="649.6" height="5.60" fill="url(#o45)"/><rect x="1259.5" y="455.0" width="649.6" height="5.60" fill="url(#o46)"/><rect x="1259.5" y="460.0" width="649.6" height="5.60" fill="url(#o47)"/><rect x="1259.5" y="465.0" width="649.6" height="5.60" fill="url(#o48)"/><rect x="1259.5" y="470.0" width="649.6" height="5.60" fill="url(#o49)"/><rect x="1259.5" y="475.0" width="649.6" height="5.60" fill="url(#o50)"/><rect x="1259.5" y="480.0" width="649.6" height="5.60" fill="url(#o51)"/><rect x="1259.5" y="485.0" width="649.6" height="5.60" fill="url(#o52)"/><rect x="1259.5" y="490.0" width="649.6" height="5.60" fill="url(#o53)"/><rect x="1259.5" y="495.0" width="649.6" height="5.60" fill="url(#o54)"/><rect x="1259.5" y="500.0" width="649.6" height="5.60" fill="url(#o55)"/><rect x="1259.5" y="505.0" width="649.6" height="5.60" fill="url(#o56)"/><rect x="1259.5" y="510.0" width="649.6" height="5.60" fill="url(#o57)"/><rect x="1259.5" y="515.0" width="649.6" height="5.60" fill="url(#o58)"/><rect x="1259.5" y="520.0" width="649.6" height="5.60" fill="url(#o59)"/><rect x="1259.5" y="525.0" width="649.6" height="5.60" fill="url(#o60)"/><rect x="1259.5" y="530.0" width="649.6" height="5.60" fill="url(#o61)"/><rect x="1259.5" y="535.0" width="649.6" height="5.60" fill="url(#o62)"/><rect x="1259.5" y="540.0" width="649.6" height="5.60" fill="url(#o63)"/><rect x="1259.5" y="545.0" width="649.6" height="5.60" fill="url(#o64)"/><rect x="1259.5" y="550.0" width="649.6" height="5.60" fill="url(#o65)"/><rect x="1259.5" y="555.0" width="649.6" height="5.60" fill="url(#o66)"/><rect x="1259.5" y="560.0" width="649.6" height="5.60" fill="url(#o67)"/><rect x="1259.5" y="565.0" width="649.6" height="5.60" fill="url(#o68)"/><rect x="1259.5" y="570.0" width="649.6" height="5.60" fill="url(#o69)"/><rect x="1259.5" y="575.0" width="649.6" height="5.60" fill="url(#o70)"/><rect x="1259.5" y="580.0" width="649.6" height="5.60" fill="url(#o71)"/><rect x="1259.5" y="585.0" width="649.6" height="5.60" fill="url(#o72)"/><rect x="1259.5" y="590.0" width="649.6" height="5.60" fill="url(#o73)"/><rect x="1259.5" y="595.0" width="649.6" height="5.60" fill="url(#o74)"/><rect x="1259.5" y="600.0" width="649.6" height="5.60" fill="url(#o75)"/><rect x="1259.5" y="605.0" width="649.6" height="5.60" fill="url(#o76)"/><rect x="1259.5" y="610.0" width="649.6" height="5.60" fill="url(#o77)"/><rect x="1259.5" y="615.0" width="649.6" height="5.60" fill="url(#o78)"/><rect x="1259.5" y="620.0" width="649.6" height="5.60" fill="url(#o79)"/><rect x="1259.5" y="625.0" width="649.6" height="5.60" fill="url(#o80)"/><rect x="1259.5" y="630.0" width="649.6" height="5.60" fill="url(#o81)"/><rect x="1259.5" y="635.0" width="649.6" height="5.60" fill="url(#o82)"/><rect x="1259.5" y="640.0" width="649.6" height="5.60" fill="url(#o83)"/><rect x="1259.5" y="645.0" width="649.6" height="5.60" fill="url(#o84)"/><rect x="1259.5" y="650.0" width="649.6" height="5.60" fill="url(#o85)"/><rect x="1259.5" y="655.0" width="649.6" height="5.60" fill="url(#o86)"/><rect x="1259.5" y="660.0" width="649.6" height="5.60" fill="url(#o87)"/><rect x="1259.5" y="665.0" width="649.6" height="5.60" fill="url(#o88)"/><rect x="1259.5" y="670.0" width="649.6" height="5.60" fill="url(#o89)"/><rect x="1259.5" y="675.0" width="649.6" height="5.60" fill="url(#o90)"/><rect x="1259.5" y="680.0" width="649.6" height="5.60" fill="url(#o91)"/><rect x="1259.5" y="685.0" width="649.6" height="5.60" fill="url(#o92)"/><rect x="1259.5" y="690.0" width="649.6" height="5.60" fill="url(#o93)"/><rect x="1259.5" y="695.0" width="649.6" height="5.60" fill="url(#o94)"/><rect x="1259.5" y="700.0" width="649.6" height="5.60" fill="url(#o95)"/><rect x="1259.5" y="705.0" width="649.6" height="5.60" fill="url(#o96)"/><rect x="1259.5" y="710.0" width="649.6" height="5.60" fill="url(#o97)"/></g><g clip-path="url(#ct)"><rect x="1393.8" y="248.7" width="354.6" height="3.60" fill="url(#i0)"/><rect x="1393.8" y="251.7" width="354.6" height="3.60" fill="url(#i1)"/><rect x="1393.8" y="254.7" width="354.6" height="3.60" fill="url(#i2)"/><rect x="1393.8" y="257.7" width="354.6" height="3.60" fill="url(#i3)"/><rect x="1393.8" y="260.7" width="354.6" height="3.60" fill="url(#i4)"/><rect x="1393.8" y="263.7" width="354.6" height="3.60" fill="url(#i5)"/><rect x="1393.8" y="266.7" width="354.6" height="3.60" fill="url(#i6)"/><rect x="1393.8" y="269.7" width="354.6" height="3.60" fill="url(#i7)"/><rect x="1393.8" y="272.7" width="354.6" height="3.60" fill="url(#i8)"/><rect x="1393.8" y="275.7" width="354.6" height="3.60" fill="url(#i9)"/><rect x="1393.8" y="278.7" width="354.6" height="3.60" fill="url(#i10)"/><rect x="1393.8" y="281.7" width="354.6" height="3.60" fill="url(#i11)"/><rect x="1393.8" y="284.7" width="354.6" height="3.60" fill="url(#i12)"/><rect x="1393.8" y="287.7" width="354.6" height="3.60" fill="url(#i13)"/><rect x="1393.8" y="290.7" width="354.6" height="3.60" fill="url(#i14)"/><rect x="1393.8" y="293.7" width="354.6" height="3.60" fill="url(#i15)"/><rect x="1393.8" y="296.7" width="354.6" height="3.60" fill="url(#i16)"/><rect x="1393.8" y="299.7" width="354.6" height="3.60" fill="url(#i17)"/><rect x="1393.8" y="302.7" width="354.6" height="3.60" fill="url(#i18)"/><rect x="1393.8" y="305.7" width="354.6" height="3.60" fill="url(#i19)"/><rect x="1393.8" y="308.7" width="354.6" height="3.60" fill="url(#i20)"/><rect x="1393.8" y="311.7" width="354.6" height="3.60" fill="url(#i21)"/><rect x="1393.8" y="314.7" width="354.6" height="3.60" fill="url(#i22)"/><rect x="1393.8" y="317.7" width="354.6" height="3.60" fill="url(#i23)"/><rect x="1393.8" y="320.7" width="354.6" height="3.60" fill="url(#i24)"/><rect x="1393.8" y="323.7" width="354.6" height="3.60" fill="url(#i25)"/><rect x="1393.8" y="326.7" width="354.6" height="3.60" fill="url(#i26)"/><rect x="1393.8" y="329.7" width="354.6" height="3.60" fill="url(#i27)"/><rect x="1393.8" y="332.7" width="354.6" height="3.60" fill="url(#i28)"/><rect x="1393.8" y="335.7" width="354.6" height="3.60" fill="url(#i29)"/><rect x="1393.8" y="338.7" width="354.6" height="3.60" fill="url(#i30)"/><rect x="1393.8" y="341.7" width="354.6" height="3.60" fill="url(#i31)"/><rect x="1393.8" y="344.7" width="354.6" height="3.60" fill="url(#i32)"/><rect x="1393.8" y="347.7" width="354.6" height="3.60" fill="url(#i33)"/><rect x="1393.8" y="350.7" width="354.6" height="3.60" fill="url(#i34)"/><rect x="1393.8" y="353.7" width="354.6" height="3.60" fill="url(#i35)"/><rect x="1393.8" y="356.7" width="354.6" height="3.60" fill="url(#i36)"/><rect x="1393.8" y="359.7" width="354.6" height="3.60" fill="url(#i37)"/><rect x="1393.8" y="362.7" width="354.6" height="3.60" fill="url(#i38)"/><rect x="1393.8" y="365.7" width="354.6" height="3.60" fill="url(#i39)"/><rect x="1393.8" y="368.7" width="354.6" height="3.60" fill="url(#i40)"/><rect x="1393.8" y="371.7" width="354.6" height="3.60" fill="url(#i41)"/><rect x="1393.8" y="374.7" width="354.6" height="3.60" fill="url(#i42)"/><rect x="1393.8" y="377.7" width="354.6" height="3.60" fill="url(#i43)"/><rect x="1393.8" y="380.7" width="354.6" height="3.60" fill="url(#i44)"/><rect x="1393.8" y="383.7" width="354.6" height="3.60" fill="url(#i45)"/><rect x="1393.8" y="386.7" width="354.6" height="3.60" fill="url(#i46)"/><rect x="1393.8" y="389.7" width="354.6" height="3.60" fill="url(#i47)"/><rect x="1393.8" y="392.7" width="354.6" height="3.60" fill="url(#i48)"/><rect x="1393.8" y="395.7" width="354.6" height="3.60" fill="url(#i49)"/><rect x="1393.8" y="398.7" width="354.6" height="3.60" fill="url(#i50)"/><rect x="1393.8" y="401.7" width="354.6" height="3.60" fill="url(#i51)"/><rect x="1393.8" y="404.7" width="354.6" height="3.60" fill="url(#i52)"/><rect x="1393.8" y="407.7" width="354.6" height="3.60" fill="url(#i53)"/><rect x="1393.8" y="410.7" width="354.6" height="3.60" fill="url(#i54)"/><rect x="1393.8" y="413.7" width="354.6" height="3.60" fill="url(#i55)"/><rect x="1393.8" y="416.7" width="354.6" height="3.60" fill="url(#i56)"/><rect x="1393.8" y="419.7" width="354.6" height="3.60" fill="url(#i57)"/><rect x="1393.8" y="422.7" width="354.6" height="3.60" fill="url(#i58)"/><rect x="1393.8" y="425.7" width="354.6" height="3.60" fill="url(#i59)"/><rect x="1393.8" y="428.7" width="354.6" height="3.60" fill="url(#i60)"/><rect x="1393.8" y="431.7" width="354.6" height="3.60" fill="url(#i61)"/><rect x="1393.8" y="434.7" width="354.6" height="3.60" fill="url(#i62)"/><rect x="1393.8" y="437.7" width="354.6" height="3.60" fill="url(#i63)"/><rect x="1393.8" y="440.7" width="354.6" height="3.60" fill="url(#i64)"/><rect x="1393.8" y="443.7" width="354.6" height="3.60" fill="url(#i65)"/><rect x="1393.8" y="446.7" width="354.6" height="3.60" fill="url(#i66)"/><rect x="1393.8" y="449.7" width="354.6" height="3.60" fill="url(#i67)"/><rect x="1393.8" y="452.7" width="354.6" height="3.60" fill="url(#i68)"/><rect x="1393.8" y="455.7" width="354.6" height="3.60" fill="url(#i69)"/><rect x="1393.8" y="458.7" width="354.6" height="3.60" fill="url(#i70)"/><rect x="1393.8" y="461.7" width="354.6" height="3.60" fill="url(#i71)"/><rect x="1393.8" y="464.7" width="354.6" height="3.60" fill="url(#i72)"/><rect x="1393.8" y="467.7" width="354.6" height="3.60" fill="url(#i73)"/><rect x="1393.8" y="470.7" width="354.6" height="3.60" fill="url(#i74)"/><rect x="1393.8" y="473.7" width="354.6" height="3.60" fill="url(#i75)"/><rect x="1393.8" y="476.7" width="354.6" height="3.60" fill="url(#i76)"/><rect x="1393.8" y="479.7" width="354.6" height="3.60" fill="url(#i77)"/><rect x="1393.8" y="482.7" width="354.6" height="3.60" fill="url(#i78)"/><rect x="1393.8" y="485.7" width="354.6" height="3.60" fill="url(#i79)"/><rect x="1393.8" y="488.7" width="354.6" height="3.60" fill="url(#i80)"/><rect x="1393.8" y="491.7" width="354.6" height="3.60" fill="url(#i81)"/><rect x="1393.8" y="494.7" width="354.6" height="3.60" fill="url(#i82)"/><rect x="1393.8" y="497.7" width="354.6" height="3.60" fill="url(#i83)"/><rect x="1393.8" y="500.7" width="354.6" height="3.60" fill="url(#i84)"/><rect x="1393.8" y="503.7" width="354.6" height="3.60" fill="url(#i85)"/><rect x="1393.8" y="506.7" width="354.6" height="3.60" fill="url(#i86)"/><rect x="1393.8" y="509.7" width="354.6" height="3.60" fill="url(#i87)"/><rect x="1393.8" y="512.7" width="354.6" height="3.60" fill="url(#i88)"/><rect x="1393.8" y="515.7" width="354.6" height="3.60" fill="url(#i89)"/><rect x="1393.8" y="518.7" width="354.6" height="3.60" fill="url(#i90)"/><rect x="1393.8" y="521.7" width="354.6" height="3.60" fill="url(#i91)"/><rect x="1393.8" y="524.7" width="354.6" height="3.60" fill="url(#i92)"/><rect x="1393.8" y="527.7" width="354.6" height="3.60" fill="url(#i93)"/><rect x="1393.8" y="530.7" width="354.6" height="3.60" fill="url(#i94)"/><rect x="1393.8" y="533.7" width="354.6" height="3.60" fill="url(#i95)"/><rect x="1393.8" y="536.7" width="354.6" height="3.60" fill="url(#i96)"/><rect x="1393.8" y="539.7" width="354.6" height="3.60" fill="url(#i97)"/><rect x="1393.8" y="542.7" width="354.6" height="3.60" fill="url(#i98)"/><rect x="1393.8" y="545.7" width="354.6" height="3.60" fill="url(#i99)"/><rect x="1393.8" y="548.7" width="354.6" height="3.60" fill="url(#i100)"/><rect x="1393.8" y="551.7" width="354.6" height="3.60" fill="url(#i101)"/><rect x="1393.8" y="554.7" width="354.6" height="3.60" fill="url(#i102)"/><rect x="1393.8" y="557.7" width="354.6" height="3.60" fill="url(#i103)"/><rect x="1393.8" y="560.7" width="354.6" height="3.60" fill="url(#i104)"/><rect x="1393.8" y="563.7" width="354.6" height="3.60" fill="url(#i105)"/><rect x="1393.8" y="566.7" width="354.6" height="3.60" fill="url(#i106)"/><rect x="1393.8" y="569.7" width="354.6" height="3.60" fill="url(#i107)"/><rect x="1393.8" y="572.7" width="354.6" height="3.60" fill="url(#i108)"/><rect x="1393.8" y="575.7" width="354.6" height="3.60" fill="url(#i109)"/><rect x="1393.8" y="578.7" width="354.6" height="3.60" fill="url(#i110)"/><rect x="1393.8" y="581.7" width="354.6" height="3.60" fill="url(#i111)"/><rect x="1393.8" y="584.7" width="354.6" height="3.60" fill="url(#i112)"/></g></g></svg>
<svg width="1920" height="1146" style="left:0;top:0"><path d="M1259.5 218.5H1909.1V717.9H1259.5z" fill="none" stroke="#a8a8a8" stroke-width="1.6"/><line x1="1253.5" y1="717.9" x2="1259.5" y2="717.9" stroke="#a8a8a8" stroke-width="1.4"/><line x1="1259.5" y1="717.9" x2="1259.5" y2="724" stroke="#a8a8a8" stroke-width="1.4"/><line x1="1253.5" y1="676.3" x2="1259.5" y2="676.3" stroke="#a8a8a8" stroke-width="1.4"/><line x1="1313.6" y1="717.9" x2="1313.6" y2="724" stroke="#a8a8a8" stroke-width="1.4"/><line x1="1253.5" y1="634.7" x2="1259.5" y2="634.7" stroke="#a8a8a8" stroke-width="1.4"/><line x1="1367.8" y1="717.9" x2="1367.8" y2="724" stroke="#a8a8a8" stroke-width="1.4"/><line x1="1253.5" y1="593.1" x2="1259.5" y2="593.1" stroke="#a8a8a8" stroke-width="1.4"/><line x1="1421.9" y1="717.9" x2="1421.9" y2="724" stroke="#a8a8a8" stroke-width="1.4"/><line x1="1253.5" y1="551.4" x2="1259.5" y2="551.4" stroke="#a8a8a8" stroke-width="1.4"/><line x1="1476.0" y1="717.9" x2="1476.0" y2="724" stroke="#a8a8a8" stroke-width="1.4"/><line x1="1253.5" y1="509.8" x2="1259.5" y2="509.8" stroke="#a8a8a8" stroke-width="1.4"/><line x1="1530.2" y1="717.9" x2="1530.2" y2="724" stroke="#a8a8a8" stroke-width="1.4"/><line x1="1253.5" y1="468.2" x2="1259.5" y2="468.2" stroke="#a8a8a8" stroke-width="1.4"/><line x1="1584.3" y1="717.9" x2="1584.3" y2="724" stroke="#a8a8a8" stroke-width="1.4"/><line x1="1253.5" y1="426.6" x2="1259.5" y2="426.6" stroke="#a8a8a8" stroke-width="1.4"/><line x1="1638.4" y1="717.9" x2="1638.4" y2="724" stroke="#a8a8a8" stroke-width="1.4"/><line x1="1253.5" y1="385.0" x2="1259.5" y2="385.0" stroke="#a8a8a8" stroke-width="1.4"/><line x1="1692.6" y1="717.9" x2="1692.6" y2="724" stroke="#a8a8a8" stroke-width="1.4"/><line x1="1253.5" y1="343.4" x2="1259.5" y2="343.4" stroke="#a8a8a8" stroke-width="1.4"/><line x1="1746.7" y1="717.9" x2="1746.7" y2="724" stroke="#a8a8a8" stroke-width="1.4"/><line x1="1253.5" y1="301.8" x2="1259.5" y2="301.8" stroke="#a8a8a8" stroke-width="1.4"/><line x1="1800.8" y1="717.9" x2="1800.8" y2="724" stroke="#a8a8a8" stroke-width="1.4"/><line x1="1253.5" y1="260.1" x2="1259.5" y2="260.1" stroke="#a8a8a8" stroke-width="1.4"/><line x1="1855.0" y1="717.9" x2="1855.0" y2="724" stroke="#a8a8a8" stroke-width="1.4"/><rect x="1386.5" y="241.2" width="13.5" height="13.5" fill="none" stroke="#fff" stroke-width="1.6"/><rect x="1399.0" y="253.9" width="13.5" height="13.5" fill="none" stroke="#fff" stroke-width="1.6"/><rect x="1411.8" y="266.6" width="13.5" height="13.5" fill="none" stroke="#fff" stroke-width="1.6"/><rect x="1426.7" y="281.4" width="13.5" height="13.5" fill="none" stroke="#fff" stroke-width="1.6"/><rect x="1444.7" y="297.8" width="13.5" height="13.5" fill="none" stroke="#fff" stroke-width="1.6"/><rect x="1472.2" y="249.6" width="13.5" height="13.5" fill="none" stroke="#fff" stroke-width="1.6"/><rect x="1472.2" y="261.2" width="13.5" height="13.5" fill="none" stroke="#fff" stroke-width="1.6"/><rect x="1470.8" y="274.2" width="13.5" height="13.5" fill="none" stroke="#fff" stroke-width="1.6"/><rect x="1470.2" y="288.2" width="13.5" height="13.5" fill="none" stroke="#fff" stroke-width="1.6"/><rect x="1469.2" y="303.2" width="13.5" height="13.5" fill="none" stroke="#fff" stroke-width="1.6"/><rect x="1401.5" y="331.1" width="13.5" height="13.5" fill="none" stroke="#fff" stroke-width="1.6"/><rect x="1414.7" y="328.2" width="13.5" height="13.5" fill="none" stroke="#fff" stroke-width="1.6"/><rect x="1426.7" y="326.6" width="13.5" height="13.5" fill="none" stroke="#fff" stroke-width="1.6"/><rect x="1440.7" y="323.9" width="13.5" height="13.5" fill="none" stroke="#fff" stroke-width="1.6"/><rect x="1453.0" y="322.2" width="13.5" height="13.5" fill="none" stroke="#fff" stroke-width="1.6"/><rect x="1462.7" y="350.6" width="13.5" height="13.5" fill="none" stroke="#fff" stroke-width="1.6"/><rect x="1459.8" y="387.6" width="13.5" height="13.5" fill="none" stroke="#fff" stroke-width="1.6"/><rect x="1455.5" y="433.4" width="13.5" height="13.5" fill="none" stroke="#fff" stroke-width="1.6"/><rect x="1450.2" y="491.1" width="13.5" height="13.5" fill="none" stroke="#fff" stroke-width="1.6"/><rect x="1442.2" y="578.1" width="13.5" height="13.5" fill="none" stroke="#fff" stroke-width="1.6"/><rect x="1515.0" y="311.6" width="13.5" height="13.5" fill="none" stroke="#fff" stroke-width="1.6"/><rect x="1568.8" y="302.2" width="13.5" height="13.5" fill="none" stroke="#fff" stroke-width="1.6"/><rect x="1618.8" y="295.2" width="13.5" height="13.5" fill="none" stroke="#fff" stroke-width="1.6"/><rect x="1673.8" y="285.4" width="13.5" height="13.5" fill="none" stroke="#fff" stroke-width="1.6"/><rect x="1739.2" y="274.6" width="13.5" height="13.5" fill="none" stroke="#fff" stroke-width="1.6"/><rect x="1483.3" y="336.6" width="13.5" height="13.5" fill="none" stroke="#fff" stroke-width="1.6"/><rect x="1503.0" y="356.2" width="13.5" height="13.5" fill="none" stroke="#fff" stroke-width="1.6"/><rect x="1522.2" y="376.6" width="13.5" height="13.5" fill="none" stroke="#fff" stroke-width="1.6"/><rect x="1548.3" y="402.8" width="13.5" height="13.5" fill="none" stroke="#fff" stroke-width="1.6"/><rect x="1581.5" y="434.9" width="13.5" height="13.5" fill="none" stroke="#fff" stroke-width="1.6"/><rect x="1465.5" y="320.3" width="13.5" height="13.5" fill="none" stroke="#111" stroke-width="2"/><circle cx="1386.1" cy="245.5" r="4.6" fill="#00c000" stroke="#111" stroke-width="1.3"/><circle cx="1400.5" cy="257.0" r="4.6" fill="#50b050" stroke="#111" stroke-width="1.3"/><circle cx="1413.8" cy="269.0" r="4.6" fill="#70a870" stroke="#111" stroke-width="1.3"/><circle cx="1430.6" cy="285.3" r="4.6" fill="#8ab08a" stroke="#111" stroke-width="1.3"/><circle cx="1448.6" cy="303.3" r="4.6" fill="#a0b8a0" stroke="#111" stroke-width="1.3"/><circle cx="1478.1" cy="253.9" r="4.6" fill="#c8c000" stroke="#111" stroke-width="1.3"/><circle cx="1478.1" cy="265.4" r="4.6" fill="#b8b860" stroke="#111" stroke-width="1.3"/><circle cx="1474.7" cy="275.7" r="4.6" fill="#c0bc78" stroke="#111" stroke-width="1.3"/><circle cx="1474.7" cy="289.9" r="4.6" fill="#c4c090" stroke="#111" stroke-width="1.3"/><circle cx="1474.7" cy="306.5" r="4.6" fill="#c0c0a8" stroke="#111" stroke-width="1.3"/><circle cx="1404.6" cy="337.9" r="4.6" fill="#10c0c8" stroke="#111" stroke-width="1.3"/><circle cx="1418.5" cy="335.5" r="4.6" fill="#50b0b8" stroke="#111" stroke-width="1.3"/><circle cx="1430.6" cy="332.6" r="4.6" fill="#70b8b8" stroke="#111" stroke-width="1.3"/><circle cx="1445.0" cy="330.9" r="4.6" fill="#88b0b0" stroke="#111" stroke-width="1.3"/><circle cx="1457.0" cy="328.3" r="4.6" fill="#a0b0b0" stroke="#111" stroke-width="1.3"/><circle cx="1469.9" cy="359.0" r="4.6" fill="#a0a0c0" stroke="#111" stroke-width="1.3"/><circle cx="1465.4" cy="400.3" r="4.6" fill="#8888c8" stroke="#111" stroke-width="1.3"/><circle cx="1461.5" cy="451.0" r="4.6" fill="#7070c8" stroke="#111" stroke-width="1.3"/><circle cx="1455.4" cy="511.5" r="4.6" fill="#5050c0" stroke="#111" stroke-width="1.3"/><circle cx="1450.4" cy="590.9" r="4.6" fill="#0808c0" stroke="#111" stroke-width="1.3"/><circle cx="1524.6" cy="316.2" r="4.6" fill="#c09090" stroke="#111" stroke-width="1.3"/><circle cx="1582.8" cy="304.8" r="4.6" fill="#c07878" stroke="#111" stroke-width="1.3"/><circle cx="1636.9" cy="295.0" r="4.6" fill="#c06060" stroke="#111" stroke-width="1.3"/><circle cx="1690.8" cy="288.5" r="4.6" fill="#c84848" stroke="#111" stroke-width="1.3"/><circle cx="1743.8" cy="280.2" r="4.6" fill="#c80000" stroke="#111" stroke-width="1.3"/><circle cx="1489.7" cy="345.0" r="4.6" fill="#c0a8c0" stroke="#111" stroke-width="1.3"/><circle cx="1509.3" cy="363.0" r="4.6" fill="#c098c0" stroke="#111" stroke-width="1.3"/><circle cx="1532.0" cy="383.8" r="4.6" fill="#c080c0" stroke="#111" stroke-width="1.3"/><circle cx="1558.2" cy="408.2" r="4.6" fill="#c060c0" stroke="#111" stroke-width="1.3"/><circle cx="1588.3" cy="441.6" r="4.6" fill="#b000b0" stroke="#111" stroke-width="1.3"/><circle cx="1472.3" cy="327.1" r="4.4" fill="#fff" stroke="#111" stroke-width="1.3"/><rect x="1684" y="560.5" width="221" height="150.5" fill="#2a2a2a"/><defs><linearGradient id="ins1" x1="0" y1="0" x2="1" y2="1"><stop offset="0" stop-color="#5e9800"/><stop offset="0.5" stop-color="#909400"/><stop offset="1" stop-color="#8a6a00"/></linearGradient><linearGradient id="ins2" x1="0" y1="0" x2="1" y2="1"><stop offset="0" stop-color="#a8ff00"/><stop offset="0.5" stop-color="#ffff10"/><stop offset="1" stop-color="#ffb000"/></linearGradient></defs><rect x="1688" y="564" width="213" height="144" fill="url(#ins1)"/><path d="M1688 578.9L1901 693.1V708H1688z" fill="url(#ins2)"/><rect x="1687.5" y="563.5" width="214" height="145" fill="none" stroke="#9a9a9a" stroke-width="1.4"/><rect x="1787.5" y="628.8" width="13.5" height="13.5" fill="none" stroke="#fff" stroke-width="1.6"/><circle cx="1808" cy="610.8" r="4.6" fill="#c8c000" stroke="#111" stroke-width="1.3"/><path d="M1714.5 708a5 5 0 0 1 10 0" fill="none" stroke="#111" stroke-width="1.3"/></svg>
<div class="t" style="left:1523.0px;top:202.1px;font-size:13.95px;transform:scaleX(1.047);color:#d8d8d8;">CIE 1976 u'v'</div>
<div class="t" style="left:1244.5px;top:711.2px;font-size:14.53px;transform:scaleX(0.990);color:#d8d8d8;">0</div>
<div class="t" style="left:1255.5px;top:727.5px;font-size:14.53px;transform:scaleX(0.990);color:#d8d8d8;">0</div>
<div class="t" style="left:1223.5px;top:669.6px;font-size:14.53px;transform:scaleX(1.025);color:#d8d8d8;">0.05</div>
<div class="t" style="left:1299.1px;top:727.5px;font-size:14.53px;transform:scaleX(1.025);color:#d8d8d8;">0.05</div>
<div class="t" style="left:1233.5px;top:628.0px;font-size:14.53px;transform:scaleX(0.940);color:#d8d8d8;">0.1</div>
<div class="t" style="left:1358.3px;top:727.5px;font-size:14.53px;transform:scaleX(0.940);color:#d8d8d8;">0.1</div>
<div class="t" style="left:1223.5px;top:586.3px;font-size:14.53px;transform:scaleX(1.025);color:#d8d8d8;">0.15</div>
<div class="t" style="left:1407.4px;top:727.5px;font-size:14.53px;transform:scaleX(1.025);color:#d8d8d8;">0.15</div>
<div class="t" style="left:1233.5px;top:544.7px;font-size:14.53px;transform:scaleX(0.940);color:#d8d8d8;">0.2</div>
<div class="t" style="left:1466.5px;top:727.5px;font-size:14.53px;transform:scaleX(0.940);color:#d8d8d8;">0.2</div>
<div class="t" style="left:1223.5px;top:503.1px;font-size:14.53px;transform:scaleX(1.025);color:#d8d8d8;">0.25</div>
<div class="t" style="left:1515.7px;top:727.5px;font-size:14.53px;transform:scaleX(1.025);color:#d8d8d8;">0.25</div>
<div class="t" style="left:1233.5px;top:461.5px;font-size:14.53px;transform:scaleX(0.940);color:#d8d8d8;">0.3</div>
<div class="t" style="left:1574.8px;top:727.5px;font-size:14.53px;transform:scaleX(0.940);color:#d8d8d8;">0.3</div>
<div class="t" style="left:1223.5px;top:419.9px;font-size:14.53px;transform:scaleX(1.025);color:#d8d8d8;">0.35</div>
<div class="t" style="left:1623.9px;top:727.5px;font-size:14.53px;transform:scaleX(1.025);color:#d8d8d8;">0.35</div>
<div class="t" style="left:1233.5px;top:378.3px;font-size:14.53px;transform:scaleX(0.940);color:#d8d8d8;">0.4</div>
<div class="t" style="left:1683.1px;top:727.5px;font-size:14.53px;transform:scaleX(0.940);color:#d8d8d8;">0.4</div>
<div class="t" style="left:1223.5px;top:336.7px;font-size:14.53px;transform:scaleX(1.025);color:#d8d8d8;">0.45</div>
<div class="t" style="left:1732.2px;top:727.5px;font-size:14.53px;transform:scaleX(1.025);color:#d8d8d8;">0.45</div>
<div class="t" style="left:1233.5px;top:295.0px;font-size:14.53px;transform:scaleX(0.940);color:#d8d8d8;">0.5</div>
<div class="t" style="left:1791.3px;top:727.5px;font-size:14.53px;transform:scaleX(0.940);color:#d8d8d8;">0.5</div>
<div class="t" style="left:1223.5px;top:253.4px;font-size:14.53px;transform:scaleX(1.025);color:#d8d8d8;">0.55</div>
<div class="t" style="left:1840.5px;top:727.5px;font-size:14.53px;transform:scaleX(1.025);color:#d8d8d8;">0.55</div>
<div class="t" style="left:277.3px;top:762.7px;font-size:27.91px;transform:scaleX(1.063);color:#f2f2f2;">Avg dE2000: 4.59</div>
<div class="t" style="left:273.0px;top:804.0px;font-size:27.91px;transform:scaleX(1.080);color:#f2f2f2;">Max dE2000: 5.77</div>
<div class="t" style="left:240.9px;top:852.7px;font-size:27.91px;transform:scaleX(1.082);color:#f2f2f2;">Current Reading</div>
<div class="t" style="left:241.0px;top:890.5px;font-size:25.44px;transform:scaleX(0.984);color:#f2f2f2;">x: 0.4226</div>
<div class="t" style="left:398.6px;top:890.5px;font-size:25.44px;transform:scaleX(1.006);color:#f2f2f2;">y: 0.514</div>
<div class="t" style="left:241.0px;top:931.5px;font-size:25.44px;transform:scaleX(0.984);color:#f2f2f2;">fL: 108.45</div>
<div class="t" style="left:241.0px;top:966.6px;font-size:25.44px;transform:scaleX(1.035);color:#f2f2f2;">cd/m²: 371.58</div>
<svg width="1920" height="1146" style="left:0;top:0"><defs><linearGradient id="rb" x1="0" y1="0" x2="0" y2="1"><stop offset="0" stop-color="#ff5a5a"/><stop offset="1" stop-color="#f04444"/></linearGradient><linearGradient id="gb" x1="0" y1="0" x2="0" y2="1"><stop offset="0" stop-color="#52aa52"/><stop offset="1" stop-color="#3e9a3e"/></linearGradient></defs><rect x="587.8" y="793.0" width="254.0" height="183.5" fill="#232323"/><line x1="587.8" y1="838.9" x2="841.8" y2="838.9" stroke="#a8a8a8" stroke-width="1.4"/><line x1="587.8" y1="884.8" x2="841.8" y2="884.8" stroke="#a8a8a8" stroke-width="1.4"/><line x1="587.8" y1="930.6" x2="841.8" y2="930.6" stroke="#a8a8a8" stroke-width="1.4"/><rect x="612.6" y="940.2" width="66.2" height="36.3" fill="url(#rb)" stroke="#000" stroke-width="1.5"/><rect x="680.4" y="935.2" width="66.5" height="41.3" fill="url(#gb)" stroke="#000" stroke-width="1.5"/><path d="M587.8 793.0H841.8V976.5H587.8z" fill="none" stroke="#a8a8a8" stroke-width="1.6"/><line x1="582.8" y1="793.0" x2="587.8" y2="793.0" stroke="#a8a8a8" stroke-width="1.4"/><line x1="582.8" y1="838.9" x2="587.8" y2="838.9" stroke="#a8a8a8" stroke-width="1.4"/><line x1="582.8" y1="884.8" x2="587.8" y2="884.8" stroke="#a8a8a8" stroke-width="1.4"/><line x1="582.8" y1="930.6" x2="587.8" y2="930.6" stroke="#a8a8a8" stroke-width="1.4"/><line x1="582.8" y1="976.5" x2="587.8" y2="976.5" stroke="#a8a8a8" stroke-width="1.4"/><line x1="587.8" y1="976.5" x2="587.8" y2="982.5" stroke="#a8a8a8" stroke-width="1.4"/><line x1="841.8" y1="976.5" x2="841.8" y2="982.5" stroke="#a8a8a8" stroke-width="1.4"/></svg>
<div class="t" style="left:657.0px;top:776.2px;font-size:13.95px;transform:scaleX(0.994);color:#d8d8d8;">RGB Balance</div>
<div class="t" style="left:558.0px;top:786.3px;font-size:14.53px;transform:scaleX(1.036);color:#d8d8d8;">110</div>
<div class="t" style="left:558.0px;top:832.2px;font-size:14.53px;transform:scaleX(0.990);color:#d8d8d8;">105</div>
<div class="t" style="left:558.0px;top:878.0px;font-size:14.53px;transform:scaleX(0.990);color:#d8d8d8;">100</div>
<div class="t" style="left:566.0px;top:923.9px;font-size:14.53px;transform:scaleX(0.990);color:#d8d8d8;">95</div>
<div class="t" style="left:566.0px;top:969.8px;font-size:14.53px;transform:scaleX(0.990);color:#d8d8d8;">90</div>
<div class="t" style="left:696.5px;top:981.2px;font-size:13.95px;transform:scaleX(1.009);color:#d8d8d8;">100%</div>
<div class="b" style="left:863px;top:760.5px;width:1049px;height:241.5px;border:1px dotted #b0b0b0"></div>
<div class="b" style="left:864.0px;top:761.5px;width:737.0px;height:14.5px;background:#2e2e2e"></div>
<div class="b" style="left:864.0px;top:776.0px;width:737.0px;height:14.0px;background:#151515"></div>
<div class="b" style="left:864.0px;top:790.0px;width:737.0px;height:26.1px;background:#404040"></div>
<div class="b" style="left:864.0px;top:816.1px;width:737.0px;height:26.1px;background:#7f7f7f"></div>
<div class="b" style="left:864.0px;top:842.2px;width:737.0px;height:26.1px;background:#404040"></div>
<div class="b" style="left:864.0px;top:868.3px;width:737.0px;height:26.1px;background:#7f7f7f"></div>
<div class="b" style="left:864.0px;top:894.4px;width:737.0px;height:26.1px;background:#404040"></div>
<div class="b" style="left:864.0px;top:920.5px;width:737.0px;height:26.1px;background:#7f7f7f"></div>
<div class="b" style="left:864.0px;top:946.6px;width:737.0px;height:26.1px;background:#404040"></div>
<div class="b" style="left:864.0px;top:972.7px;width:737.0px;height:26.1px;background:#7f7f7f"></div>
<div class="b" style="left:1600.0px;top:761.5px;width:2.0px;height:239.5px;background:#1a1a1a"></div>
<div class="t" style="left:1095.2px;top:769.9px;font-size:14.97px;transform:scaleX(1.345);color:#f0f0f0;">20%</div>
<div class="t" style="left:1203.4px;top:769.9px;font-size:14.97px;transform:scaleX(1.345);color:#f0f0f0;">40%</div>
<div class="t" style="left:1311.6px;top:769.9px;font-size:14.97px;transform:scaleX(1.345);color:#f0f0f0;">60%</div>
<div class="t" style="left:1419.8px;top:769.9px;font-size:14.97px;transform:scaleX(1.345);color:#f0f0f0;">80%</div>
<div class="t" style="left:1523.0px;top:769.9px;font-size:14.97px;transform:scaleX(1.306);color:#f0f0f0;">100%</div>
<div class="t" style="left:882.0px;top:795.9px;font-size:17.01px;transform:scaleX(1.304);color:#f4f4f4;font-weight:bold;">x: CIE31</div>
<div class="t" style="left:1067.4px;top:795.9px;font-size:17.01px;transform:scaleX(1.313);color:#f0f0f0;">0.3383</div>
<div class="t" style="left:1175.6px;top:795.9px;font-size:17.01px;transform:scaleX(1.313);color:#f0f0f0;">0.3591</div>
<div class="t" style="left:1283.8px;top:795.9px;font-size:17.01px;transform:scaleX(1.313);color:#f0f0f0;">0.3813</div>
<div class="t" style="left:1391.9px;top:795.9px;font-size:17.01px;transform:scaleX(1.313);color:#f0f0f0;">0.4018</div>
<div class="t" style="left:1500.0px;top:795.9px;font-size:17.01px;transform:scaleX(1.313);color:#f0f0f0;">0.4226</div>
<div class="t" style="left:882.0px;top:822.0px;font-size:17.01px;transform:scaleX(1.304);color:#f4f4f4;font-weight:bold;">y: CIE31</div>
<div class="t" style="left:1067.4px;top:822.0px;font-size:17.01px;transform:scaleX(1.313);color:#f0f0f0;">0.3714</div>
<div class="t" style="left:1175.6px;top:822.0px;font-size:17.01px;transform:scaleX(1.313);color:#f0f0f0;">0.4095</div>
<div class="t" style="left:1283.8px;top:822.0px;font-size:17.01px;transform:scaleX(1.313);color:#f0f0f0;">0.4474</div>
<div class="t" style="left:1391.9px;top:822.0px;font-size:17.01px;transform:scaleX(1.313);color:#f0f0f0;">0.4789</div>
<div class="t" style="left:1500.0px;top:822.0px;font-size:17.01px;transform:scaleX(1.313);color:#f0f0f0;">0.5140</div>
<div class="t" style="left:882.0px;top:848.1px;font-size:17.01px;transform:scaleX(1.058);color:#f4f4f4;font-weight:bold;">Y</div>
<div class="t" style="left:1067.4px;top:848.1px;font-size:17.01px;transform:scaleX(1.328);color:#f0f0f0;">392.8873</div>
<div class="t" style="left:1175.6px;top:848.1px;font-size:17.01px;transform:scaleX(1.328);color:#f0f0f0;">386.2845</div>
<div class="t" style="left:1283.8px;top:848.1px;font-size:17.01px;transform:scaleX(1.328);color:#f0f0f0;">381.6975</div>
<div class="t" style="left:1391.9px;top:848.1px;font-size:17.01px;transform:scaleX(1.328);color:#f0f0f0;">374.7689</div>
<div class="t" style="left:1500.0px;top:848.1px;font-size:17.01px;transform:scaleX(1.328);color:#f0f0f0;">371.5753</div>
<div class="t" style="left:882.0px;top:874.2px;font-size:17.01px;transform:scaleX(1.341);color:#f4f4f4;font-weight:bold;">Target x:CIE31</div>
<div class="t" style="left:1067.4px;top:874.2px;font-size:17.01px;transform:scaleX(1.313);color:#f0f0f0;">0.3344</div>
<div class="t" style="left:1175.6px;top:874.2px;font-size:17.01px;transform:scaleX(1.313);color:#f0f0f0;">0.3564</div>
<div class="t" style="left:1283.8px;top:874.2px;font-size:17.01px;transform:scaleX(1.313);color:#f0f0f0;">0.3773</div>
<div class="t" style="left:1391.9px;top:874.2px;font-size:17.01px;transform:scaleX(1.313);color:#f0f0f0;">0.3969</div>
<div class="t" style="left:1500.0px;top:874.2px;font-size:17.01px;transform:scaleX(1.313);color:#f0f0f0;">0.4193</div>
<div class="t" style="left:882.0px;top:900.3px;font-size:17.01px;transform:scaleX(1.341);color:#f4f4f4;font-weight:bold;">Target y:CIE31</div>
<div class="t" style="left:1067.4px;top:900.3px;font-size:17.01px;transform:scaleX(1.313);color:#f0f0f0;">0.3648</div>
<div class="t" style="left:1175.6px;top:900.3px;font-size:17.01px;transform:scaleX(1.313);color:#f0f0f0;">0.4013</div>
<div class="t" style="left:1283.8px;top:900.3px;font-size:17.01px;transform:scaleX(1.313);color:#f0f0f0;">0.4358</div>
<div class="t" style="left:1391.9px;top:900.3px;font-size:17.01px;transform:scaleX(1.313);color:#f0f0f0;">0.4682</div>
<div class="t" style="left:1500.0px;top:900.3px;font-size:17.01px;transform:scaleX(1.313);color:#f0f0f0;">0.5053</div>
<div class="t" style="left:882.0px;top:926.4px;font-size:17.01px;transform:scaleX(1.377);color:#f4f4f4;font-weight:bold;">Target Y</div>
<div class="t" style="left:1067.4px;top:926.4px;font-size:17.01px;transform:scaleX(1.328);color:#f0f0f0;">473.2505</div>
<div class="t" style="left:1175.6px;top:926.4px;font-size:17.01px;transform:scaleX(1.328);color:#f0f0f0;">464.9435</div>
<div class="t" style="left:1283.8px;top:926.4px;font-size:17.01px;transform:scaleX(1.328);color:#f0f0f0;">458.5608</div>
<div class="t" style="left:1391.9px;top:926.4px;font-size:17.01px;transform:scaleX(1.328);color:#f0f0f0;">453.5517</div>
<div class="t" style="left:1500.0px;top:926.4px;font-size:17.01px;transform:scaleX(1.328);color:#f0f0f0;">448.7090</div>
<div class="t" style="left:882.0px;top:952.5px;font-size:17.01px;transform:scaleX(1.361);color:#f4f4f4;font-weight:bold;">ΔE 2000</div>
<div class="t" style="left:1067.4px;top:952.5px;font-size:17.01px;transform:scaleX(1.313);color:#f0f0f0;">4.2372</div>
<div class="t" style="left:1175.6px;top:952.5px;font-size:17.01px;transform:scaleX(1.313);color:#f0f0f0;">4.1716</div>
<div class="t" style="left:1283.8px;top:952.5px;font-size:17.01px;transform:scaleX(1.313);color:#f0f0f0;">4.1338</div>
<div class="t" style="left:1391.9px;top:952.5px;font-size:17.01px;transform:scaleX(1.313);color:#f0f0f0;">4.2375</div>
<div class="t" style="left:1500.0px;top:952.5px;font-size:17.01px;transform:scaleX(1.313);color:#f0f0f0;">4.1794</div>
<div class="t" style="left:882.0px;top:978.6px;font-size:17.01px;transform:scaleX(1.315);color:#f4f4f4;font-weight:bold;">ΔE ITP</div>
<div class="t" style="left:1067.4px;top:978.6px;font-size:17.01px;transform:scaleX(1.302);color:#f0f0f0;">14.8028</div>
<div class="t" style="left:1175.6px;top:978.6px;font-size:17.01px;transform:scaleX(1.302);color:#f0f0f0;">14.8974</div>
<div class="t" style="left:1283.8px;top:978.6px;font-size:17.01px;transform:scaleX(1.302);color:#f0f0f0;">15.3958</div>
<div class="t" style="left:1391.9px;top:978.6px;font-size:17.01px;transform:scaleX(1.302);color:#f0f0f0;">16.0603</div>
<div class="t" style="left:1500.0px;top:978.6px;font-size:17.01px;transform:scaleX(1.302);color:#f0f0f0;">15.8055</div>
<div class="b" style="left:225.0px;top:1075.0px;width:1695.0px;height:71.0px;background:#313131"></div>
<div class="b" style="left:226.0px;top:1076.0px;width:51.0px;height:70.0px;background:linear-gradient(#9a9a9a,#5a5a5a);border-radius:4px"></div>
<svg width="30" height="24" style="left:237px;top:1076px"><defs><linearGradient id="uag" x1="0" y1="0" x2="0" y2="1"><stop offset="0" stop-color="#666"/><stop offset="1" stop-color="#a0a0a0"/></linearGradient></defs><circle cx="14.5" cy="10.9" r="8.5" fill="url(#uag)"/><path d="M10 12.6h9l-4.5-5.3z" fill="#222"/></svg>
<div class="b" style="left:232.0px;top:1105.5px;width:39.0px;height:33.8px;background:#ffff00;border-radius:3px;box-shadow:inset 2px 2px 2px #d8d800"></div>
<div class="b" style="left:283.2px;top:1076.0px;width:169.2px;height:69.0px;background:linear-gradient(#aaaaaa,#858585 55%,#5c5c5c);border-radius:4px"></div>
<div class="b" style="left:289.0px;top:1082.0px;width:158.0px;height:40.6px;background:#c1c1a3;border-radius:4px;box-shadow:inset 2px 2px 1px rgba(60,60,20,0.45)"></div>
<div class="t" style="left:356.8px;top:1130.2px;font-size:11.63px;transform:scaleX(0.945);color:#333;font-weight:bold;">20%</div>
<div class="b" style="left:453.8px;top:1076.0px;width:168.7px;height:69.0px;background:linear-gradient(#aaaaaa,#858585 55%,#5c5c5c);border-radius:4px"></div>
<div class="b" style="left:459.6px;top:1082.0px;width:157.5px;height:40.6px;background:#c0bf85;border-radius:4px;box-shadow:inset 2px 2px 1px rgba(60,60,20,0.45)"></div>
<div class="t" style="left:527.1px;top:1130.2px;font-size:11.63px;transform:scaleX(0.945);color:#333;font-weight:bold;">40%</div>
<div class="b" style="left:624.0px;top:1076.0px;width:169.5px;height:69.0px;background:linear-gradient(#aaaaaa,#858585 55%,#5c5c5c);border-radius:4px"></div>
<div class="b" style="left:629.8px;top:1082.0px;width:158.3px;height:40.6px;background:#c1c06c;border-radius:4px;box-shadow:inset 2px 2px 1px rgba(60,60,20,0.45)"></div>
<div class="t" style="left:697.8px;top:1130.2px;font-size:11.63px;transform:scaleX(0.945);color:#333;font-weight:bold;">60%</div>
<div class="b" style="left:795.0px;top:1076.0px;width:170.0px;height:69.0px;background:linear-gradient(#aaaaaa,#858585 55%,#5c5c5c);border-radius:4px"></div>
<div class="b" style="left:800.8px;top:1082.0px;width:158.8px;height:40.6px;background:#c0bf4a;border-radius:4px;box-shadow:inset 2px 2px 1px rgba(60,60,20,0.45)"></div>
<div class="t" style="left:869.0px;top:1130.2px;font-size:11.63px;transform:scaleX(0.945);color:#333;font-weight:bold;">80%</div>
<div class="b" style="left:967.5px;top:1076.0px;width:168.5px;height:70.0px;background:#1c1c1c;border-radius:4px"></div>
<div class="b" style="left:974.5px;top:1082.0px;width:154.5px;height:40.6px;background:#c4c200;border:1px solid #666;border-radius:4px"></div>
<div class="t" style="left:1037.2px;top:1130.2px;font-size:11.63px;transform:scaleX(0.975);color:#f4f4f4;font-weight:bold;">100%</div>
<div class="b" style="left:1136.0px;top:1076.0px;width:420.0px;height:70.0px;background:linear-gradient(#4a4a4a,#262626)"></div>
<div class="b" style="left:1557.0px;top:1076.0px;width:54.0px;height:21.0px;background:linear-gradient(#a8a8a8,#7a7a7a);border-radius:4px 4px 0 0"></div>
<div class="b" style="left:1557.0px;top:1098.0px;width:54.0px;height:48.0px;background:linear-gradient(#a8a8a8,#6a6a6a)"></div>
<svg width="60" height="75" style="left:1556px;top:1073px"><circle cx="27" cy="13" r="7" fill="#888"/><path d="M22 15h10l-5-5z" fill="#222"/><rect x="11.5" y="31.7" width="33" height="33.7" rx="4" fill="#a0a0a0" stroke="#1a1a1a" stroke-width="3"/><rect x="20" y="40.4" width="15.4" height="15.4" fill="#000"/></svg>
<div class="b" style="left:1612.0px;top:1076.0px;width:50.0px;height:35.0px;background:linear-gradient(#b0b0b0,#888);border-radius:4px 4px 0 0"></div>
<div class="b" style="left:1663.0px;top:1076.0px;width:50.0px;height:35.0px;background:linear-gradient(#b0b0b0,#888);border-radius:4px 4px 0 0"></div>
<div class="b" style="left:1714.0px;top:1076.0px;width:50.0px;height:35.0px;background:linear-gradient(#b0b0b0,#888);border-radius:4px 4px 0 0"></div>
<div class="b" style="left:1765.0px;top:1076.0px;width:49.0px;height:35.0px;background:linear-gradient(#b0b0b0,#888);border-radius:4px 4px 0 0"></div>
<div class="b" style="left:1815.0px;top:1076.0px;width:50.0px;height:35.0px;background:linear-gradient(#b0b0b0,#888);border-radius:4px 4px 0 0"></div>
<div class="b" style="left:1866.0px;top:1076.0px;width:50.0px;height:35.0px;background:linear-gradient(#b0b0b0,#888);border-radius:4px 4px 0 0"></div>
<div class="b" style="left:1612.0px;top:1112.0px;width:152.0px;height:34.0px;background:linear-gradient(#b0b0b0,#7a7a7a)"></div>
<div class="b" style="left:1765.0px;top:1112.0px;width:152.0px;height:34.0px;background:linear-gradient(#b0b0b0,#7a7a7a)"></div>
<svg width="310" height="75" style="left:1610px;top:1073px"><circle cx="27" cy="20" r="9" fill="#9a9a9a"/><circle cx="78" cy="20" r="9" fill="#9a9a9a"/><circle cx="129" cy="20" r="9" fill="#9a9a9a"/><circle cx="180" cy="20" r="9" fill="#9a9a9a"/><circle cx="230" cy="20" r="9" fill="#9a9a9a"/><circle cx="281" cy="20" r="9" fill="#9a9a9a"/><circle cx="28" cy="57" r="9" fill="#9a9a9a"/><circle cx="282" cy="57" r="9" fill="#9a9a9a"/><path d="M278 53l4 4-4 4M283 53l4 4-4 4" stroke="#333" stroke-width="1.5" fill="none"/></svg>
<div class="t" style="left:1677.0px;top:1115.6px;font-size:25.44px;transform:scaleX(0.990);color:#2a2a2a;">Back</div>
<div class="t" style="left:1797.0px;top:1115.6px;font-size:25.44px;transform:scaleX(1.098);color:#2a2a2a;">Next</div>
<svg width="300" height="75" style="left:1620px;top:1073px"><g fill="none" stroke-linejoin="round" opacity="0.85"><path d="M11.3 11.6L52.5 19.3L48.2 39.1M11.3 11.6L16.4 44.3L37 60.6L78.3 46.8L21.6 43.4" stroke="#fff" stroke-opacity="0.55" stroke-width="5"/><path d="M11.3 11.6L52.5 19.3L48.2 39.1M11.3 11.6L16.4 44.3L37 60.6L78.3 46.8L21.6 43.4" stroke="#b23a48" stroke-width="2.6"/><path d="M21.6 22.8L32.7 37.4L54.2 9.9" stroke="#fff" stroke-opacity="0.6" stroke-width="6.5"/><path d="M21.6 22.8L32.7 37.4L54.2 9.9" stroke="#383838" stroke-width="3.6"/></g></svg>
<div class="t" style="left:1673.3px;top:1089.4px;font-size:26.74px;transform:scaleX(0.973);color:rgba(168,52,64,0.88);font-weight:bold;text-shadow:0 0 1px rgba(255,255,255,0.9),0 0 1px rgba(255,255,255,0.9);">NOTEBOOK</div>
<div class="t" style="left:1823.6px;top:1089.4px;font-size:26.74px;transform:scaleX(0.932);color:rgba(48,48,48,0.9);font-weight:bold;text-shadow:0 0 1px rgba(255,255,255,0.9),0 0 1px rgba(255,255,255,0.9);">CHECK</div></body></html>
